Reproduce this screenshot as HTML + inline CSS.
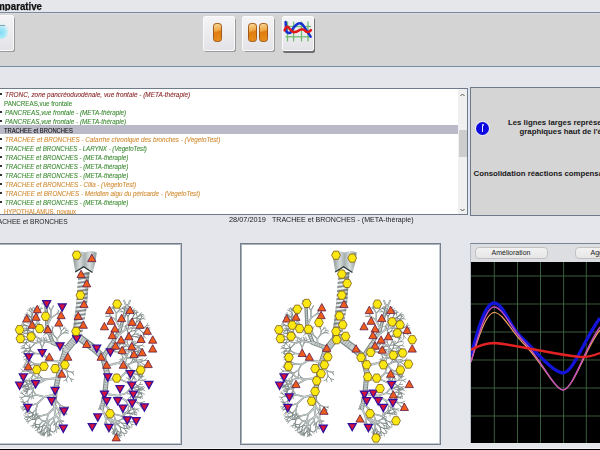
<!DOCTYPE html><html><head><meta charset="utf-8"><style>
*{margin:0;padding:0;box-sizing:border-box}
html,body{width:600px;height:450px;overflow:hidden;background:#e5e6eb;font-family:"Liberation Sans", sans-serif}
.abs{position:absolute}
.t{position:absolute;white-space:nowrap;transform-origin:0 0}
</style></head><body>

<div class="abs" style="left:0;top:0;width:600px;height:12px;background:#e6e7eb"></div>
<div class="t" style="left:-14.9px;top:0.4px;font-size:10.5px;font-weight:bold;color:#111;line-height:12px;transform:scaleX(0.92);-webkit-text-stroke:0.25px #111">comparative</div>
<div class="abs" style="left:0;top:11px;width:600px;height:1px;background:#e2e9f3"></div>
<div class="abs" style="left:0;top:12px;width:600px;height:1px;background:#7c8898"></div>
<div class="abs" style="left:0;top:13px;width:600px;height:53px;background:#d4d4d4"></div>
<div class="abs" style="left:0;top:13px;width:600px;height:1px;background:#d6dce2"></div>
<div class="abs" style="left:0;top:65px;width:600px;height:1px;background:#d0d6da"></div>
<div class="abs" style="left:0;top:66px;width:600px;height:1px;background:#7c8898"></div>
<div class="abs" style="left:0;top:67px;width:600px;height:1px;background:#dfe8f3"></div>
<div class="abs" style="left:-4.5px;top:16.5px;width:19.5px;height:35.5px;border-radius:2px;background:#9a9a9a;filter:blur(0.6px)"></div>
<div class="abs" style="left:-6px;top:15px;width:19.5px;height:35.5px;border-radius:2px;background:linear-gradient(#f4f4f6,#e4e4e8);border:1px solid #fafafa"><div class="abs" style="left:-2px;top:7px;width:15px;height:16px;border-radius:45%;background:radial-gradient(ellipse at 55% 60%,#7fdcf2 0%,#a8e8f8 35%,rgba(190,240,252,0.6) 60%,rgba(230,245,250,0) 75%)"></div><div class="abs" style="left:5px;top:8.5px;width:5px;height:1px;background:#9aa0a4"></div></div>
<div class="abs" style="left:204.0px;top:17.5px;width:32px;height:34.5px;border-radius:2px;background:#9a9a9a;filter:blur(0.6px)"></div>
<div class="abs" style="left:202.5px;top:16px;width:32px;height:34.5px;border-radius:2px;background:linear-gradient(#f4f4f6,#e4e4e8);border:1px solid #fafafa"><div class="abs" style="left:9.8px;top:6.3px;width:9px;height:18.5px;border-radius:3.2px;border:1px solid #a05a18;background:linear-gradient(165deg,#f8d898 0%,#f0a848 38%,#e07c10 48%,#e8901c 100%)"></div></div>
<div class="abs" style="left:243.5px;top:17.5px;width:31.5px;height:34.5px;border-radius:2px;background:#9a9a9a;filter:blur(0.6px)"></div>
<div class="abs" style="left:242px;top:16px;width:31.5px;height:34.5px;border-radius:2px;background:linear-gradient(#f4f4f6,#e4e4e8);border:1px solid #fafafa"><div class="abs" style="left:5.3px;top:6.3px;width:9px;height:18.5px;border-radius:3.2px;border:1px solid #a05a18;background:linear-gradient(165deg,#f8d898 0%,#f0a848 38%,#e07c10 48%,#e8901c 100%)"></div><div class="abs" style="left:16px;top:6.3px;width:9px;height:18.5px;border-radius:3.2px;border:1px solid #a05a18;background:linear-gradient(165deg,#f8d898 0%,#f0a848 38%,#e07c10 48%,#e8901c 100%)"></div></div>
<div class="abs" style="left:283.0px;top:17.5px;width:32px;height:35px;border-radius:2px;background:#707070;filter:blur(0.6px)"></div>
<div class="abs" style="left:281.5px;top:16px;width:32px;height:35px;border-radius:2px;background:linear-gradient(#f4f4f6,#e4e4e8);border:1px solid #fafafa"><svg class="abs" style="left:-1px;top:-1px" width="32" height="35" viewBox="0 0 32 35">
<g stroke="#5cb45c" stroke-width="1.3" fill="none" opacity="0.85">
<line x1="5.5" y1="5.5" x2="5.5" y2="25.5"/><line x1="11.6" y1="5.5" x2="11.6" y2="25.5"/><line x1="19.5" y1="5.5" x2="19.5" y2="25.5"/><line x1="26" y1="5.5" x2="26" y2="25.5"/>
<line x1="3.5" y1="10.5" x2="29" y2="10.5"/><line x1="3.5" y1="20.8" x2="29" y2="20.8"/></g>
<path d="M3.6,6 L4.3,15.5 Q5.5,17.5 8.4,16.7 Q12,10 16,7.6 Q19.5,6 22.3,11 L28.6,20.6" stroke="#1830d0" stroke-width="2.5" fill="none" stroke-linecap="round"/>
<path d="M2.6,14.4 Q4,10.2 5.8,10.8 Q9,15 11.6,16.3 Q15,16.3 18.5,13.6 Q21.5,12.5 24,15.6 Q26.5,17 29,14.2" stroke="#e01818" stroke-width="2.5" fill="none" stroke-linecap="round"/>
</svg></div>
<div class="abs" style="left:0;top:88px;width:468px;height:127px;background:#fff;border:1px solid #707b8a;border-left:none"></div>
<div class="abs" style="left:0;top:89px;width:458px;height:125px;overflow:hidden">
<div class="abs" style="left:0;top:3.5px;width:1.5px;height:2px;background:#333"></div>
<div class="t" style="left:5.2px;top:0.7px;font-size:7px;line-height:9px;color:#8a2828;font-style:italic;transform:scaleX(0.9175);-webkit-text-stroke:0.1px #8a2828">TRONC, zone pancréoduodénale, vue frontale - (META-thérapie)</div>
<div class="t" style="left:4.3px;top:9.7px;font-size:7px;line-height:9px;color:#3a8a30;transform:scaleX(0.89);-webkit-text-stroke:0.1px #3a8a30">PANCREAS,vue frontale</div>
<div class="abs" style="left:0;top:21.5px;width:1.5px;height:2px;background:#333"></div>
<div class="t" style="left:5.2px;top:18.7px;font-size:7px;line-height:9px;color:#3a8a30;font-style:italic;transform:scaleX(0.905);-webkit-text-stroke:0.1px #3a8a30">PANCREAS,vue frontale - (META-thérapie)</div>
<div class="abs" style="left:0;top:30.5px;width:1.5px;height:2px;background:#333"></div>
<div class="t" style="left:5.2px;top:27.7px;font-size:7px;line-height:9px;color:#3a8a30;font-style:italic;transform:scaleX(0.905);-webkit-text-stroke:0.1px #3a8a30">PANCREAS,vue frontale - (META-thérapie)</div>
<div class="abs" style="left:0;top:36px;width:458px;height:9px;background:#b9b9c7"></div>
<div class="t" style="left:4.3px;top:36.7px;font-size:7px;line-height:9px;color:#111;transform:scaleX(0.83);-webkit-text-stroke:0.1px #111">TRACHEE et BRONCHES</div>
<div class="abs" style="left:0;top:48.5px;width:1.5px;height:2px;background:#333"></div>
<div class="t" style="left:5.2px;top:45.7px;font-size:7px;line-height:9px;color:#d08a30;font-style:italic;transform:scaleX(0.9015);-webkit-text-stroke:0.1px #d08a30">TRACHEE et BRONCHES - Catarrhe chronique des bronches - (VegetoTest)</div>
<div class="abs" style="left:0;top:57.5px;width:1.5px;height:2px;background:#333"></div>
<div class="t" style="left:5.2px;top:54.7px;font-size:7px;line-height:9px;color:#3a8a30;font-style:italic;transform:scaleX(0.8726);-webkit-text-stroke:0.1px #3a8a30">TRACHEE et BRONCHES - LARYNX - (VegetoTest)</div>
<div class="abs" style="left:0;top:66.5px;width:1.5px;height:2px;background:#333"></div>
<div class="t" style="left:5.2px;top:63.7px;font-size:7px;line-height:9px;color:#3a8a30;font-style:italic;transform:scaleX(0.8787);-webkit-text-stroke:0.1px #3a8a30">TRACHEE et BRONCHES - (META-thérapie)</div>
<div class="abs" style="left:0;top:75.5px;width:1.5px;height:2px;background:#333"></div>
<div class="t" style="left:5.2px;top:72.7px;font-size:7px;line-height:9px;color:#3a8a30;font-style:italic;transform:scaleX(0.8787);-webkit-text-stroke:0.1px #3a8a30">TRACHEE et BRONCHES - (META-thérapie)</div>
<div class="abs" style="left:0;top:84.5px;width:1.5px;height:2px;background:#333"></div>
<div class="t" style="left:5.2px;top:81.7px;font-size:7px;line-height:9px;color:#3a8a30;font-style:italic;transform:scaleX(0.8787);-webkit-text-stroke:0.1px #3a8a30">TRACHEE et BRONCHES - (META-thérapie)</div>
<div class="abs" style="left:0;top:93.5px;width:1.5px;height:2px;background:#333"></div>
<div class="t" style="left:5.2px;top:90.7px;font-size:7px;line-height:9px;color:#d08a30;font-style:italic;transform:scaleX(0.8826);-webkit-text-stroke:0.1px #d08a30">TRACHEE et BRONCHES - Cilia - (VegetoTest)</div>
<div class="abs" style="left:0;top:102.5px;width:1.5px;height:2px;background:#333"></div>
<div class="t" style="left:5.2px;top:99.7px;font-size:7px;line-height:9px;color:#d08a30;font-style:italic;transform:scaleX(0.896);-webkit-text-stroke:0.1px #d08a30">TRACHEE et BRONCHES - Méridien aigu du péricarde - (VegetoTest)</div>
<div class="abs" style="left:0;top:111.5px;width:1.5px;height:2px;background:#333"></div>
<div class="t" style="left:5.2px;top:108.7px;font-size:7px;line-height:9px;color:#3a8a30;font-style:italic;transform:scaleX(0.8787);-webkit-text-stroke:0.1px #3a8a30">TRACHEE et BRONCHES - (META-thérapie)</div>
<div class="t" style="left:4.3px;top:117.7px;font-size:7px;line-height:9px;color:#d08a30;transform:scaleX(0.854);-webkit-text-stroke:0.1px #d08a30">HYPOTHALAMUS, noyaux</div>
</div>
<div class="abs" style="left:458px;top:89px;width:9px;height:125px;background:#f0f0f0"></div>
<div class="abs" style="left:458.5px;top:129.5px;width:8px;height:27.5px;background:#cdcdcd"></div>
<svg class="abs" style="left:458px;top:90px" width="9" height="125"><path d="M2.5,6 L4.5,4 L6.5,6" stroke="#555" stroke-width="1" fill="none"/><path d="M2.5,119 L4.5,121 L6.5,119" stroke="#555" stroke-width="1" fill="none"/></svg>
<div class="abs" style="left:470px;top:87px;width:140px;height:129px;background:#d5d5d6;border:1px solid #707b8a"></div>
<div class="abs" style="left:468px;top:87px;width:2px;height:129px;background:#dfe8f2"></div>
<div class="abs" style="left:476.2px;top:121.9px;width:13px;height:13px;border-radius:50%;background:#0c08e0;box-shadow:0 0 0 1px rgba(240,240,255,0.7)"></div>
<div class="abs" style="left:481.8px;top:123.9px;width:1.8px;height:1.8px;border-radius:50%;background:#e8e8ff"></div><div class="abs" style="left:481.9px;top:126.2px;width:1.6px;height:6px;background:#e8e8ff"></div>
<div class="t" style="left:508px;top:117.5px;font-size:7.8px;font-weight:bold;color:#181818;line-height:9px">Les lignes larges représentent</div>
<div class="t" style="left:519.5px;top:126.5px;font-size:7.8px;font-weight:bold;color:#181818;line-height:9px">graphiques haut de l'écran</div>
<div class="t" style="left:473.5px;top:168.7px;font-size:7.8px;font-weight:bold;color:#181818;line-height:9px">Consolidation réactions compensatoires</div>
<div class="t" style="left:-11.5px;top:216px;font-size:7.4px;color:#222;line-height:11px;transform:scaleX(0.9)">TRACHEE et BRONCHES</div>
<div class="t" style="left:228.5px;top:214px;font-size:7.6px;color:#1a1a1a;line-height:11px;transform:scaleX(0.97)">28/07/2019</div>
<div class="t" style="left:271.5px;top:214px;font-size:7.6px;color:#1a1a1a;line-height:11px;transform:scaleX(0.93)">TRACHEE et BRONCHES - (META-thérapie)</div>
<div class="abs" style="left:-20px;top:243px;width:202px;height:202px;background:#fff;border:1px solid #76808c;box-shadow:inset -1px -1px 0 #c4cad2, inset 1px 1px 0 #a8b0ba"></div>
<div class="abs" style="left:240px;top:243px;width:201px;height:202px;background:#fff;border:1px solid #76808c;box-shadow:inset -1px -1px 0 #c4cad2, inset 1px 1px 0 #a8b0ba"></div>
<svg class="abs" style="left:-19px;top:244px" width="199" height="199" viewBox="-19 244 199 199"><defs><linearGradient id="lx" x1="0" x2="1"><stop offset="0" stop-color="#8a9494"/><stop offset="0.3" stop-color="#d4dada"/><stop offset="0.5" stop-color="#a8b0b0"/><stop offset="0.7" stop-color="#d8dede"/><stop offset="1" stop-color="#8e9898"/></linearGradient>
<linearGradient id="tr" x1="0" x2="1"><stop offset="0" stop-color="#727c7c"/><stop offset="0.3" stop-color="#e6eaea"/><stop offset="0.65" stop-color="#f6f8f8"/><stop offset="1" stop-color="#7e8888"/></linearGradient>
<pattern id="rings" width="11" height="4" patternUnits="userSpaceOnUse" patternTransform="rotate(-8)"><rect y="2.2" width="11" height="1.6" fill="#5e6868" opacity="0.9"/></pattern></defs>
<path d="M78.5,272 L89.5,272 L87,305 L82,336 L72,338 L76,305 Z" fill="url(#tr)"/>
<path d="M78.5,272 L89.5,272 L87,305 L82,336 L72,338 L76,305 Z" fill="url(#rings)"/>
<path d="M72.6,252.5 Q78,249.5 84.5,252.5 Q91,249.5 96.8,252.5 L95.5,262 L92.6,272.5 L84,267.5 L75.4,272.5 L73.6,262 Z" fill="url(#lx)"/>
<path d="M75.2,272 L83.6,266.8 L92.4,272.5" stroke="#263030" stroke-width="1.2" fill="none"/><g stroke="#7a8684" stroke-linecap="round" fill="none"><line x1="76.0" y1="338.0" x2="66.0" y2="350.0" stroke-width="7.20"/><line x1="66.0" y1="350.0" x2="60.0" y2="368.0" stroke-width="6.27"/><line x1="60.0" y1="368.0" x2="56.0" y2="388.0" stroke-width="5.33"/><line x1="56.0" y1="388.0" x2="54.0" y2="404.0" stroke-width="4.40"/><line x1="80.0" y1="338.0" x2="92.0" y2="347.0" stroke-width="7.20"/><line x1="92.0" y1="347.0" x2="103.0" y2="357.0" stroke-width="6.50"/><line x1="103.0" y1="357.0" x2="107.0" y2="373.0" stroke-width="5.80"/><line x1="107.0" y1="373.0" x2="105.0" y2="392.0" stroke-width="5.10"/><line x1="105.0" y1="392.0" x2="102.0" y2="408.0" stroke-width="4.40"/><line x1="64.0" y1="347.0" x2="53.0" y2="343.0" stroke-width="4.40"/><line x1="53.0" y1="343.0" x2="47.0" y2="328.0" stroke-width="3.90"/><line x1="47.0" y1="328.0" x2="46.0" y2="306.0" stroke-width="3.40"/><line x1="103.0" y1="357.0" x2="111.0" y2="345.0" stroke-width="4.40"/><line x1="111.0" y1="345.0" x2="120.0" y2="330.0" stroke-width="3.90"/><line x1="120.0" y1="330.0" x2="127.0" y2="306.0" stroke-width="3.40"/><line x1="53.0" y1="343.0" x2="43.2" y2="341.0" stroke-width="1.90"/><line x1="43.2" y1="341.0" x2="35.4" y2="343.2" stroke-width="1.53"/><line x1="35.4" y1="343.2" x2="30.9" y2="347.4" stroke-width="1.23"/><line x1="30.9" y1="347.4" x2="29.0" y2="351.8" stroke-width="1.01"/><line x1="29.0" y1="351.8" x2="30.0" y2="355.1" stroke-width="0.83"/><line x1="30.0" y1="355.1" x2="31.5" y2="357.3" stroke-width="0.70"/><line x1="30.0" y1="355.1" x2="30.1" y2="357.4" stroke-width="0.70"/><line x1="29.0" y1="351.8" x2="26.1" y2="353.7" stroke-width="0.83"/><line x1="26.1" y1="353.7" x2="25.1" y2="356.2" stroke-width="0.70"/><line x1="26.1" y1="353.7" x2="23.3" y2="353.2" stroke-width="0.70"/><line x1="30.9" y1="347.4" x2="26.5" y2="348.7" stroke-width="1.01"/><line x1="26.5" y1="348.7" x2="24.3" y2="351.6" stroke-width="0.83"/><line x1="24.3" y1="351.6" x2="24.5" y2="354.2" stroke-width="0.70"/><line x1="24.3" y1="351.6" x2="21.5" y2="352.4" stroke-width="0.70"/><line x1="26.5" y1="348.7" x2="23.4" y2="348.0" stroke-width="0.83"/><line x1="23.4" y1="348.0" x2="20.9" y2="348.7" stroke-width="0.70"/><line x1="23.4" y1="348.0" x2="21.2" y2="346.8" stroke-width="0.70"/><line x1="35.4" y1="343.2" x2="29.8" y2="341.4" stroke-width="1.23"/><line x1="29.8" y1="341.4" x2="25.9" y2="343.1" stroke-width="1.01"/><line x1="25.9" y1="343.1" x2="24.1" y2="345.5" stroke-width="0.83"/><line x1="24.1" y1="345.5" x2="24.4" y2="347.6" stroke-width="0.70"/><line x1="24.1" y1="345.5" x2="22.1" y2="346.1" stroke-width="0.70"/><line x1="25.9" y1="343.1" x2="22.5" y2="342.2" stroke-width="0.83"/><line x1="22.5" y1="342.2" x2="19.8" y2="343.0" stroke-width="0.70"/><line x1="22.5" y1="342.2" x2="20.1" y2="340.8" stroke-width="0.70"/><line x1="29.8" y1="341.4" x2="27.8" y2="337.8" stroke-width="1.01"/><line x1="27.8" y1="337.8" x2="24.8" y2="336.4" stroke-width="0.83"/><line x1="24.8" y1="336.4" x2="22.5" y2="336.8" stroke-width="0.70"/><line x1="24.8" y1="336.4" x2="23.5" y2="334.4" stroke-width="0.70"/><line x1="27.8" y1="337.8" x2="27.6" y2="334.8" stroke-width="0.83"/><line x1="27.6" y1="334.8" x2="26.6" y2="333.0" stroke-width="0.70"/><line x1="27.6" y1="334.8" x2="28.4" y2="332.9" stroke-width="0.70"/><line x1="43.2" y1="341.0" x2="36.6" y2="337.1" stroke-width="1.53"/><line x1="36.6" y1="337.1" x2="31.1" y2="336.5" stroke-width="1.23"/><line x1="31.1" y1="336.5" x2="27.7" y2="339.1" stroke-width="1.01"/><line x1="27.7" y1="339.1" x2="26.3" y2="342.0" stroke-width="0.83"/><line x1="26.3" y1="342.0" x2="26.3" y2="344.7" stroke-width="0.70"/><line x1="26.3" y1="342.0" x2="23.9" y2="343.2" stroke-width="0.70"/><line x1="27.7" y1="339.1" x2="24.6" y2="339.8" stroke-width="0.83"/><line x1="24.6" y1="339.8" x2="22.7" y2="341.5" stroke-width="0.70"/><line x1="24.6" y1="339.8" x2="22.1" y2="339.0" stroke-width="0.70"/><line x1="31.1" y1="336.5" x2="28.0" y2="333.5" stroke-width="1.01"/><line x1="28.0" y1="333.5" x2="25.1" y2="333.3" stroke-width="0.83"/><line x1="25.1" y1="333.3" x2="23.1" y2="334.0" stroke-width="0.70"/><line x1="25.1" y1="333.3" x2="23.0" y2="332.3" stroke-width="0.70"/><line x1="28.0" y1="333.5" x2="27.3" y2="330.3" stroke-width="0.83"/><line x1="27.3" y1="330.3" x2="25.6" y2="328.6" stroke-width="0.70"/><line x1="27.3" y1="330.3" x2="27.6" y2="327.9" stroke-width="0.70"/><line x1="36.6" y1="337.1" x2="33.2" y2="332.0" stroke-width="1.23"/><line x1="33.2" y1="332.0" x2="29.2" y2="330.7" stroke-width="1.01"/><line x1="29.2" y1="330.7" x2="26.3" y2="330.5" stroke-width="0.83"/><line x1="26.3" y1="330.5" x2="24.4" y2="331.4" stroke-width="0.70"/><line x1="26.3" y1="330.5" x2="24.7" y2="329.1" stroke-width="0.70"/><line x1="29.2" y1="330.7" x2="26.6" y2="328.4" stroke-width="0.83"/><line x1="26.6" y1="328.4" x2="24.3" y2="328.1" stroke-width="0.70"/><line x1="26.6" y1="328.4" x2="25.9" y2="326.1" stroke-width="0.70"/><line x1="33.2" y1="332.0" x2="33.3" y2="327.1" stroke-width="1.01"/><line x1="33.3" y1="327.1" x2="30.7" y2="324.2" stroke-width="0.83"/><line x1="30.7" y1="324.2" x2="27.8" y2="323.7" stroke-width="0.70"/><line x1="30.7" y1="324.2" x2="30.4" y2="321.0" stroke-width="0.70"/><line x1="33.3" y1="327.1" x2="35.7" y2="324.2" stroke-width="0.83"/><line x1="35.7" y1="324.2" x2="36.8" y2="321.4" stroke-width="0.70"/><line x1="35.7" y1="324.2" x2="38.2" y2="323.2" stroke-width="0.70"/><line x1="49.0" y1="334.0" x2="41.1" y2="327.9" stroke-width="1.90"/><line x1="41.1" y1="327.9" x2="34.7" y2="325.2" stroke-width="1.53"/><line x1="34.7" y1="325.2" x2="30.0" y2="326.7" stroke-width="1.23"/><line x1="30.0" y1="326.7" x2="28.0" y2="329.6" stroke-width="1.01"/><line x1="28.0" y1="329.6" x2="27.6" y2="332.4" stroke-width="0.83"/><line x1="27.6" y1="332.4" x2="28.2" y2="334.4" stroke-width="0.70"/><line x1="27.6" y1="332.4" x2="26.1" y2="333.9" stroke-width="0.70"/><line x1="28.0" y1="329.6" x2="25.4" y2="330.6" stroke-width="0.83"/><line x1="25.4" y1="330.6" x2="23.6" y2="332.1" stroke-width="0.70"/><line x1="25.4" y1="330.6" x2="23.5" y2="330.5" stroke-width="0.70"/><line x1="30.0" y1="326.7" x2="26.2" y2="325.5" stroke-width="1.01"/><line x1="26.2" y1="325.5" x2="23.4" y2="325.7" stroke-width="0.83"/><line x1="23.4" y1="325.7" x2="21.6" y2="326.9" stroke-width="0.70"/><line x1="23.4" y1="325.7" x2="21.6" y2="324.6" stroke-width="0.70"/><line x1="26.2" y1="325.5" x2="23.8" y2="324.2" stroke-width="0.83"/><line x1="23.8" y1="324.2" x2="21.9" y2="323.9" stroke-width="0.70"/><line x1="23.8" y1="324.2" x2="22.7" y2="322.6" stroke-width="0.70"/><line x1="34.7" y1="325.2" x2="32.1" y2="321.2" stroke-width="1.23"/><line x1="32.1" y1="321.2" x2="29.1" y2="319.0" stroke-width="1.01"/><line x1="29.1" y1="319.0" x2="26.3" y2="318.4" stroke-width="0.83"/><line x1="26.3" y1="318.4" x2="24.3" y2="319.4" stroke-width="0.70"/><line x1="26.3" y1="318.4" x2="24.6" y2="316.8" stroke-width="0.70"/><line x1="29.1" y1="319.0" x2="27.5" y2="316.5" stroke-width="0.83"/><line x1="27.5" y1="316.5" x2="25.8" y2="315.3" stroke-width="0.70"/><line x1="27.5" y1="316.5" x2="27.6" y2="314.1" stroke-width="0.70"/><line x1="32.1" y1="321.2" x2="31.3" y2="317.9" stroke-width="1.01"/><line x1="31.3" y1="317.9" x2="29.5" y2="316.1" stroke-width="0.83"/><line x1="29.5" y1="316.1" x2="27.8" y2="315.6" stroke-width="0.70"/><line x1="29.5" y1="316.1" x2="28.8" y2="314.5" stroke-width="0.70"/><line x1="31.3" y1="317.9" x2="31.6" y2="315.5" stroke-width="0.83"/><line x1="31.6" y1="315.5" x2="30.6" y2="313.8" stroke-width="0.70"/><line x1="31.6" y1="315.5" x2="32.5" y2="314.0" stroke-width="0.70"/><line x1="41.1" y1="327.9" x2="37.8" y2="320.9" stroke-width="1.53"/><line x1="37.8" y1="320.9" x2="33.4" y2="317.3" stroke-width="1.23"/><line x1="33.4" y1="317.3" x2="29.3" y2="316.7" stroke-width="1.01"/><line x1="29.3" y1="316.7" x2="26.3" y2="318.0" stroke-width="0.83"/><line x1="26.3" y1="318.0" x2="25.0" y2="320.3" stroke-width="0.70"/><line x1="26.3" y1="318.0" x2="24.1" y2="317.5" stroke-width="0.70"/><line x1="29.3" y1="316.7" x2="27.2" y2="314.6" stroke-width="0.83"/><line x1="27.2" y1="314.6" x2="25.1" y2="314.2" stroke-width="0.70"/><line x1="27.2" y1="314.6" x2="27.0" y2="312.3" stroke-width="0.70"/><line x1="33.4" y1="317.3" x2="32.0" y2="313.2" stroke-width="1.01"/><line x1="32.0" y1="313.2" x2="29.9" y2="311.0" stroke-width="0.83"/><line x1="29.9" y1="311.0" x2="27.5" y2="310.1" stroke-width="0.70"/><line x1="29.9" y1="311.0" x2="29.0" y2="308.7" stroke-width="0.70"/><line x1="32.0" y1="313.2" x2="31.9" y2="310.1" stroke-width="0.83"/><line x1="31.9" y1="310.1" x2="30.8" y2="307.9" stroke-width="0.70"/><line x1="31.9" y1="310.1" x2="32.6" y2="307.9" stroke-width="0.70"/><line x1="37.8" y1="320.9" x2="37.2" y2="315.5" stroke-width="1.23"/><line x1="37.2" y1="315.5" x2="34.8" y2="311.9" stroke-width="1.01"/><line x1="34.8" y1="311.9" x2="32.1" y2="309.9" stroke-width="0.83"/><line x1="32.1" y1="309.9" x2="29.6" y2="308.7" stroke-width="0.70"/><line x1="32.1" y1="309.9" x2="30.6" y2="307.8" stroke-width="0.70"/><line x1="34.8" y1="311.9" x2="34.5" y2="308.9" stroke-width="0.83"/><line x1="34.5" y1="308.9" x2="33.3" y2="307.2" stroke-width="0.70"/><line x1="34.5" y1="308.9" x2="35.5" y2="306.9" stroke-width="0.70"/><line x1="37.2" y1="315.5" x2="38.8" y2="311.5" stroke-width="1.01"/><line x1="38.8" y1="311.5" x2="38.2" y2="308.1" stroke-width="0.83"/><line x1="38.2" y1="308.1" x2="36.6" y2="306.1" stroke-width="0.70"/><line x1="38.2" y1="308.1" x2="39.4" y2="305.9" stroke-width="0.70"/><line x1="38.8" y1="311.5" x2="40.7" y2="309.1" stroke-width="0.83"/><line x1="40.7" y1="309.1" x2="41.2" y2="307.0" stroke-width="0.70"/><line x1="40.7" y1="309.1" x2="42.8" y2="308.2" stroke-width="0.70"/><line x1="47.0" y1="326.0" x2="51.0" y2="318.0" stroke-width="1.73"/><line x1="51.0" y1="318.0" x2="50.9" y2="310.8" stroke-width="1.39"/><line x1="50.9" y1="310.8" x2="48.5" y2="306.3" stroke-width="1.13"/><line x1="48.5" y1="306.3" x2="45.1" y2="304.2" stroke-width="0.93"/><line x1="45.1" y1="304.2" x2="41.8" y2="303.8" stroke-width="0.77"/><line x1="45.1" y1="304.2" x2="43.5" y2="302.0" stroke-width="0.77"/><line x1="48.5" y1="306.3" x2="48.7" y2="302.7" stroke-width="0.93"/><line x1="48.7" y1="302.7" x2="47.9" y2="301.6" stroke-width="0.77"/><line x1="50.9" y1="310.8" x2="53.4" y2="305.8" stroke-width="1.13"/><line x1="51.0" y1="318.0" x2="57.0" y2="313.8" stroke-width="1.39"/><line x1="57.0" y1="313.8" x2="58.4" y2="311.6" stroke-width="1.13"/><line x1="58.4" y1="311.6" x2="58.6" y2="310.6" stroke-width="0.93"/><line x1="58.6" y1="310.6" x2="58.1" y2="309.9" stroke-width="0.77"/><line x1="57.0" y1="313.8" x2="59.6" y2="313.6" stroke-width="1.13"/><line x1="59.6" y1="313.6" x2="60.3" y2="313.1" stroke-width="0.93"/><line x1="59.6" y1="313.6" x2="61.3" y2="314.6" stroke-width="0.93"/><line x1="46.0" y1="308.0" x2="43.0" y2="300.6" stroke-width="1.73"/><line x1="46.0" y1="308.0" x2="47.5" y2="304.3" stroke-width="1.73"/><line x1="47.5" y1="304.3" x2="47.1" y2="301.5" stroke-width="1.39"/><line x1="47.5" y1="304.3" x2="50.1" y2="302.3" stroke-width="1.39"/><line x1="58.0" y1="346.0" x2="57.3" y2="339.0" stroke-width="1.56"/><line x1="57.3" y1="339.0" x2="53.5" y2="335.0" stroke-width="1.26"/><line x1="53.5" y1="335.0" x2="49.4" y2="333.3" stroke-width="1.03"/><line x1="49.4" y1="333.3" x2="45.8" y2="333.7" stroke-width="0.85"/><line x1="45.8" y1="333.7" x2="43.6" y2="335.4" stroke-width="0.70"/><line x1="45.8" y1="333.7" x2="43.6" y2="332.3" stroke-width="0.70"/><line x1="49.4" y1="333.3" x2="47.3" y2="331.0" stroke-width="0.85"/><line x1="47.3" y1="331.0" x2="45.1" y2="329.7" stroke-width="0.70"/><line x1="47.3" y1="331.0" x2="46.2" y2="329.0" stroke-width="0.70"/><line x1="53.5" y1="335.0" x2="52.4" y2="331.2" stroke-width="1.03"/><line x1="52.4" y1="331.2" x2="50.2" y2="329.1" stroke-width="0.85"/><line x1="50.2" y1="329.1" x2="47.8" y2="328.3" stroke-width="0.70"/><line x1="50.2" y1="329.1" x2="49.3" y2="326.7" stroke-width="0.70"/><line x1="52.4" y1="331.2" x2="52.7" y2="328.2" stroke-width="0.85"/><line x1="52.7" y1="328.2" x2="51.7" y2="326.1" stroke-width="0.70"/><line x1="52.7" y1="328.2" x2="54.3" y2="326.5" stroke-width="0.70"/><line x1="57.3" y1="339.0" x2="60.4" y2="334.8" stroke-width="1.26"/><line x1="60.4" y1="334.8" x2="61.3" y2="331.1" stroke-width="1.03"/><line x1="61.3" y1="331.1" x2="60.3" y2="328.4" stroke-width="0.85"/><line x1="60.3" y1="328.4" x2="58.9" y2="326.4" stroke-width="0.70"/><line x1="60.3" y1="328.4" x2="60.2" y2="326.1" stroke-width="0.70"/><line x1="61.3" y1="331.1" x2="63.4" y2="328.9" stroke-width="0.85"/><line x1="63.4" y1="328.9" x2="64.3" y2="326.9" stroke-width="0.70"/><line x1="63.4" y1="328.9" x2="65.2" y2="327.8" stroke-width="0.70"/><line x1="60.4" y1="334.8" x2="63.8" y2="332.9" stroke-width="1.03"/><line x1="63.8" y1="332.9" x2="65.8" y2="330.6" stroke-width="0.85"/><line x1="65.8" y1="330.6" x2="65.9" y2="328.3" stroke-width="0.70"/><line x1="65.8" y1="330.6" x2="68.2" y2="330.2" stroke-width="0.70"/><line x1="63.8" y1="332.9" x2="66.6" y2="332.7" stroke-width="0.85"/><line x1="66.6" y1="332.7" x2="68.4" y2="331.7" stroke-width="0.70"/><line x1="66.6" y1="332.7" x2="68.5" y2="333.6" stroke-width="0.70"/><line x1="61.0" y1="362.0" x2="49.1" y2="360.2" stroke-width="2.07"/><line x1="49.1" y1="360.2" x2="41.4" y2="364.5" stroke-width="1.66"/><line x1="41.4" y1="364.5" x2="38.6" y2="369.9" stroke-width="1.34"/><line x1="38.6" y1="369.9" x2="38.7" y2="374.2" stroke-width="1.09"/><line x1="38.7" y1="374.2" x2="40.7" y2="377.0" stroke-width="0.89"/><line x1="40.7" y1="377.0" x2="43.1" y2="378.2" stroke-width="0.74"/><line x1="40.7" y1="377.0" x2="41.5" y2="379.4" stroke-width="0.74"/><line x1="38.7" y1="374.2" x2="37.8" y2="377.2" stroke-width="0.89"/><line x1="37.8" y1="377.2" x2="38.0" y2="379.3" stroke-width="0.74"/><line x1="37.8" y1="377.2" x2="36.3" y2="379.1" stroke-width="0.74"/><line x1="38.6" y1="369.9" x2="34.4" y2="372.8" stroke-width="1.09"/><line x1="34.4" y1="372.8" x2="32.4" y2="376.2" stroke-width="0.89"/><line x1="32.4" y1="376.2" x2="31.6" y2="379.2" stroke-width="0.74"/><line x1="32.4" y1="376.2" x2="29.9" y2="378.3" stroke-width="0.74"/><line x1="34.4" y1="372.8" x2="30.6" y2="372.7" stroke-width="0.89"/><line x1="30.6" y1="372.7" x2="28.2" y2="373.9" stroke-width="0.74"/><line x1="30.6" y1="372.7" x2="28.5" y2="371.0" stroke-width="0.74"/><line x1="41.4" y1="364.5" x2="35.4" y2="363.9" stroke-width="1.34"/><line x1="35.4" y1="363.9" x2="30.7" y2="365.6" stroke-width="1.09"/><line x1="30.7" y1="365.6" x2="28.5" y2="368.5" stroke-width="0.89"/><line x1="28.5" y1="368.5" x2="28.1" y2="371.1" stroke-width="0.74"/><line x1="28.5" y1="368.5" x2="26.2" y2="369.7" stroke-width="0.74"/><line x1="30.7" y1="365.6" x2="26.9" y2="364.7" stroke-width="0.89"/><line x1="26.9" y1="364.7" x2="24.2" y2="364.9" stroke-width="0.74"/><line x1="26.9" y1="364.7" x2="24.5" y2="362.9" stroke-width="0.74"/><line x1="35.4" y1="363.9" x2="31.3" y2="362.0" stroke-width="1.09"/><line x1="31.3" y1="362.0" x2="27.9" y2="361.8" stroke-width="0.89"/><line x1="27.9" y1="361.8" x2="25.4" y2="363.1" stroke-width="0.74"/><line x1="27.9" y1="361.8" x2="25.6" y2="360.4" stroke-width="0.74"/><line x1="31.3" y1="362.0" x2="29.3" y2="359.2" stroke-width="0.89"/><line x1="29.3" y1="359.2" x2="27.4" y2="357.7" stroke-width="0.74"/><line x1="29.3" y1="359.2" x2="29.0" y2="356.6" stroke-width="0.74"/><line x1="49.1" y1="360.2" x2="42.7" y2="353.8" stroke-width="1.66"/><line x1="42.7" y1="353.8" x2="35.5" y2="353.5" stroke-width="1.34"/><line x1="35.5" y1="353.5" x2="29.9" y2="355.4" stroke-width="1.09"/><line x1="29.9" y1="355.4" x2="26.9" y2="358.3" stroke-width="0.89"/><line x1="26.9" y1="358.3" x2="26.1" y2="361.6" stroke-width="0.74"/><line x1="26.9" y1="358.3" x2="23.8" y2="359.8" stroke-width="0.74"/><line x1="29.9" y1="355.4" x2="25.7" y2="355.7" stroke-width="0.89"/><line x1="25.7" y1="355.7" x2="23.2" y2="357.3" stroke-width="0.74"/><line x1="25.7" y1="355.7" x2="23.5" y2="353.7" stroke-width="0.74"/><line x1="35.5" y1="353.5" x2="30.9" y2="351.0" stroke-width="1.09"/><line x1="30.9" y1="351.0" x2="26.8" y2="351.0" stroke-width="0.89"/><line x1="26.8" y1="351.0" x2="23.7" y2="352.1" stroke-width="0.74"/><line x1="26.8" y1="351.0" x2="24.1" y2="350.2" stroke-width="0.74"/><line x1="30.9" y1="351.0" x2="29.6" y2="347.2" stroke-width="0.89"/><line x1="29.6" y1="347.2" x2="27.2" y2="345.0" stroke-width="0.74"/><line x1="29.6" y1="347.2" x2="29.8" y2="344.2" stroke-width="0.74"/><line x1="42.7" y1="353.8" x2="42.2" y2="347.5" stroke-width="1.34"/><line x1="42.2" y1="347.5" x2="40.3" y2="343.4" stroke-width="1.09"/><line x1="40.3" y1="343.4" x2="37.9" y2="341.3" stroke-width="0.89"/><line x1="37.9" y1="341.3" x2="35.8" y2="340.8" stroke-width="0.74"/><line x1="37.9" y1="341.3" x2="37.2" y2="339.0" stroke-width="0.74"/><line x1="40.3" y1="343.4" x2="40.3" y2="339.8" stroke-width="0.89"/><line x1="40.3" y1="339.8" x2="38.8" y2="337.3" stroke-width="0.74"/><line x1="40.3" y1="339.8" x2="41.8" y2="337.4" stroke-width="0.74"/><line x1="42.2" y1="347.5" x2="44.0" y2="343.1" stroke-width="1.09"/><line x1="44.0" y1="343.1" x2="44.2" y2="339.4" stroke-width="0.89"/><line x1="44.2" y1="339.4" x2="43.3" y2="337.0" stroke-width="0.74"/><line x1="44.2" y1="339.4" x2="45.6" y2="336.9" stroke-width="0.74"/><line x1="44.0" y1="343.1" x2="46.1" y2="340.5" stroke-width="0.89"/><line x1="46.1" y1="340.5" x2="46.3" y2="338.1" stroke-width="0.74"/><line x1="46.1" y1="340.5" x2="48.2" y2="339.7" stroke-width="0.74"/><line x1="58.0" y1="378.0" x2="46.1" y2="379.2" stroke-width="2.07"/><line x1="46.1" y1="379.2" x2="38.3" y2="383.4" stroke-width="1.66"/><line x1="38.3" y1="383.4" x2="34.0" y2="387.5" stroke-width="1.34"/><line x1="34.0" y1="387.5" x2="32.2" y2="392.1" stroke-width="1.09"/><line x1="32.2" y1="392.1" x2="32.3" y2="396.0" stroke-width="0.89"/><line x1="32.3" y1="396.0" x2="33.6" y2="398.7" stroke-width="0.74"/><line x1="32.3" y1="396.0" x2="31.6" y2="399.1" stroke-width="0.74"/><line x1="32.2" y1="392.1" x2="29.8" y2="394.9" stroke-width="0.89"/><line x1="29.8" y1="394.9" x2="29.7" y2="397.6" stroke-width="0.74"/><line x1="29.8" y1="394.9" x2="27.3" y2="395.9" stroke-width="0.74"/><line x1="34.0" y1="387.5" x2="29.4" y2="389.0" stroke-width="1.09"/><line x1="29.4" y1="389.0" x2="26.8" y2="391.1" stroke-width="0.89"/><line x1="26.8" y1="391.1" x2="25.9" y2="393.6" stroke-width="0.74"/><line x1="26.8" y1="391.1" x2="24.1" y2="391.8" stroke-width="0.74"/><line x1="29.4" y1="389.0" x2="26.0" y2="388.2" stroke-width="0.89"/><line x1="26.0" y1="388.2" x2="23.7" y2="389.1" stroke-width="0.74"/><line x1="26.0" y1="388.2" x2="24.0" y2="386.8" stroke-width="0.74"/><line x1="38.3" y1="383.4" x2="32.1" y2="384.8" stroke-width="1.34"/><line x1="32.1" y1="384.8" x2="28.6" y2="388.5" stroke-width="1.09"/><line x1="28.6" y1="388.5" x2="27.2" y2="392.0" stroke-width="0.89"/><line x1="27.2" y1="392.0" x2="27.2" y2="394.8" stroke-width="0.74"/><line x1="27.2" y1="392.0" x2="25.2" y2="394.2" stroke-width="0.74"/><line x1="28.6" y1="388.5" x2="25.4" y2="390.1" stroke-width="0.89"/><line x1="25.4" y1="390.1" x2="23.6" y2="392.1" stroke-width="0.74"/><line x1="25.4" y1="390.1" x2="22.9" y2="390.4" stroke-width="0.74"/><line x1="32.1" y1="384.8" x2="27.3" y2="383.9" stroke-width="1.09"/><line x1="27.3" y1="383.9" x2="24.0" y2="385.8" stroke-width="0.89"/><line x1="24.0" y1="385.8" x2="22.2" y2="388.3" stroke-width="0.74"/><line x1="24.0" y1="385.8" x2="21.2" y2="386.1" stroke-width="0.74"/><line x1="27.3" y1="383.9" x2="24.9" y2="381.4" stroke-width="0.89"/><line x1="24.9" y1="381.4" x2="22.5" y2="381.0" stroke-width="0.74"/><line x1="24.9" y1="381.4" x2="24.3" y2="378.8" stroke-width="0.74"/><line x1="46.1" y1="379.2" x2="37.1" y2="378.0" stroke-width="1.66"/><line x1="37.1" y1="378.0" x2="31.1" y2="380.5" stroke-width="1.34"/><line x1="31.1" y1="380.5" x2="28.4" y2="384.4" stroke-width="1.09"/><line x1="28.4" y1="384.4" x2="28.4" y2="387.8" stroke-width="0.89"/><line x1="28.4" y1="387.8" x2="30.0" y2="389.9" stroke-width="0.74"/><line x1="28.4" y1="387.8" x2="26.9" y2="390.0" stroke-width="0.74"/><line x1="28.4" y1="384.4" x2="25.1" y2="385.3" stroke-width="0.89"/><line x1="25.1" y1="385.3" x2="23.7" y2="387.3" stroke-width="0.74"/><line x1="25.1" y1="385.3" x2="22.7" y2="384.5" stroke-width="0.74"/><line x1="31.1" y1="380.5" x2="26.3" y2="380.8" stroke-width="1.09"/><line x1="26.3" y1="380.8" x2="23.1" y2="382.8" stroke-width="0.89"/><line x1="23.1" y1="382.8" x2="21.5" y2="385.4" stroke-width="0.74"/><line x1="23.1" y1="382.8" x2="20.2" y2="382.9" stroke-width="0.74"/><line x1="26.3" y1="380.8" x2="23.1" y2="379.0" stroke-width="0.89"/><line x1="23.1" y1="379.0" x2="20.5" y2="378.6" stroke-width="0.74"/><line x1="23.1" y1="379.0" x2="21.5" y2="377.2" stroke-width="0.74"/><line x1="37.1" y1="378.0" x2="32.2" y2="373.4" stroke-width="1.34"/><line x1="32.2" y1="373.4" x2="27.4" y2="371.1" stroke-width="1.09"/><line x1="27.4" y1="371.1" x2="23.3" y2="371.0" stroke-width="0.89"/><line x1="23.3" y1="371.0" x2="20.7" y2="372.8" stroke-width="0.74"/><line x1="23.3" y1="371.0" x2="20.9" y2="368.9" stroke-width="0.74"/><line x1="27.4" y1="371.1" x2="25.0" y2="368.1" stroke-width="0.89"/><line x1="25.0" y1="368.1" x2="22.7" y2="366.8" stroke-width="0.74"/><line x1="25.0" y1="368.1" x2="24.2" y2="365.3" stroke-width="0.74"/><line x1="32.2" y1="373.4" x2="29.4" y2="369.0" stroke-width="1.09"/><line x1="29.4" y1="369.0" x2="26.0" y2="367.3" stroke-width="0.89"/><line x1="26.0" y1="367.3" x2="23.4" y2="367.1" stroke-width="0.74"/><line x1="26.0" y1="367.3" x2="24.4" y2="364.8" stroke-width="0.74"/><line x1="29.4" y1="369.0" x2="29.3" y2="365.2" stroke-width="0.89"/><line x1="29.3" y1="365.2" x2="27.6" y2="362.6" stroke-width="0.74"/><line x1="29.3" y1="365.2" x2="30.6" y2="362.8" stroke-width="0.74"/><line x1="56.0" y1="394.0" x2="44.4" y2="396.9" stroke-width="2.07"/><line x1="44.4" y1="396.9" x2="37.8" y2="403.1" stroke-width="1.66"/><line x1="37.8" y1="403.1" x2="36.1" y2="409.0" stroke-width="1.34"/><line x1="36.1" y1="409.0" x2="36.0" y2="413.5" stroke-width="1.09"/><line x1="36.0" y1="413.5" x2="37.4" y2="416.5" stroke-width="0.89"/><line x1="37.4" y1="416.5" x2="39.9" y2="417.5" stroke-width="0.74"/><line x1="37.4" y1="416.5" x2="36.9" y2="419.0" stroke-width="0.74"/><line x1="36.0" y1="413.5" x2="34.7" y2="416.8" stroke-width="0.89"/><line x1="34.7" y1="416.8" x2="35.4" y2="419.1" stroke-width="0.74"/><line x1="34.7" y1="416.8" x2="32.6" y2="418.4" stroke-width="0.74"/><line x1="36.1" y1="409.0" x2="32.9" y2="412.6" stroke-width="1.09"/><line x1="32.9" y1="412.6" x2="32.3" y2="416.4" stroke-width="0.89"/><line x1="32.3" y1="416.4" x2="33.5" y2="419.4" stroke-width="0.74"/><line x1="32.3" y1="416.4" x2="30.3" y2="418.1" stroke-width="0.74"/><line x1="32.9" y1="412.6" x2="29.3" y2="413.2" stroke-width="0.89"/><line x1="29.3" y1="413.2" x2="27.5" y2="414.9" stroke-width="0.74"/><line x1="29.3" y1="413.2" x2="26.7" y2="412.4" stroke-width="0.74"/><line x1="37.8" y1="403.1" x2="31.6" y2="405.3" stroke-width="1.34"/><line x1="31.6" y1="405.3" x2="27.8" y2="408.5" stroke-width="1.09"/><line x1="27.8" y1="408.5" x2="26.2" y2="412.1" stroke-width="0.89"/><line x1="26.2" y1="412.1" x2="25.7" y2="414.9" stroke-width="0.74"/><line x1="26.2" y1="412.1" x2="24.1" y2="414.2" stroke-width="0.74"/><line x1="27.8" y1="408.5" x2="24.6" y2="409.5" stroke-width="0.89"/><line x1="24.6" y1="409.5" x2="22.6" y2="410.9" stroke-width="0.74"/><line x1="24.6" y1="409.5" x2="21.9" y2="408.8" stroke-width="0.74"/><line x1="31.6" y1="405.3" x2="26.7" y2="405.0" stroke-width="1.09"/><line x1="26.7" y1="405.0" x2="23.5" y2="406.8" stroke-width="0.89"/><line x1="23.5" y1="406.8" x2="21.8" y2="408.9" stroke-width="0.74"/><line x1="23.5" y1="406.8" x2="20.6" y2="406.9" stroke-width="0.74"/><line x1="26.7" y1="405.0" x2="23.5" y2="402.4" stroke-width="0.89"/><line x1="23.5" y1="402.4" x2="20.9" y2="401.5" stroke-width="0.74"/><line x1="23.5" y1="402.4" x2="22.6" y2="399.3" stroke-width="0.74"/><line x1="44.4" y1="396.9" x2="36.0" y2="394.8" stroke-width="1.66"/><line x1="36.0" y1="394.8" x2="30.0" y2="397.0" stroke-width="1.34"/><line x1="30.0" y1="397.0" x2="27.7" y2="401.1" stroke-width="1.09"/><line x1="27.7" y1="401.1" x2="28.2" y2="404.6" stroke-width="0.89"/><line x1="28.2" y1="404.6" x2="29.9" y2="406.4" stroke-width="0.74"/><line x1="28.2" y1="404.6" x2="27.0" y2="406.7" stroke-width="0.74"/><line x1="27.7" y1="401.1" x2="24.7" y2="402.4" stroke-width="0.89"/><line x1="24.7" y1="402.4" x2="23.0" y2="404.3" stroke-width="0.74"/><line x1="24.7" y1="402.4" x2="22.1" y2="402.3" stroke-width="0.74"/><line x1="30.0" y1="397.0" x2="25.4" y2="396.1" stroke-width="1.09"/><line x1="25.4" y1="396.1" x2="22.1" y2="397.5" stroke-width="0.89"/><line x1="22.1" y1="397.5" x2="20.8" y2="399.6" stroke-width="0.74"/><line x1="22.1" y1="397.5" x2="19.5" y2="397.0" stroke-width="0.74"/><line x1="25.4" y1="396.1" x2="22.7" y2="393.9" stroke-width="0.89"/><line x1="22.7" y1="393.9" x2="20.3" y2="393.0" stroke-width="0.74"/><line x1="22.7" y1="393.9" x2="21.3" y2="391.6" stroke-width="0.74"/><line x1="36.0" y1="394.8" x2="32.2" y2="389.4" stroke-width="1.34"/><line x1="32.2" y1="389.4" x2="28.1" y2="386.6" stroke-width="1.09"/><line x1="28.1" y1="386.6" x2="24.5" y2="386.5" stroke-width="0.89"/><line x1="24.5" y1="386.5" x2="22.0" y2="387.3" stroke-width="0.74"/><line x1="24.5" y1="386.5" x2="22.0" y2="385.6" stroke-width="0.74"/><line x1="28.1" y1="386.6" x2="26.9" y2="382.9" stroke-width="0.89"/><line x1="26.9" y1="382.9" x2="25.0" y2="381.1" stroke-width="0.74"/><line x1="26.9" y1="382.9" x2="27.7" y2="380.2" stroke-width="0.74"/><line x1="32.2" y1="389.4" x2="31.3" y2="384.5" stroke-width="1.09"/><line x1="31.3" y1="384.5" x2="29.3" y2="381.3" stroke-width="0.89"/><line x1="29.3" y1="381.3" x2="26.5" y2="379.8" stroke-width="0.74"/><line x1="29.3" y1="381.3" x2="29.1" y2="378.5" stroke-width="0.74"/><line x1="31.3" y1="384.5" x2="32.1" y2="381.1" stroke-width="0.89"/><line x1="32.1" y1="381.1" x2="31.7" y2="378.8" stroke-width="0.74"/><line x1="32.1" y1="381.1" x2="34.0" y2="379.2" stroke-width="0.74"/><line x1="56.0" y1="406.0" x2="48.4" y2="413.9" stroke-width="1.90"/><line x1="48.4" y1="413.9" x2="46.5" y2="421.2" stroke-width="1.53"/><line x1="46.5" y1="421.2" x2="47.6" y2="426.8" stroke-width="1.23"/><line x1="47.6" y1="426.8" x2="49.5" y2="430.4" stroke-width="1.01"/><line x1="49.5" y1="430.4" x2="52.3" y2="431.8" stroke-width="0.83"/><line x1="52.3" y1="431.8" x2="54.6" y2="431.7" stroke-width="0.70"/><line x1="52.3" y1="431.8" x2="53.9" y2="433.4" stroke-width="0.70"/><line x1="49.5" y1="430.4" x2="49.8" y2="433.7" stroke-width="0.83"/><line x1="49.8" y1="433.7" x2="51.3" y2="435.8" stroke-width="0.70"/><line x1="49.8" y1="433.7" x2="48.5" y2="436.0" stroke-width="0.70"/><line x1="47.6" y1="426.8" x2="47.0" y2="431.4" stroke-width="1.01"/><line x1="47.0" y1="431.4" x2="47.9" y2="434.4" stroke-width="0.83"/><line x1="47.9" y1="434.4" x2="49.7" y2="435.8" stroke-width="0.70"/><line x1="47.9" y1="434.4" x2="47.2" y2="436.9" stroke-width="0.70"/><line x1="47.0" y1="431.4" x2="44.7" y2="433.8" stroke-width="0.83"/><line x1="44.7" y1="433.8" x2="44.1" y2="436.2" stroke-width="0.70"/><line x1="44.7" y1="433.8" x2="42.5" y2="435.0" stroke-width="0.70"/><line x1="46.5" y1="421.2" x2="43.1" y2="425.7" stroke-width="1.23"/><line x1="43.1" y1="425.7" x2="41.8" y2="429.7" stroke-width="1.01"/><line x1="41.8" y1="429.7" x2="42.1" y2="433.1" stroke-width="0.83"/><line x1="42.1" y1="433.1" x2="43.1" y2="435.7" stroke-width="0.70"/><line x1="42.1" y1="433.1" x2="41.3" y2="435.5" stroke-width="0.70"/><line x1="41.8" y1="429.7" x2="40.1" y2="432.2" stroke-width="0.83"/><line x1="40.1" y1="432.2" x2="40.2" y2="434.6" stroke-width="0.70"/><line x1="40.1" y1="432.2" x2="38.1" y2="432.8" stroke-width="0.70"/><line x1="43.1" y1="425.7" x2="39.6" y2="427.3" stroke-width="1.01"/><line x1="39.6" y1="427.3" x2="37.7" y2="429.8" stroke-width="0.83"/><line x1="37.7" y1="429.8" x2="37.9" y2="432.3" stroke-width="0.70"/><line x1="37.7" y1="429.8" x2="35.3" y2="430.7" stroke-width="0.70"/><line x1="39.6" y1="427.3" x2="36.7" y2="427.0" stroke-width="0.83"/><line x1="36.7" y1="427.0" x2="34.9" y2="428.0" stroke-width="0.70"/><line x1="36.7" y1="427.0" x2="35.0" y2="425.9" stroke-width="0.70"/><line x1="48.4" y1="413.9" x2="40.5" y2="416.0" stroke-width="1.53"/><line x1="40.5" y1="416.0" x2="36.1" y2="419.5" stroke-width="1.23"/><line x1="36.1" y1="419.5" x2="35.0" y2="423.2" stroke-width="1.01"/><line x1="35.0" y1="423.2" x2="35.7" y2="426.1" stroke-width="0.83"/><line x1="35.7" y1="426.1" x2="37.4" y2="427.6" stroke-width="0.70"/><line x1="35.7" y1="426.1" x2="34.8" y2="428.1" stroke-width="0.70"/><line x1="35.0" y1="423.2" x2="33.0" y2="425.4" stroke-width="0.83"/><line x1="33.0" y1="425.4" x2="32.8" y2="427.6" stroke-width="0.70"/><line x1="33.0" y1="425.4" x2="30.8" y2="426.1" stroke-width="0.70"/><line x1="36.1" y1="419.5" x2="31.9" y2="419.4" stroke-width="1.01"/><line x1="31.9" y1="419.4" x2="28.9" y2="421.1" stroke-width="0.83"/><line x1="28.9" y1="421.1" x2="27.8" y2="423.4" stroke-width="0.70"/><line x1="28.9" y1="421.1" x2="26.2" y2="421.2" stroke-width="0.70"/><line x1="31.9" y1="419.4" x2="29.2" y2="417.5" stroke-width="0.83"/><line x1="29.2" y1="417.5" x2="26.9" y2="416.7" stroke-width="0.70"/><line x1="29.2" y1="417.5" x2="27.8" y2="415.2" stroke-width="0.70"/><line x1="40.5" y1="416.0" x2="34.1" y2="414.8" stroke-width="1.23"/><line x1="34.1" y1="414.8" x2="30.0" y2="416.8" stroke-width="1.01"/><line x1="30.0" y1="416.8" x2="27.6" y2="419.1" stroke-width="0.83"/><line x1="27.6" y1="419.1" x2="27.0" y2="421.4" stroke-width="0.70"/><line x1="27.6" y1="419.1" x2="25.4" y2="419.7" stroke-width="0.70"/><line x1="30.0" y1="416.8" x2="26.4" y2="417.1" stroke-width="0.83"/><line x1="26.4" y1="417.1" x2="24.3" y2="418.6" stroke-width="0.70"/><line x1="26.4" y1="417.1" x2="24.1" y2="415.7" stroke-width="0.70"/><line x1="34.1" y1="414.8" x2="30.0" y2="411.4" stroke-width="1.01"/><line x1="30.0" y1="411.4" x2="26.3" y2="409.8" stroke-width="0.83"/><line x1="26.3" y1="409.8" x2="23.5" y2="409.3" stroke-width="0.70"/><line x1="26.3" y1="409.8" x2="23.8" y2="407.8" stroke-width="0.70"/><line x1="30.0" y1="411.4" x2="28.4" y2="407.6" stroke-width="0.83"/><line x1="28.4" y1="407.6" x2="25.7" y2="406.0" stroke-width="0.70"/><line x1="28.4" y1="407.6" x2="28.9" y2="404.6" stroke-width="0.70"/><line x1="56.0" y1="416.0" x2="49.3" y2="420.4" stroke-width="1.73"/><line x1="49.3" y1="420.4" x2="47.3" y2="425.9" stroke-width="1.39"/><line x1="47.3" y1="425.9" x2="47.5" y2="430.5" stroke-width="1.13"/><line x1="47.5" y1="430.5" x2="49.5" y2="433.8" stroke-width="0.93"/><line x1="49.5" y1="433.8" x2="51.7" y2="435.1" stroke-width="0.77"/><line x1="49.5" y1="433.8" x2="49.0" y2="436.4" stroke-width="0.77"/><line x1="47.5" y1="430.5" x2="45.3" y2="432.9" stroke-width="0.93"/><line x1="45.3" y1="432.9" x2="44.2" y2="435.1" stroke-width="0.77"/><line x1="45.3" y1="432.9" x2="43.2" y2="434.3" stroke-width="0.77"/><line x1="47.3" y1="425.9" x2="44.5" y2="429.4" stroke-width="1.13"/><line x1="44.5" y1="429.4" x2="43.7" y2="432.8" stroke-width="0.93"/><line x1="43.7" y1="432.8" x2="44.0" y2="435.3" stroke-width="0.77"/><line x1="43.7" y1="432.8" x2="41.9" y2="434.8" stroke-width="0.77"/><line x1="44.5" y1="429.4" x2="41.4" y2="431.4" stroke-width="0.93"/><line x1="41.4" y1="431.4" x2="40.1" y2="433.7" stroke-width="0.77"/><line x1="41.4" y1="431.4" x2="38.7" y2="432.2" stroke-width="0.77"/><line x1="49.3" y1="420.4" x2="42.9" y2="421.2" stroke-width="1.39"/><line x1="42.9" y1="421.2" x2="39.8" y2="424.4" stroke-width="1.13"/><line x1="39.8" y1="424.4" x2="38.9" y2="427.5" stroke-width="0.93"/><line x1="38.9" y1="427.5" x2="39.7" y2="429.8" stroke-width="0.77"/><line x1="38.9" y1="427.5" x2="37.0" y2="429.1" stroke-width="0.77"/><line x1="39.8" y1="424.4" x2="36.1" y2="424.6" stroke-width="0.93"/><line x1="36.1" y1="424.6" x2="33.7" y2="425.6" stroke-width="0.77"/><line x1="36.1" y1="424.6" x2="33.6" y2="423.3" stroke-width="0.77"/><line x1="42.9" y1="421.2" x2="39.4" y2="418.4" stroke-width="1.13"/><line x1="39.4" y1="418.4" x2="36.4" y2="417.8" stroke-width="0.93"/><line x1="36.4" y1="417.8" x2="34.4" y2="418.4" stroke-width="0.77"/><line x1="36.4" y1="417.8" x2="34.9" y2="416.2" stroke-width="0.77"/><line x1="39.4" y1="418.4" x2="37.9" y2="415.7" stroke-width="0.93"/><line x1="37.9" y1="415.7" x2="36.1" y2="414.3" stroke-width="0.77"/><line x1="37.9" y1="415.7" x2="37.8" y2="413.4" stroke-width="0.77"/><line x1="54.0" y1="404.0" x2="55.2" y2="413.9" stroke-width="2.07"/><line x1="55.2" y1="413.9" x2="59.1" y2="419.8" stroke-width="1.66"/><line x1="59.1" y1="419.8" x2="63.6" y2="421.3" stroke-width="1.34"/><line x1="59.1" y1="419.8" x2="59.6" y2="424.6" stroke-width="1.34"/><line x1="59.6" y1="424.6" x2="60.7" y2="425.9" stroke-width="1.09"/><line x1="60.7" y1="425.9" x2="60.8" y2="426.5" stroke-width="0.89"/><line x1="59.6" y1="424.6" x2="58.5" y2="427.9" stroke-width="1.09"/><line x1="58.5" y1="427.9" x2="59.1" y2="429.2" stroke-width="0.89"/><line x1="58.5" y1="427.9" x2="56.6" y2="429.5" stroke-width="0.89"/><line x1="55.2" y1="413.9" x2="53.9" y2="420.8" stroke-width="1.66"/><line x1="53.9" y1="420.8" x2="56.1" y2="425.6" stroke-width="1.34"/><line x1="56.1" y1="425.6" x2="58.9" y2="428.3" stroke-width="1.09"/><line x1="56.1" y1="425.6" x2="55.6" y2="429.4" stroke-width="1.09"/><line x1="55.6" y1="429.4" x2="56.4" y2="432.3" stroke-width="0.89"/><line x1="55.6" y1="429.4" x2="54.1" y2="431.8" stroke-width="0.89"/><line x1="53.9" y1="420.8" x2="50.5" y2="424.7" stroke-width="1.34"/><line x1="50.5" y1="424.7" x2="50.2" y2="428.6" stroke-width="1.09"/><line x1="50.2" y1="428.6" x2="50.9" y2="431.5" stroke-width="0.89"/><line x1="50.2" y1="428.6" x2="48.2" y2="431.1" stroke-width="0.89"/><line x1="50.5" y1="424.7" x2="46.5" y2="426.0" stroke-width="1.09"/><line x1="46.5" y1="426.0" x2="44.3" y2="428.5" stroke-width="0.89"/><line x1="46.5" y1="426.0" x2="43.2" y2="425.2" stroke-width="0.89"/><line x1="54.0" y1="404.0" x2="59.8" y2="412.1" stroke-width="1.90"/><line x1="59.8" y1="412.1" x2="66.6" y2="414.1" stroke-width="1.53"/><line x1="59.8" y1="412.1" x2="59.5" y2="419.0" stroke-width="1.53"/><line x1="59.5" y1="419.0" x2="61.9" y2="423.8" stroke-width="1.23"/><line x1="59.5" y1="419.0" x2="56.5" y2="423.0" stroke-width="1.23"/><line x1="56.5" y1="423.0" x2="55.8" y2="427.0" stroke-width="1.01"/><line x1="56.5" y1="423.0" x2="53.6" y2="425.2" stroke-width="1.01"/><line x1="62.0" y1="366.0" x2="66.9" y2="370.9" stroke-width="1.39"/><line x1="66.9" y1="370.9" x2="71.8" y2="372.3" stroke-width="1.13"/><line x1="71.8" y1="372.3" x2="73.7" y2="371.7" stroke-width="0.92"/><line x1="71.8" y1="372.3" x2="73.2" y2="373.8" stroke-width="0.92"/><line x1="73.2" y1="373.8" x2="73.7" y2="375.1" stroke-width="0.76"/><line x1="66.9" y1="370.9" x2="68.0" y2="376.1" stroke-width="1.13"/><line x1="68.0" y1="376.1" x2="70.8" y2="378.9" stroke-width="0.92"/><line x1="70.8" y1="378.9" x2="73.6" y2="379.5" stroke-width="0.76"/><line x1="70.8" y1="378.9" x2="71.7" y2="381.7" stroke-width="0.76"/><line x1="68.0" y1="376.1" x2="66.4" y2="379.5" stroke-width="0.92"/><line x1="66.4" y1="379.5" x2="67.1" y2="382.0" stroke-width="0.76"/><line x1="66.4" y1="379.5" x2="63.8" y2="380.8" stroke-width="0.76"/><line x1="111.0" y1="345.0" x2="120.8" y2="343.0" stroke-width="1.90"/><line x1="120.8" y1="343.0" x2="126.0" y2="338.5" stroke-width="1.53"/><line x1="126.0" y1="338.5" x2="128.1" y2="333.6" stroke-width="1.23"/><line x1="128.1" y1="333.6" x2="127.4" y2="329.7" stroke-width="1.01"/><line x1="127.4" y1="329.7" x2="125.7" y2="327.4" stroke-width="0.83"/><line x1="125.7" y1="327.4" x2="123.7" y2="326.4" stroke-width="0.70"/><line x1="125.7" y1="327.4" x2="125.3" y2="325.4" stroke-width="0.70"/><line x1="127.4" y1="329.7" x2="128.4" y2="326.9" stroke-width="0.83"/><line x1="128.4" y1="326.9" x2="128.5" y2="324.8" stroke-width="0.70"/><line x1="128.4" y1="326.9" x2="130.1" y2="325.1" stroke-width="0.70"/><line x1="128.1" y1="333.6" x2="131.2" y2="331.1" stroke-width="1.01"/><line x1="131.2" y1="331.1" x2="132.5" y2="328.5" stroke-width="0.83"/><line x1="132.5" y1="328.5" x2="132.7" y2="326.3" stroke-width="0.70"/><line x1="132.5" y1="328.5" x2="134.5" y2="327.3" stroke-width="0.70"/><line x1="131.2" y1="331.1" x2="134.2" y2="330.7" stroke-width="0.83"/><line x1="134.2" y1="330.7" x2="136.1" y2="329.2" stroke-width="0.70"/><line x1="134.2" y1="330.7" x2="136.1" y2="331.7" stroke-width="0.70"/><line x1="126.0" y1="338.5" x2="131.2" y2="336.4" stroke-width="1.23"/><line x1="131.2" y1="336.4" x2="134.3" y2="334.1" stroke-width="1.01"/><line x1="134.3" y1="334.1" x2="135.7" y2="331.3" stroke-width="0.83"/><line x1="135.7" y1="331.3" x2="135.8" y2="328.9" stroke-width="0.70"/><line x1="135.7" y1="331.3" x2="137.6" y2="330.0" stroke-width="0.70"/><line x1="134.3" y1="334.1" x2="137.1" y2="334.1" stroke-width="0.83"/><line x1="137.1" y1="334.1" x2="138.9" y2="333.0" stroke-width="0.70"/><line x1="137.1" y1="334.1" x2="138.8" y2="335.2" stroke-width="0.70"/><line x1="131.2" y1="336.4" x2="135.8" y2="336.7" stroke-width="1.01"/><line x1="135.8" y1="336.7" x2="138.8" y2="335.7" stroke-width="0.83"/><line x1="138.8" y1="335.7" x2="140.7" y2="334.1" stroke-width="0.70"/><line x1="138.8" y1="335.7" x2="141.1" y2="335.6" stroke-width="0.70"/><line x1="135.8" y1="336.7" x2="138.7" y2="338.0" stroke-width="0.83"/><line x1="138.7" y1="338.0" x2="141.3" y2="337.9" stroke-width="0.70"/><line x1="138.7" y1="338.0" x2="140.3" y2="340.1" stroke-width="0.70"/><line x1="120.8" y1="343.0" x2="127.8" y2="345.6" stroke-width="1.53"/><line x1="127.8" y1="345.6" x2="133.7" y2="345.0" stroke-width="1.23"/><line x1="133.7" y1="345.0" x2="137.7" y2="342.3" stroke-width="1.01"/><line x1="137.7" y1="342.3" x2="139.4" y2="339.0" stroke-width="0.83"/><line x1="139.4" y1="339.0" x2="140.0" y2="336.3" stroke-width="0.70"/><line x1="139.4" y1="339.0" x2="141.3" y2="337.0" stroke-width="0.70"/><line x1="137.7" y1="342.3" x2="141.1" y2="341.5" stroke-width="0.83"/><line x1="141.1" y1="341.5" x2="142.7" y2="339.4" stroke-width="0.70"/><line x1="141.1" y1="341.5" x2="143.5" y2="342.1" stroke-width="0.70"/><line x1="133.7" y1="345.0" x2="138.1" y2="346.2" stroke-width="1.01"/><line x1="138.1" y1="346.2" x2="141.6" y2="345.5" stroke-width="0.83"/><line x1="141.6" y1="345.5" x2="143.5" y2="343.6" stroke-width="0.70"/><line x1="141.6" y1="345.5" x2="144.1" y2="346.3" stroke-width="0.70"/><line x1="138.1" y1="346.2" x2="140.6" y2="348.6" stroke-width="0.83"/><line x1="140.6" y1="348.6" x2="143.3" y2="349.2" stroke-width="0.70"/><line x1="140.6" y1="348.6" x2="141.4" y2="351.0" stroke-width="0.70"/><line x1="127.8" y1="345.6" x2="131.0" y2="349.8" stroke-width="1.23"/><line x1="131.0" y1="349.8" x2="134.2" y2="351.6" stroke-width="1.01"/><line x1="134.2" y1="351.6" x2="136.8" y2="351.4" stroke-width="0.83"/><line x1="136.8" y1="351.4" x2="138.8" y2="350.7" stroke-width="0.70"/><line x1="136.8" y1="351.4" x2="138.8" y2="352.2" stroke-width="0.70"/><line x1="134.2" y1="351.6" x2="135.1" y2="354.2" stroke-width="0.83"/><line x1="135.1" y1="354.2" x2="136.9" y2="355.5" stroke-width="0.70"/><line x1="135.1" y1="354.2" x2="135.0" y2="356.2" stroke-width="0.70"/><line x1="131.0" y1="349.8" x2="131.9" y2="353.8" stroke-width="1.01"/><line x1="131.9" y1="353.8" x2="134.2" y2="355.8" stroke-width="0.83"/><line x1="134.2" y1="355.8" x2="136.3" y2="356.1" stroke-width="0.70"/><line x1="134.2" y1="355.8" x2="134.9" y2="357.8" stroke-width="0.70"/><line x1="131.9" y1="353.8" x2="130.6" y2="356.6" stroke-width="0.83"/><line x1="130.6" y1="356.6" x2="130.4" y2="358.8" stroke-width="0.70"/><line x1="130.6" y1="356.6" x2="128.9" y2="357.9" stroke-width="0.70"/><line x1="117.0" y1="336.0" x2="124.9" y2="329.9" stroke-width="1.90"/><line x1="124.9" y1="329.9" x2="127.9" y2="322.5" stroke-width="1.53"/><line x1="127.9" y1="322.5" x2="128.1" y2="316.4" stroke-width="1.23"/><line x1="128.1" y1="316.4" x2="125.0" y2="313.0" stroke-width="1.01"/><line x1="125.0" y1="313.0" x2="122.0" y2="311.5" stroke-width="0.83"/><line x1="122.0" y1="311.5" x2="119.6" y2="312.0" stroke-width="0.70"/><line x1="122.0" y1="311.5" x2="120.5" y2="309.7" stroke-width="0.70"/><line x1="125.0" y1="313.0" x2="124.2" y2="309.5" stroke-width="0.83"/><line x1="124.2" y1="309.5" x2="122.6" y2="307.4" stroke-width="0.70"/><line x1="124.2" y1="309.5" x2="124.5" y2="306.6" stroke-width="0.70"/><line x1="128.1" y1="316.4" x2="130.5" y2="312.5" stroke-width="1.01"/><line x1="130.5" y1="312.5" x2="131.0" y2="309.1" stroke-width="0.83"/><line x1="131.0" y1="309.1" x2="130.0" y2="306.6" stroke-width="0.70"/><line x1="131.0" y1="309.1" x2="132.7" y2="307.0" stroke-width="0.70"/><line x1="130.5" y1="312.5" x2="133.1" y2="310.7" stroke-width="0.83"/><line x1="133.1" y1="310.7" x2="134.3" y2="308.4" stroke-width="0.70"/><line x1="133.1" y1="310.7" x2="135.3" y2="310.4" stroke-width="0.70"/><line x1="127.9" y1="322.5" x2="132.1" y2="318.8" stroke-width="1.23"/><line x1="132.1" y1="318.8" x2="133.9" y2="315.1" stroke-width="1.01"/><line x1="133.9" y1="315.1" x2="134.1" y2="312.0" stroke-width="0.83"/><line x1="134.1" y1="312.0" x2="133.3" y2="310.0" stroke-width="0.70"/><line x1="134.1" y1="312.0" x2="135.3" y2="310.1" stroke-width="0.70"/><line x1="133.9" y1="315.1" x2="136.2" y2="312.8" stroke-width="0.83"/><line x1="136.2" y1="312.8" x2="136.3" y2="310.6" stroke-width="0.70"/><line x1="136.2" y1="312.8" x2="138.5" y2="312.3" stroke-width="0.70"/><line x1="132.1" y1="318.8" x2="136.1" y2="317.9" stroke-width="1.01"/><line x1="136.1" y1="317.9" x2="138.8" y2="316.0" stroke-width="0.83"/><line x1="138.8" y1="316.0" x2="140.2" y2="313.6" stroke-width="0.70"/><line x1="138.8" y1="316.0" x2="141.1" y2="315.8" stroke-width="0.70"/><line x1="136.1" y1="317.9" x2="138.8" y2="318.8" stroke-width="0.83"/><line x1="138.8" y1="318.8" x2="141.2" y2="318.7" stroke-width="0.70"/><line x1="138.8" y1="318.8" x2="140.4" y2="320.3" stroke-width="0.70"/><line x1="124.9" y1="329.9" x2="132.8" y2="327.6" stroke-width="1.53"/><line x1="132.8" y1="327.6" x2="136.5" y2="322.4" stroke-width="1.23"/><line x1="136.5" y1="322.4" x2="137.4" y2="317.5" stroke-width="1.01"/><line x1="137.4" y1="317.5" x2="136.4" y2="313.9" stroke-width="0.83"/><line x1="136.4" y1="313.9" x2="134.5" y2="312.0" stroke-width="0.70"/><line x1="136.4" y1="313.9" x2="137.1" y2="311.4" stroke-width="0.70"/><line x1="137.4" y1="317.5" x2="140.3" y2="315.0" stroke-width="0.83"/><line x1="140.3" y1="315.0" x2="141.4" y2="312.7" stroke-width="0.70"/><line x1="140.3" y1="315.0" x2="143.3" y2="314.6" stroke-width="0.70"/><line x1="136.5" y1="322.4" x2="140.0" y2="319.6" stroke-width="1.01"/><line x1="140.0" y1="319.6" x2="141.6" y2="316.9" stroke-width="0.83"/><line x1="141.6" y1="316.9" x2="141.8" y2="314.6" stroke-width="0.70"/><line x1="141.6" y1="316.9" x2="143.8" y2="315.7" stroke-width="0.70"/><line x1="140.0" y1="319.6" x2="142.9" y2="318.6" stroke-width="0.83"/><line x1="142.9" y1="318.6" x2="144.4" y2="316.8" stroke-width="0.70"/><line x1="142.9" y1="318.6" x2="145.3" y2="319.2" stroke-width="0.70"/><line x1="132.8" y1="327.6" x2="139.2" y2="329.1" stroke-width="1.23"/><line x1="139.2" y1="329.1" x2="143.9" y2="327.6" stroke-width="1.01"/><line x1="143.9" y1="327.6" x2="146.7" y2="325.7" stroke-width="0.83"/><line x1="146.7" y1="325.7" x2="147.7" y2="323.2" stroke-width="0.70"/><line x1="146.7" y1="325.7" x2="149.2" y2="325.3" stroke-width="0.70"/><line x1="143.9" y1="327.6" x2="147.4" y2="328.2" stroke-width="0.83"/><line x1="147.4" y1="328.2" x2="150.0" y2="327.8" stroke-width="0.70"/><line x1="147.4" y1="328.2" x2="149.9" y2="329.3" stroke-width="0.70"/><line x1="139.2" y1="329.1" x2="142.8" y2="332.5" stroke-width="1.01"/><line x1="142.8" y1="332.5" x2="146.2" y2="333.3" stroke-width="0.83"/><line x1="146.2" y1="333.3" x2="148.8" y2="333.1" stroke-width="0.70"/><line x1="146.2" y1="333.3" x2="148.3" y2="335.2" stroke-width="0.70"/><line x1="142.8" y1="332.5" x2="143.9" y2="336.0" stroke-width="0.83"/><line x1="143.9" y1="336.0" x2="145.9" y2="338.3" stroke-width="0.70"/><line x1="143.9" y1="336.0" x2="143.5" y2="338.9" stroke-width="0.70"/><line x1="120.0" y1="328.0" x2="116.0" y2="320.0" stroke-width="1.73"/><line x1="116.0" y1="320.0" x2="110.7" y2="316.4" stroke-width="1.39"/><line x1="110.7" y1="316.4" x2="105.9" y2="316.4" stroke-width="1.13"/><line x1="110.7" y1="316.4" x2="108.5" y2="312.0" stroke-width="1.13"/><line x1="116.0" y1="320.0" x2="116.4" y2="313.3" stroke-width="1.39"/><line x1="116.4" y1="313.3" x2="114.0" y2="309.1" stroke-width="1.13"/><line x1="114.0" y1="309.1" x2="112.5" y2="308.0" stroke-width="0.93"/><line x1="112.5" y1="308.0" x2="111.8" y2="307.8" stroke-width="0.77"/><line x1="112.5" y1="308.0" x2="112.2" y2="307.5" stroke-width="0.77"/><line x1="114.0" y1="309.1" x2="113.6" y2="307.2" stroke-width="0.93"/><line x1="113.6" y1="307.2" x2="112.6" y2="306.4" stroke-width="0.77"/><line x1="113.6" y1="307.2" x2="114.1" y2="306.0" stroke-width="0.77"/><line x1="116.4" y1="313.3" x2="119.5" y2="309.6" stroke-width="1.13"/><line x1="119.5" y1="309.6" x2="120.1" y2="306.4" stroke-width="0.93"/><line x1="120.1" y1="306.4" x2="119.2" y2="304.3" stroke-width="0.77"/><line x1="120.1" y1="306.4" x2="121.9" y2="304.3" stroke-width="0.77"/><line x1="119.5" y1="309.6" x2="122.6" y2="308.4" stroke-width="0.93"/><line x1="122.6" y1="308.4" x2="123.8" y2="306.5" stroke-width="0.77"/><line x1="122.6" y1="308.4" x2="125.1" y2="309.2" stroke-width="0.77"/><line x1="127.0" y1="308.0" x2="130.0" y2="300.6" stroke-width="1.73"/><line x1="127.0" y1="308.0" x2="124.0" y2="300.6" stroke-width="1.73"/><line x1="106.0" y1="352.0" x2="113.0" y2="351.3" stroke-width="1.56"/><line x1="113.0" y1="351.3" x2="117.8" y2="348.2" stroke-width="1.26"/><line x1="117.8" y1="348.2" x2="120.0" y2="344.6" stroke-width="1.03"/><line x1="120.0" y1="344.6" x2="119.8" y2="341.3" stroke-width="0.85"/><line x1="119.8" y1="341.3" x2="118.8" y2="338.8" stroke-width="0.70"/><line x1="119.8" y1="341.3" x2="120.7" y2="338.8" stroke-width="0.70"/><line x1="120.0" y1="344.6" x2="122.6" y2="343.1" stroke-width="0.85"/><line x1="122.6" y1="343.1" x2="123.4" y2="341.1" stroke-width="0.70"/><line x1="122.6" y1="343.1" x2="124.8" y2="343.4" stroke-width="0.70"/><line x1="117.8" y1="348.2" x2="122.4" y2="348.1" stroke-width="1.03"/><line x1="122.4" y1="348.1" x2="125.2" y2="346.4" stroke-width="0.85"/><line x1="125.2" y1="346.4" x2="126.9" y2="344.4" stroke-width="0.70"/><line x1="125.2" y1="346.4" x2="127.7" y2="346.2" stroke-width="0.70"/><line x1="122.4" y1="348.1" x2="125.7" y2="349.7" stroke-width="0.85"/><line x1="125.7" y1="349.7" x2="128.2" y2="349.7" stroke-width="0.70"/><line x1="125.7" y1="349.7" x2="127.6" y2="351.9" stroke-width="0.70"/><line x1="113.0" y1="351.3" x2="118.2" y2="352.1" stroke-width="1.26"/><line x1="118.2" y1="352.1" x2="121.6" y2="350.4" stroke-width="1.03"/><line x1="121.6" y1="350.4" x2="123.2" y2="347.9" stroke-width="0.85"/><line x1="123.2" y1="347.9" x2="123.6" y2="345.6" stroke-width="0.70"/><line x1="123.2" y1="347.9" x2="124.9" y2="346.6" stroke-width="0.70"/><line x1="121.6" y1="350.4" x2="124.4" y2="350.5" stroke-width="0.85"/><line x1="124.4" y1="350.5" x2="126.2" y2="349.5" stroke-width="0.70"/><line x1="124.4" y1="350.5" x2="126.3" y2="351.8" stroke-width="0.70"/><line x1="118.2" y1="352.1" x2="121.4" y2="354.4" stroke-width="1.03"/><line x1="121.4" y1="354.4" x2="124.4" y2="354.9" stroke-width="0.85"/><line x1="124.4" y1="354.9" x2="126.5" y2="354.3" stroke-width="0.70"/><line x1="124.4" y1="354.9" x2="126.4" y2="356.1" stroke-width="0.70"/><line x1="121.4" y1="354.4" x2="122.6" y2="356.9" stroke-width="0.85"/><line x1="122.6" y1="356.9" x2="124.3" y2="358.0" stroke-width="0.70"/><line x1="122.6" y1="356.9" x2="122.5" y2="358.8" stroke-width="0.70"/><line x1="106.0" y1="366.0" x2="117.6" y2="363.1" stroke-width="2.07"/><line x1="117.6" y1="363.1" x2="125.4" y2="358.4" stroke-width="1.66"/><line x1="125.4" y1="358.4" x2="128.8" y2="352.1" stroke-width="1.34"/><line x1="128.8" y1="352.1" x2="129.2" y2="346.4" stroke-width="1.09"/><line x1="129.2" y1="346.4" x2="127.2" y2="342.5" stroke-width="0.89"/><line x1="127.2" y1="342.5" x2="124.4" y2="340.6" stroke-width="0.74"/><line x1="127.2" y1="342.5" x2="127.3" y2="339.1" stroke-width="0.74"/><line x1="129.2" y1="346.4" x2="131.6" y2="342.8" stroke-width="0.89"/><line x1="131.6" y1="342.8" x2="132.5" y2="339.7" stroke-width="0.74"/><line x1="131.6" y1="342.8" x2="134.6" y2="341.1" stroke-width="0.74"/><line x1="128.8" y1="352.1" x2="133.1" y2="348.3" stroke-width="1.09"/><line x1="133.1" y1="348.3" x2="134.0" y2="344.1" stroke-width="0.89"/><line x1="134.0" y1="344.1" x2="132.8" y2="340.8" stroke-width="0.74"/><line x1="134.0" y1="344.1" x2="135.7" y2="341.4" stroke-width="0.74"/><line x1="133.1" y1="348.3" x2="137.8" y2="347.9" stroke-width="0.89"/><line x1="137.8" y1="347.9" x2="140.2" y2="345.6" stroke-width="0.74"/><line x1="137.8" y1="347.9" x2="140.7" y2="349.4" stroke-width="0.74"/><line x1="125.4" y1="358.4" x2="131.9" y2="357.6" stroke-width="1.34"/><line x1="131.9" y1="357.6" x2="135.8" y2="355.1" stroke-width="1.09"/><line x1="135.8" y1="355.1" x2="138.3" y2="352.3" stroke-width="0.89"/><line x1="138.3" y1="352.3" x2="138.8" y2="349.3" stroke-width="0.74"/><line x1="138.3" y1="352.3" x2="141.1" y2="351.3" stroke-width="0.74"/><line x1="135.8" y1="355.1" x2="139.5" y2="354.8" stroke-width="0.89"/><line x1="139.5" y1="354.8" x2="142.0" y2="353.2" stroke-width="0.74"/><line x1="139.5" y1="354.8" x2="141.9" y2="355.8" stroke-width="0.74"/><line x1="131.9" y1="357.6" x2="136.3" y2="360.1" stroke-width="1.09"/><line x1="136.3" y1="360.1" x2="140.1" y2="359.8" stroke-width="0.89"/><line x1="140.1" y1="359.8" x2="143.0" y2="358.8" stroke-width="0.74"/><line x1="140.1" y1="359.8" x2="142.7" y2="360.6" stroke-width="0.74"/><line x1="136.3" y1="360.1" x2="138.2" y2="363.5" stroke-width="0.89"/><line x1="138.2" y1="363.5" x2="140.6" y2="364.7" stroke-width="0.74"/><line x1="138.2" y1="363.5" x2="138.0" y2="366.2" stroke-width="0.74"/><line x1="117.6" y1="363.1" x2="127.0" y2="364.7" stroke-width="1.66"/><line x1="127.0" y1="364.7" x2="134.3" y2="361.8" stroke-width="1.34"/><line x1="134.3" y1="361.8" x2="137.4" y2="356.8" stroke-width="1.09"/><line x1="137.4" y1="356.8" x2="138.0" y2="352.2" stroke-width="0.89"/><line x1="138.0" y1="352.2" x2="136.3" y2="349.0" stroke-width="0.74"/><line x1="138.0" y1="352.2" x2="140.3" y2="349.7" stroke-width="0.74"/><line x1="137.4" y1="356.8" x2="141.6" y2="355.4" stroke-width="0.89"/><line x1="141.6" y1="355.4" x2="143.9" y2="353.4" stroke-width="0.74"/><line x1="141.6" y1="355.4" x2="144.7" y2="356.0" stroke-width="0.74"/><line x1="134.3" y1="361.8" x2="140.5" y2="362.1" stroke-width="1.09"/><line x1="140.5" y1="362.1" x2="144.9" y2="360.3" stroke-width="0.89"/><line x1="144.9" y1="360.3" x2="147.2" y2="358.0" stroke-width="0.74"/><line x1="144.9" y1="360.3" x2="148.7" y2="360.6" stroke-width="0.74"/><line x1="140.5" y1="362.1" x2="144.5" y2="365.1" stroke-width="0.89"/><line x1="144.5" y1="365.1" x2="148.2" y2="366.0" stroke-width="0.74"/><line x1="144.5" y1="365.1" x2="145.9" y2="368.4" stroke-width="0.74"/><line x1="127.0" y1="364.7" x2="131.6" y2="369.8" stroke-width="1.34"/><line x1="131.6" y1="369.8" x2="136.8" y2="372.0" stroke-width="1.09"/><line x1="136.8" y1="372.0" x2="140.9" y2="371.7" stroke-width="0.89"/><line x1="140.9" y1="371.7" x2="143.0" y2="369.5" stroke-width="0.74"/><line x1="140.9" y1="371.7" x2="143.2" y2="373.1" stroke-width="0.74"/><line x1="136.8" y1="372.0" x2="138.9" y2="375.3" stroke-width="0.89"/><line x1="138.9" y1="375.3" x2="141.6" y2="376.2" stroke-width="0.74"/><line x1="138.9" y1="375.3" x2="139.0" y2="378.4" stroke-width="0.74"/><line x1="131.6" y1="369.8" x2="132.0" y2="374.8" stroke-width="1.09"/><line x1="132.0" y1="374.8" x2="134.2" y2="377.6" stroke-width="0.89"/><line x1="134.2" y1="377.6" x2="136.4" y2="379.3" stroke-width="0.74"/><line x1="134.2" y1="377.6" x2="135.1" y2="380.2" stroke-width="0.74"/><line x1="132.0" y1="374.8" x2="130.6" y2="378.3" stroke-width="0.89"/><line x1="130.6" y1="378.3" x2="131.0" y2="381.4" stroke-width="0.74"/><line x1="130.6" y1="378.3" x2="128.3" y2="380.2" stroke-width="0.74"/><line x1="107.0" y1="380.0" x2="118.9" y2="378.8" stroke-width="2.07"/><line x1="118.9" y1="378.8" x2="125.1" y2="373.1" stroke-width="1.66"/><line x1="125.1" y1="373.1" x2="127.2" y2="366.6" stroke-width="1.34"/><line x1="127.2" y1="366.6" x2="125.6" y2="361.9" stroke-width="1.09"/><line x1="125.6" y1="361.9" x2="122.4" y2="360.2" stroke-width="0.89"/><line x1="122.4" y1="360.2" x2="119.8" y2="359.6" stroke-width="0.74"/><line x1="122.4" y1="360.2" x2="120.8" y2="358.3" stroke-width="0.74"/><line x1="125.6" y1="361.9" x2="126.9" y2="358.6" stroke-width="0.89"/><line x1="126.9" y1="358.6" x2="126.9" y2="356.2" stroke-width="0.74"/><line x1="126.9" y1="358.6" x2="128.7" y2="356.8" stroke-width="0.74"/><line x1="127.2" y1="366.6" x2="130.6" y2="363.3" stroke-width="1.09"/><line x1="130.6" y1="363.3" x2="132.5" y2="360.1" stroke-width="0.89"/><line x1="132.5" y1="360.1" x2="132.2" y2="357.1" stroke-width="0.74"/><line x1="132.5" y1="360.1" x2="134.7" y2="358.8" stroke-width="0.74"/><line x1="130.6" y1="363.3" x2="133.5" y2="361.8" stroke-width="0.89"/><line x1="133.5" y1="361.8" x2="134.9" y2="359.6" stroke-width="0.74"/><line x1="133.5" y1="361.8" x2="136.1" y2="361.5" stroke-width="0.74"/><line x1="125.1" y1="373.1" x2="131.8" y2="373.1" stroke-width="1.34"/><line x1="131.8" y1="373.1" x2="135.9" y2="371.0" stroke-width="1.09"/><line x1="135.9" y1="371.0" x2="137.8" y2="367.7" stroke-width="0.89"/><line x1="137.8" y1="367.7" x2="137.9" y2="364.7" stroke-width="0.74"/><line x1="137.8" y1="367.7" x2="139.9" y2="366.3" stroke-width="0.74"/><line x1="135.9" y1="371.0" x2="139.3" y2="370.9" stroke-width="0.89"/><line x1="139.3" y1="370.9" x2="141.8" y2="369.8" stroke-width="0.74"/><line x1="139.3" y1="370.9" x2="141.7" y2="372.0" stroke-width="0.74"/><line x1="131.8" y1="373.1" x2="136.6" y2="374.4" stroke-width="1.09"/><line x1="136.6" y1="374.4" x2="140.3" y2="374.4" stroke-width="0.89"/><line x1="140.3" y1="374.4" x2="142.5" y2="372.9" stroke-width="0.74"/><line x1="140.3" y1="374.4" x2="142.7" y2="375.6" stroke-width="0.74"/><line x1="136.6" y1="374.4" x2="139.8" y2="376.4" stroke-width="0.89"/><line x1="139.8" y1="376.4" x2="142.4" y2="376.9" stroke-width="0.74"/><line x1="139.8" y1="376.4" x2="141.3" y2="378.4" stroke-width="0.74"/><line x1="118.9" y1="378.8" x2="127.4" y2="382.4" stroke-width="1.66"/><line x1="127.4" y1="382.4" x2="134.0" y2="382.7" stroke-width="1.34"/><line x1="134.0" y1="382.7" x2="138.6" y2="380.1" stroke-width="1.09"/><line x1="138.6" y1="380.1" x2="141.3" y2="377.1" stroke-width="0.89"/><line x1="141.3" y1="377.1" x2="142.3" y2="374.4" stroke-width="0.74"/><line x1="141.3" y1="377.1" x2="144.0" y2="376.2" stroke-width="0.74"/><line x1="138.6" y1="380.1" x2="142.9" y2="380.3" stroke-width="0.89"/><line x1="142.9" y1="380.3" x2="146.0" y2="379.1" stroke-width="0.74"/><line x1="142.9" y1="380.3" x2="145.7" y2="382.3" stroke-width="0.74"/><line x1="134.0" y1="382.7" x2="137.6" y2="386.1" stroke-width="1.09"/><line x1="137.6" y1="386.1" x2="141.2" y2="387.2" stroke-width="0.89"/><line x1="141.2" y1="387.2" x2="143.9" y2="386.5" stroke-width="0.74"/><line x1="141.2" y1="387.2" x2="143.2" y2="389.2" stroke-width="0.74"/><line x1="137.6" y1="386.1" x2="138.9" y2="389.4" stroke-width="0.89"/><line x1="138.9" y1="389.4" x2="140.8" y2="391.0" stroke-width="0.74"/><line x1="138.9" y1="389.4" x2="138.9" y2="392.2" stroke-width="0.74"/><line x1="127.4" y1="382.4" x2="132.2" y2="388.1" stroke-width="1.34"/><line x1="132.2" y1="388.1" x2="137.8" y2="390.1" stroke-width="1.09"/><line x1="137.8" y1="390.1" x2="142.1" y2="389.5" stroke-width="0.89"/><line x1="142.1" y1="389.5" x2="144.6" y2="387.7" stroke-width="0.74"/><line x1="142.1" y1="389.5" x2="144.9" y2="390.7" stroke-width="0.74"/><line x1="137.8" y1="390.1" x2="141.1" y2="393.3" stroke-width="0.89"/><line x1="141.1" y1="393.3" x2="144.5" y2="394.2" stroke-width="0.74"/><line x1="141.1" y1="393.3" x2="142.3" y2="396.9" stroke-width="0.74"/><line x1="132.2" y1="388.1" x2="132.5" y2="393.4" stroke-width="1.09"/><line x1="132.5" y1="393.4" x2="135.1" y2="396.4" stroke-width="0.89"/><line x1="135.1" y1="396.4" x2="138.3" y2="396.6" stroke-width="0.74"/><line x1="135.1" y1="396.4" x2="135.4" y2="399.2" stroke-width="0.74"/><line x1="132.5" y1="393.4" x2="130.6" y2="396.9" stroke-width="0.89"/><line x1="130.6" y1="396.9" x2="130.8" y2="399.8" stroke-width="0.74"/><line x1="130.6" y1="396.9" x2="128.1" y2="398.7" stroke-width="0.74"/><line x1="106.0" y1="394.0" x2="117.9" y2="395.8" stroke-width="2.07"/><line x1="117.9" y1="395.8" x2="126.1" y2="393.3" stroke-width="1.66"/><line x1="126.1" y1="393.3" x2="130.6" y2="388.2" stroke-width="1.34"/><line x1="130.6" y1="388.2" x2="131.0" y2="382.6" stroke-width="1.09"/><line x1="131.0" y1="382.6" x2="129.1" y2="379.1" stroke-width="0.89"/><line x1="129.1" y1="379.1" x2="126.3" y2="377.7" stroke-width="0.74"/><line x1="129.1" y1="379.1" x2="129.1" y2="376.1" stroke-width="0.74"/><line x1="131.0" y1="382.6" x2="133.0" y2="378.5" stroke-width="0.89"/><line x1="133.0" y1="378.5" x2="132.8" y2="374.9" stroke-width="0.74"/><line x1="133.0" y1="378.5" x2="134.9" y2="376.0" stroke-width="0.74"/><line x1="130.6" y1="388.2" x2="136.0" y2="387.1" stroke-width="1.09"/><line x1="136.0" y1="387.1" x2="139.4" y2="384.6" stroke-width="0.89"/><line x1="139.4" y1="384.6" x2="141.0" y2="381.9" stroke-width="0.74"/><line x1="139.4" y1="384.6" x2="142.5" y2="384.4" stroke-width="0.74"/><line x1="136.0" y1="387.1" x2="139.6" y2="388.5" stroke-width="0.89"/><line x1="139.6" y1="388.5" x2="142.6" y2="388.0" stroke-width="0.74"/><line x1="139.6" y1="388.5" x2="141.4" y2="390.5" stroke-width="0.74"/><line x1="126.1" y1="393.3" x2="132.2" y2="394.2" stroke-width="1.34"/><line x1="132.2" y1="394.2" x2="136.1" y2="392.3" stroke-width="1.09"/><line x1="136.1" y1="392.3" x2="138.3" y2="389.8" stroke-width="0.89"/><line x1="138.3" y1="389.8" x2="138.9" y2="387.3" stroke-width="0.74"/><line x1="138.3" y1="389.8" x2="140.5" y2="388.6" stroke-width="0.74"/><line x1="136.1" y1="392.3" x2="139.6" y2="393.0" stroke-width="0.89"/><line x1="139.6" y1="393.0" x2="142.1" y2="392.4" stroke-width="0.74"/><line x1="139.6" y1="393.0" x2="141.7" y2="394.5" stroke-width="0.74"/><line x1="132.2" y1="394.2" x2="135.4" y2="397.1" stroke-width="1.09"/><line x1="135.4" y1="397.1" x2="138.6" y2="397.3" stroke-width="0.89"/><line x1="138.6" y1="397.3" x2="140.9" y2="396.6" stroke-width="0.74"/><line x1="138.6" y1="397.3" x2="140.6" y2="398.4" stroke-width="0.74"/><line x1="135.4" y1="397.1" x2="136.1" y2="400.0" stroke-width="0.89"/><line x1="136.1" y1="400.0" x2="137.5" y2="401.5" stroke-width="0.74"/><line x1="136.1" y1="400.0" x2="135.6" y2="402.0" stroke-width="0.74"/><line x1="117.9" y1="395.8" x2="125.6" y2="400.5" stroke-width="1.66"/><line x1="125.6" y1="400.5" x2="132.4" y2="400.4" stroke-width="1.34"/><line x1="132.4" y1="400.4" x2="136.5" y2="397.9" stroke-width="1.09"/><line x1="136.5" y1="397.9" x2="138.3" y2="394.8" stroke-width="0.89"/><line x1="138.3" y1="394.8" x2="138.4" y2="392.1" stroke-width="0.74"/><line x1="138.3" y1="394.8" x2="140.9" y2="393.7" stroke-width="0.74"/><line x1="136.5" y1="397.9" x2="140.1" y2="397.4" stroke-width="0.89"/><line x1="140.1" y1="397.4" x2="142.4" y2="395.9" stroke-width="0.74"/><line x1="140.1" y1="397.4" x2="142.7" y2="398.4" stroke-width="0.74"/><line x1="132.4" y1="400.4" x2="137.3" y2="402.8" stroke-width="1.09"/><line x1="137.3" y1="402.8" x2="141.6" y2="402.7" stroke-width="0.89"/><line x1="141.6" y1="402.7" x2="144.5" y2="401.5" stroke-width="0.74"/><line x1="141.6" y1="402.7" x2="144.8" y2="404.0" stroke-width="0.74"/><line x1="137.3" y1="402.8" x2="140.4" y2="406.0" stroke-width="0.89"/><line x1="140.4" y1="406.0" x2="143.8" y2="407.3" stroke-width="0.74"/><line x1="140.4" y1="406.0" x2="142.1" y2="408.9" stroke-width="0.74"/><line x1="125.6" y1="400.5" x2="128.6" y2="405.9" stroke-width="1.34"/><line x1="128.6" y1="405.9" x2="132.7" y2="408.5" stroke-width="1.09"/><line x1="132.7" y1="408.5" x2="136.4" y2="409.3" stroke-width="0.89"/><line x1="136.4" y1="409.3" x2="139.0" y2="408.8" stroke-width="0.74"/><line x1="136.4" y1="409.3" x2="138.9" y2="411.0" stroke-width="0.74"/><line x1="132.7" y1="408.5" x2="134.4" y2="411.5" stroke-width="0.89"/><line x1="134.4" y1="411.5" x2="136.5" y2="412.8" stroke-width="0.74"/><line x1="134.4" y1="411.5" x2="134.4" y2="414.2" stroke-width="0.74"/><line x1="128.6" y1="405.9" x2="128.0" y2="410.4" stroke-width="1.09"/><line x1="128.0" y1="410.4" x2="129.9" y2="413.5" stroke-width="0.89"/><line x1="129.9" y1="413.5" x2="132.6" y2="414.6" stroke-width="0.74"/><line x1="129.9" y1="413.5" x2="130.1" y2="416.2" stroke-width="0.74"/><line x1="128.0" y1="410.4" x2="125.2" y2="412.7" stroke-width="0.89"/><line x1="125.2" y1="412.7" x2="124.0" y2="415.3" stroke-width="0.74"/><line x1="125.2" y1="412.7" x2="122.4" y2="413.2" stroke-width="0.74"/><line x1="106.0" y1="406.0" x2="113.6" y2="413.9" stroke-width="1.90"/><line x1="113.6" y1="413.9" x2="121.1" y2="415.8" stroke-width="1.53"/><line x1="121.1" y1="415.8" x2="126.6" y2="413.5" stroke-width="1.23"/><line x1="126.6" y1="413.5" x2="129.9" y2="410.6" stroke-width="1.01"/><line x1="129.9" y1="410.6" x2="131.1" y2="407.3" stroke-width="0.83"/><line x1="131.1" y1="407.3" x2="130.6" y2="404.6" stroke-width="0.70"/><line x1="131.1" y1="407.3" x2="133.1" y2="405.4" stroke-width="0.70"/><line x1="129.9" y1="410.6" x2="132.8" y2="409.4" stroke-width="0.83"/><line x1="132.8" y1="409.4" x2="134.2" y2="407.5" stroke-width="0.70"/><line x1="132.8" y1="409.4" x2="135.1" y2="409.2" stroke-width="0.70"/><line x1="126.6" y1="413.5" x2="131.3" y2="413.3" stroke-width="1.01"/><line x1="131.3" y1="413.3" x2="134.2" y2="411.9" stroke-width="0.83"/><line x1="134.2" y1="411.9" x2="135.7" y2="410.1" stroke-width="0.70"/><line x1="134.2" y1="411.9" x2="136.7" y2="412.2" stroke-width="0.70"/><line x1="131.3" y1="413.3" x2="134.5" y2="414.2" stroke-width="0.83"/><line x1="134.5" y1="414.2" x2="137.1" y2="414.1" stroke-width="0.70"/><line x1="134.5" y1="414.2" x2="136.6" y2="415.3" stroke-width="0.70"/><line x1="121.1" y1="415.8" x2="125.3" y2="420.1" stroke-width="1.23"/><line x1="125.3" y1="420.1" x2="129.5" y2="421.9" stroke-width="1.01"/><line x1="129.5" y1="421.9" x2="132.8" y2="421.8" stroke-width="0.83"/><line x1="132.8" y1="421.8" x2="134.8" y2="420.3" stroke-width="0.70"/><line x1="132.8" y1="421.8" x2="135.1" y2="422.8" stroke-width="0.70"/><line x1="129.5" y1="421.9" x2="131.7" y2="424.4" stroke-width="0.83"/><line x1="131.7" y1="424.4" x2="134.2" y2="424.7" stroke-width="0.70"/><line x1="131.7" y1="424.4" x2="131.9" y2="426.7" stroke-width="0.70"/><line x1="125.3" y1="420.1" x2="127.0" y2="423.9" stroke-width="1.01"/><line x1="127.0" y1="423.9" x2="129.1" y2="426.3" stroke-width="0.83"/><line x1="129.1" y1="426.3" x2="131.3" y2="427.5" stroke-width="0.70"/><line x1="129.1" y1="426.3" x2="129.9" y2="428.3" stroke-width="0.70"/><line x1="127.0" y1="423.9" x2="126.8" y2="426.9" stroke-width="0.83"/><line x1="126.8" y1="426.9" x2="128.1" y2="428.8" stroke-width="0.70"/><line x1="126.8" y1="426.9" x2="125.6" y2="428.6" stroke-width="0.70"/><line x1="113.6" y1="413.9" x2="115.9" y2="422.3" stroke-width="1.53"/><line x1="115.9" y1="422.3" x2="120.0" y2="426.7" stroke-width="1.23"/><line x1="120.0" y1="426.7" x2="123.8" y2="428.4" stroke-width="1.01"/><line x1="123.8" y1="428.4" x2="127.2" y2="428.6" stroke-width="0.83"/><line x1="127.2" y1="428.6" x2="129.1" y2="427.3" stroke-width="0.70"/><line x1="127.2" y1="428.6" x2="129.3" y2="429.5" stroke-width="0.70"/><line x1="123.8" y1="428.4" x2="125.8" y2="430.7" stroke-width="0.83"/><line x1="125.8" y1="430.7" x2="127.8" y2="432.1" stroke-width="0.70"/><line x1="125.8" y1="430.7" x2="126.3" y2="433.0" stroke-width="0.70"/><line x1="120.0" y1="426.7" x2="121.0" y2="431.2" stroke-width="1.01"/><line x1="121.0" y1="431.2" x2="123.9" y2="433.5" stroke-width="0.83"/><line x1="123.9" y1="433.5" x2="126.4" y2="433.4" stroke-width="0.70"/><line x1="123.9" y1="433.5" x2="124.5" y2="436.0" stroke-width="0.70"/><line x1="121.0" y1="431.2" x2="119.3" y2="434.2" stroke-width="0.83"/><line x1="119.3" y1="434.2" x2="119.6" y2="437.0" stroke-width="0.70"/><line x1="119.3" y1="434.2" x2="117.3" y2="435.8" stroke-width="0.70"/><line x1="115.9" y1="422.3" x2="115.0" y2="428.9" stroke-width="1.23"/><line x1="115.0" y1="428.9" x2="116.7" y2="433.2" stroke-width="1.01"/><line x1="116.7" y1="433.2" x2="119.3" y2="435.3" stroke-width="0.83"/><line x1="119.3" y1="435.3" x2="121.8" y2="435.7" stroke-width="0.70"/><line x1="119.3" y1="435.3" x2="120.7" y2="437.5" stroke-width="0.70"/><line x1="116.7" y1="433.2" x2="116.2" y2="435.0" stroke-width="0.83"/><line x1="116.2" y1="435.0" x2="116.7" y2="436.3" stroke-width="0.70"/><line x1="116.2" y1="435.0" x2="115.7" y2="435.5" stroke-width="0.70"/><line x1="115.0" y1="428.9" x2="113.6" y2="431.2" stroke-width="1.01"/><line x1="113.6" y1="431.2" x2="113.7" y2="433.4" stroke-width="0.83"/><line x1="113.7" y1="433.4" x2="114.3" y2="434.9" stroke-width="0.70"/><line x1="113.7" y1="433.4" x2="113.3" y2="434.1" stroke-width="0.70"/><line x1="113.6" y1="431.2" x2="111.7" y2="432.2" stroke-width="0.83"/><line x1="106.0" y1="416.0" x2="112.7" y2="420.4" stroke-width="1.73"/><line x1="112.7" y1="420.4" x2="118.3" y2="420.8" stroke-width="1.39"/><line x1="118.3" y1="420.8" x2="122.0" y2="419.0" stroke-width="1.13"/><line x1="122.0" y1="419.0" x2="124.1" y2="417.0" stroke-width="0.93"/><line x1="124.1" y1="417.0" x2="124.4" y2="415.1" stroke-width="0.77"/><line x1="124.1" y1="417.0" x2="126.1" y2="416.6" stroke-width="0.77"/><line x1="122.0" y1="419.0" x2="125.1" y2="418.9" stroke-width="0.93"/><line x1="125.1" y1="418.9" x2="126.8" y2="417.6" stroke-width="0.77"/><line x1="125.1" y1="418.9" x2="127.0" y2="420.2" stroke-width="0.77"/><line x1="118.3" y1="420.8" x2="121.8" y2="423.1" stroke-width="1.13"/><line x1="121.8" y1="423.1" x2="125.0" y2="423.4" stroke-width="0.93"/><line x1="125.0" y1="423.4" x2="127.3" y2="423.0" stroke-width="0.77"/><line x1="125.0" y1="423.4" x2="127.3" y2="424.3" stroke-width="0.77"/><line x1="121.8" y1="423.1" x2="124.0" y2="425.4" stroke-width="0.93"/><line x1="124.0" y1="425.4" x2="126.5" y2="426.2" stroke-width="0.77"/><line x1="124.0" y1="425.4" x2="124.3" y2="427.7" stroke-width="0.77"/><line x1="112.7" y1="420.4" x2="114.8" y2="426.6" stroke-width="1.39"/><line x1="114.8" y1="426.6" x2="117.5" y2="430.8" stroke-width="1.13"/><line x1="117.5" y1="430.8" x2="120.5" y2="432.8" stroke-width="0.93"/><line x1="120.5" y1="432.8" x2="123.1" y2="432.9" stroke-width="0.77"/><line x1="120.5" y1="432.8" x2="121.6" y2="435.3" stroke-width="0.77"/><line x1="117.5" y1="430.8" x2="118.1" y2="434.4" stroke-width="0.93"/><line x1="118.1" y1="434.4" x2="119.5" y2="436.5" stroke-width="0.77"/><line x1="118.1" y1="434.4" x2="117.1" y2="437.0" stroke-width="0.77"/><line x1="114.8" y1="426.6" x2="114.2" y2="431.5" stroke-width="1.13"/><line x1="114.2" y1="431.5" x2="115.1" y2="434.9" stroke-width="0.93"/><line x1="115.1" y1="434.9" x2="116.7" y2="437.0" stroke-width="0.77"/><line x1="114.2" y1="431.5" x2="113.2" y2="432.9" stroke-width="0.93"/><line x1="113.2" y1="432.9" x2="113.0" y2="434.1" stroke-width="0.77"/><line x1="113.2" y1="432.9" x2="112.6" y2="433.1" stroke-width="0.77"/><line x1="102.0" y1="408.0" x2="105.7" y2="417.3" stroke-width="1.90"/><line x1="105.7" y1="417.3" x2="111.0" y2="422.0" stroke-width="1.53"/><line x1="111.0" y1="422.0" x2="115.9" y2="423.4" stroke-width="1.23"/><line x1="115.9" y1="423.4" x2="119.8" y2="422.9" stroke-width="1.01"/><line x1="115.9" y1="423.4" x2="118.9" y2="425.9" stroke-width="1.01"/><line x1="111.0" y1="422.0" x2="111.5" y2="427.0" stroke-width="1.23"/><line x1="111.5" y1="427.0" x2="113.7" y2="430.4" stroke-width="1.01"/><line x1="111.5" y1="427.0" x2="109.9" y2="430.2" stroke-width="1.01"/><line x1="105.7" y1="417.3" x2="105.7" y2="421.4" stroke-width="1.53"/><line x1="105.7" y1="421.4" x2="107.2" y2="424.3" stroke-width="1.23"/><line x1="107.2" y1="424.3" x2="108.8" y2="426.2" stroke-width="1.01"/><line x1="107.2" y1="424.3" x2="107.7" y2="426.7" stroke-width="1.01"/><line x1="105.7" y1="421.4" x2="105.0" y2="422.8" stroke-width="1.23"/><line x1="105.0" y1="422.8" x2="105.0" y2="423.4" stroke-width="1.01"/><line x1="105.0" y1="400.0" x2="100.0" y2="406.2" stroke-width="1.56"/><line x1="100.0" y1="406.2" x2="98.9" y2="409.3" stroke-width="1.26"/><line x1="56.0" y1="400.0" x2="59.7" y2="404.7" stroke-width="1.39"/><line x1="59.7" y1="404.7" x2="64.1" y2="407.0" stroke-width="1.13"/><line x1="64.1" y1="407.0" x2="67.4" y2="407.2" stroke-width="0.92"/><line x1="67.4" y1="407.2" x2="68.6" y2="406.6" stroke-width="0.76"/><line x1="67.4" y1="407.2" x2="68.4" y2="407.9" stroke-width="0.76"/><line x1="64.1" y1="407.0" x2="66.2" y2="409.6" stroke-width="0.92"/><line x1="66.2" y1="409.6" x2="67.4" y2="410.1" stroke-width="0.76"/><line x1="66.2" y1="409.6" x2="66.6" y2="412.0" stroke-width="0.76"/><line x1="59.7" y1="404.7" x2="60.0" y2="409.2" stroke-width="1.13"/><line x1="60.0" y1="409.2" x2="61.9" y2="411.8" stroke-width="0.92"/><line x1="61.9" y1="411.8" x2="64.3" y2="412.4" stroke-width="0.76"/><line x1="61.9" y1="411.8" x2="62.4" y2="414.1" stroke-width="0.76"/><line x1="60.0" y1="409.2" x2="58.8" y2="412.1" stroke-width="0.92"/><line x1="58.8" y1="412.1" x2="59.0" y2="414.6" stroke-width="0.76"/><line x1="58.8" y1="412.1" x2="57.3" y2="413.6" stroke-width="0.76"/></g><g stroke="#c8cfce" stroke-linecap="round" fill="none"><line x1="76.0" y1="338.0" x2="66.0" y2="350.0" stroke-width="5.20"/><line x1="66.0" y1="350.0" x2="60.0" y2="368.0" stroke-width="4.27"/><line x1="60.0" y1="368.0" x2="56.0" y2="388.0" stroke-width="3.33"/><line x1="56.0" y1="388.0" x2="54.0" y2="404.0" stroke-width="2.40"/><line x1="80.0" y1="338.0" x2="92.0" y2="347.0" stroke-width="5.20"/><line x1="92.0" y1="347.0" x2="103.0" y2="357.0" stroke-width="4.50"/><line x1="103.0" y1="357.0" x2="107.0" y2="373.0" stroke-width="3.80"/><line x1="107.0" y1="373.0" x2="105.0" y2="392.0" stroke-width="3.10"/><line x1="105.0" y1="392.0" x2="102.0" y2="408.0" stroke-width="2.40"/><line x1="64.0" y1="347.0" x2="53.0" y2="343.0" stroke-width="2.40"/><line x1="53.0" y1="343.0" x2="47.0" y2="328.0" stroke-width="1.90"/><line x1="47.0" y1="328.0" x2="46.0" y2="306.0" stroke-width="1.40"/><line x1="103.0" y1="357.0" x2="111.0" y2="345.0" stroke-width="2.40"/><line x1="111.0" y1="345.0" x2="120.0" y2="330.0" stroke-width="1.90"/><line x1="120.0" y1="330.0" x2="127.0" y2="306.0" stroke-width="1.40"/><line x1="53.0" y1="343.0" x2="43.2" y2="341.0" stroke-width="1.25"/><line x1="43.2" y1="341.0" x2="35.4" y2="343.2" stroke-width="0.88"/><line x1="35.4" y1="343.2" x2="30.9" y2="347.4" stroke-width="0.58"/><line x1="35.4" y1="343.2" x2="29.8" y2="341.4" stroke-width="0.58"/><line x1="43.2" y1="341.0" x2="36.6" y2="337.1" stroke-width="0.88"/><line x1="36.6" y1="337.1" x2="31.1" y2="336.5" stroke-width="0.58"/><line x1="36.6" y1="337.1" x2="33.2" y2="332.0" stroke-width="0.58"/><line x1="49.0" y1="334.0" x2="41.1" y2="327.9" stroke-width="1.25"/><line x1="41.1" y1="327.9" x2="34.7" y2="325.2" stroke-width="0.88"/><line x1="34.7" y1="325.2" x2="30.0" y2="326.7" stroke-width="0.58"/><line x1="34.7" y1="325.2" x2="32.1" y2="321.2" stroke-width="0.58"/><line x1="41.1" y1="327.9" x2="37.8" y2="320.9" stroke-width="0.88"/><line x1="37.8" y1="320.9" x2="33.4" y2="317.3" stroke-width="0.58"/><line x1="37.8" y1="320.9" x2="37.2" y2="315.5" stroke-width="0.58"/><line x1="47.0" y1="326.0" x2="51.0" y2="318.0" stroke-width="1.08"/><line x1="51.0" y1="318.0" x2="50.9" y2="310.8" stroke-width="0.74"/><line x1="50.9" y1="310.8" x2="48.5" y2="306.3" stroke-width="0.48"/><line x1="50.9" y1="310.8" x2="53.4" y2="305.8" stroke-width="0.48"/><line x1="51.0" y1="318.0" x2="57.0" y2="313.8" stroke-width="0.74"/><line x1="57.0" y1="313.8" x2="58.4" y2="311.6" stroke-width="0.48"/><line x1="57.0" y1="313.8" x2="59.6" y2="313.6" stroke-width="0.48"/><line x1="46.0" y1="308.0" x2="43.0" y2="300.6" stroke-width="1.08"/><line x1="46.0" y1="308.0" x2="47.5" y2="304.3" stroke-width="1.08"/><line x1="47.5" y1="304.3" x2="47.1" y2="301.5" stroke-width="0.74"/><line x1="47.5" y1="304.3" x2="50.1" y2="302.3" stroke-width="0.74"/><line x1="58.0" y1="346.0" x2="57.3" y2="339.0" stroke-width="0.91"/><line x1="57.3" y1="339.0" x2="53.5" y2="335.0" stroke-width="0.61"/><line x1="53.5" y1="335.0" x2="49.4" y2="333.3" stroke-width="0.38"/><line x1="53.5" y1="335.0" x2="52.4" y2="331.2" stroke-width="0.38"/><line x1="57.3" y1="339.0" x2="60.4" y2="334.8" stroke-width="0.61"/><line x1="60.4" y1="334.8" x2="61.3" y2="331.1" stroke-width="0.38"/><line x1="60.4" y1="334.8" x2="63.8" y2="332.9" stroke-width="0.38"/><line x1="61.0" y1="362.0" x2="49.1" y2="360.2" stroke-width="1.42"/><line x1="49.1" y1="360.2" x2="41.4" y2="364.5" stroke-width="1.01"/><line x1="41.4" y1="364.5" x2="38.6" y2="369.9" stroke-width="0.69"/><line x1="38.6" y1="369.9" x2="38.7" y2="374.2" stroke-width="0.44"/><line x1="38.6" y1="369.9" x2="34.4" y2="372.8" stroke-width="0.44"/><line x1="41.4" y1="364.5" x2="35.4" y2="363.9" stroke-width="0.69"/><line x1="35.4" y1="363.9" x2="30.7" y2="365.6" stroke-width="0.44"/><line x1="35.4" y1="363.9" x2="31.3" y2="362.0" stroke-width="0.44"/><line x1="49.1" y1="360.2" x2="42.7" y2="353.8" stroke-width="1.01"/><line x1="42.7" y1="353.8" x2="35.5" y2="353.5" stroke-width="0.69"/><line x1="35.5" y1="353.5" x2="29.9" y2="355.4" stroke-width="0.44"/><line x1="35.5" y1="353.5" x2="30.9" y2="351.0" stroke-width="0.44"/><line x1="42.7" y1="353.8" x2="42.2" y2="347.5" stroke-width="0.69"/><line x1="42.2" y1="347.5" x2="40.3" y2="343.4" stroke-width="0.44"/><line x1="42.2" y1="347.5" x2="44.0" y2="343.1" stroke-width="0.44"/><line x1="58.0" y1="378.0" x2="46.1" y2="379.2" stroke-width="1.42"/><line x1="46.1" y1="379.2" x2="38.3" y2="383.4" stroke-width="1.01"/><line x1="38.3" y1="383.4" x2="34.0" y2="387.5" stroke-width="0.69"/><line x1="34.0" y1="387.5" x2="32.2" y2="392.1" stroke-width="0.44"/><line x1="34.0" y1="387.5" x2="29.4" y2="389.0" stroke-width="0.44"/><line x1="38.3" y1="383.4" x2="32.1" y2="384.8" stroke-width="0.69"/><line x1="32.1" y1="384.8" x2="28.6" y2="388.5" stroke-width="0.44"/><line x1="32.1" y1="384.8" x2="27.3" y2="383.9" stroke-width="0.44"/><line x1="46.1" y1="379.2" x2="37.1" y2="378.0" stroke-width="1.01"/><line x1="37.1" y1="378.0" x2="31.1" y2="380.5" stroke-width="0.69"/><line x1="31.1" y1="380.5" x2="28.4" y2="384.4" stroke-width="0.44"/><line x1="31.1" y1="380.5" x2="26.3" y2="380.8" stroke-width="0.44"/><line x1="37.1" y1="378.0" x2="32.2" y2="373.4" stroke-width="0.69"/><line x1="32.2" y1="373.4" x2="27.4" y2="371.1" stroke-width="0.44"/><line x1="32.2" y1="373.4" x2="29.4" y2="369.0" stroke-width="0.44"/><line x1="56.0" y1="394.0" x2="44.4" y2="396.9" stroke-width="1.42"/><line x1="44.4" y1="396.9" x2="37.8" y2="403.1" stroke-width="1.01"/><line x1="37.8" y1="403.1" x2="36.1" y2="409.0" stroke-width="0.69"/><line x1="36.1" y1="409.0" x2="36.0" y2="413.5" stroke-width="0.44"/><line x1="36.1" y1="409.0" x2="32.9" y2="412.6" stroke-width="0.44"/><line x1="37.8" y1="403.1" x2="31.6" y2="405.3" stroke-width="0.69"/><line x1="31.6" y1="405.3" x2="27.8" y2="408.5" stroke-width="0.44"/><line x1="31.6" y1="405.3" x2="26.7" y2="405.0" stroke-width="0.44"/><line x1="44.4" y1="396.9" x2="36.0" y2="394.8" stroke-width="1.01"/><line x1="36.0" y1="394.8" x2="30.0" y2="397.0" stroke-width="0.69"/><line x1="30.0" y1="397.0" x2="27.7" y2="401.1" stroke-width="0.44"/><line x1="30.0" y1="397.0" x2="25.4" y2="396.1" stroke-width="0.44"/><line x1="36.0" y1="394.8" x2="32.2" y2="389.4" stroke-width="0.69"/><line x1="32.2" y1="389.4" x2="28.1" y2="386.6" stroke-width="0.44"/><line x1="32.2" y1="389.4" x2="31.3" y2="384.5" stroke-width="0.44"/><line x1="56.0" y1="406.0" x2="48.4" y2="413.9" stroke-width="1.25"/><line x1="48.4" y1="413.9" x2="46.5" y2="421.2" stroke-width="0.88"/><line x1="46.5" y1="421.2" x2="47.6" y2="426.8" stroke-width="0.58"/><line x1="46.5" y1="421.2" x2="43.1" y2="425.7" stroke-width="0.58"/><line x1="48.4" y1="413.9" x2="40.5" y2="416.0" stroke-width="0.88"/><line x1="40.5" y1="416.0" x2="36.1" y2="419.5" stroke-width="0.58"/><line x1="40.5" y1="416.0" x2="34.1" y2="414.8" stroke-width="0.58"/><line x1="56.0" y1="416.0" x2="49.3" y2="420.4" stroke-width="1.08"/><line x1="49.3" y1="420.4" x2="47.3" y2="425.9" stroke-width="0.74"/><line x1="47.3" y1="425.9" x2="47.5" y2="430.5" stroke-width="0.48"/><line x1="47.3" y1="425.9" x2="44.5" y2="429.4" stroke-width="0.48"/><line x1="49.3" y1="420.4" x2="42.9" y2="421.2" stroke-width="0.74"/><line x1="42.9" y1="421.2" x2="39.8" y2="424.4" stroke-width="0.48"/><line x1="42.9" y1="421.2" x2="39.4" y2="418.4" stroke-width="0.48"/><line x1="54.0" y1="404.0" x2="55.2" y2="413.9" stroke-width="1.42"/><line x1="55.2" y1="413.9" x2="59.1" y2="419.8" stroke-width="1.01"/><line x1="59.1" y1="419.8" x2="63.6" y2="421.3" stroke-width="0.69"/><line x1="59.1" y1="419.8" x2="59.6" y2="424.6" stroke-width="0.69"/><line x1="59.6" y1="424.6" x2="60.7" y2="425.9" stroke-width="0.44"/><line x1="59.6" y1="424.6" x2="58.5" y2="427.9" stroke-width="0.44"/><line x1="55.2" y1="413.9" x2="53.9" y2="420.8" stroke-width="1.01"/><line x1="53.9" y1="420.8" x2="56.1" y2="425.6" stroke-width="0.69"/><line x1="56.1" y1="425.6" x2="58.9" y2="428.3" stroke-width="0.44"/><line x1="56.1" y1="425.6" x2="55.6" y2="429.4" stroke-width="0.44"/><line x1="53.9" y1="420.8" x2="50.5" y2="424.7" stroke-width="0.69"/><line x1="50.5" y1="424.7" x2="50.2" y2="428.6" stroke-width="0.44"/><line x1="50.5" y1="424.7" x2="46.5" y2="426.0" stroke-width="0.44"/><line x1="54.0" y1="404.0" x2="59.8" y2="412.1" stroke-width="1.25"/><line x1="59.8" y1="412.1" x2="66.6" y2="414.1" stroke-width="0.88"/><line x1="59.8" y1="412.1" x2="59.5" y2="419.0" stroke-width="0.88"/><line x1="59.5" y1="419.0" x2="61.9" y2="423.8" stroke-width="0.58"/><line x1="59.5" y1="419.0" x2="56.5" y2="423.0" stroke-width="0.58"/><line x1="62.0" y1="366.0" x2="66.9" y2="370.9" stroke-width="0.74"/><line x1="66.9" y1="370.9" x2="71.8" y2="372.3" stroke-width="0.48"/><line x1="66.9" y1="370.9" x2="68.0" y2="376.1" stroke-width="0.48"/><line x1="111.0" y1="345.0" x2="120.8" y2="343.0" stroke-width="1.25"/><line x1="120.8" y1="343.0" x2="126.0" y2="338.5" stroke-width="0.88"/><line x1="126.0" y1="338.5" x2="128.1" y2="333.6" stroke-width="0.58"/><line x1="126.0" y1="338.5" x2="131.2" y2="336.4" stroke-width="0.58"/><line x1="120.8" y1="343.0" x2="127.8" y2="345.6" stroke-width="0.88"/><line x1="127.8" y1="345.6" x2="133.7" y2="345.0" stroke-width="0.58"/><line x1="127.8" y1="345.6" x2="131.0" y2="349.8" stroke-width="0.58"/><line x1="117.0" y1="336.0" x2="124.9" y2="329.9" stroke-width="1.25"/><line x1="124.9" y1="329.9" x2="127.9" y2="322.5" stroke-width="0.88"/><line x1="127.9" y1="322.5" x2="128.1" y2="316.4" stroke-width="0.58"/><line x1="127.9" y1="322.5" x2="132.1" y2="318.8" stroke-width="0.58"/><line x1="124.9" y1="329.9" x2="132.8" y2="327.6" stroke-width="0.88"/><line x1="132.8" y1="327.6" x2="136.5" y2="322.4" stroke-width="0.58"/><line x1="132.8" y1="327.6" x2="139.2" y2="329.1" stroke-width="0.58"/><line x1="120.0" y1="328.0" x2="116.0" y2="320.0" stroke-width="1.08"/><line x1="116.0" y1="320.0" x2="110.7" y2="316.4" stroke-width="0.74"/><line x1="110.7" y1="316.4" x2="105.9" y2="316.4" stroke-width="0.48"/><line x1="110.7" y1="316.4" x2="108.5" y2="312.0" stroke-width="0.48"/><line x1="116.0" y1="320.0" x2="116.4" y2="313.3" stroke-width="0.74"/><line x1="116.4" y1="313.3" x2="114.0" y2="309.1" stroke-width="0.48"/><line x1="116.4" y1="313.3" x2="119.5" y2="309.6" stroke-width="0.48"/><line x1="127.0" y1="308.0" x2="130.0" y2="300.6" stroke-width="1.08"/><line x1="127.0" y1="308.0" x2="124.0" y2="300.6" stroke-width="1.08"/><line x1="106.0" y1="352.0" x2="113.0" y2="351.3" stroke-width="0.91"/><line x1="113.0" y1="351.3" x2="117.8" y2="348.2" stroke-width="0.61"/><line x1="117.8" y1="348.2" x2="120.0" y2="344.6" stroke-width="0.38"/><line x1="117.8" y1="348.2" x2="122.4" y2="348.1" stroke-width="0.38"/><line x1="113.0" y1="351.3" x2="118.2" y2="352.1" stroke-width="0.61"/><line x1="118.2" y1="352.1" x2="121.6" y2="350.4" stroke-width="0.38"/><line x1="118.2" y1="352.1" x2="121.4" y2="354.4" stroke-width="0.38"/><line x1="106.0" y1="366.0" x2="117.6" y2="363.1" stroke-width="1.42"/><line x1="117.6" y1="363.1" x2="125.4" y2="358.4" stroke-width="1.01"/><line x1="125.4" y1="358.4" x2="128.8" y2="352.1" stroke-width="0.69"/><line x1="128.8" y1="352.1" x2="129.2" y2="346.4" stroke-width="0.44"/><line x1="128.8" y1="352.1" x2="133.1" y2="348.3" stroke-width="0.44"/><line x1="125.4" y1="358.4" x2="131.9" y2="357.6" stroke-width="0.69"/><line x1="131.9" y1="357.6" x2="135.8" y2="355.1" stroke-width="0.44"/><line x1="131.9" y1="357.6" x2="136.3" y2="360.1" stroke-width="0.44"/><line x1="117.6" y1="363.1" x2="127.0" y2="364.7" stroke-width="1.01"/><line x1="127.0" y1="364.7" x2="134.3" y2="361.8" stroke-width="0.69"/><line x1="134.3" y1="361.8" x2="137.4" y2="356.8" stroke-width="0.44"/><line x1="134.3" y1="361.8" x2="140.5" y2="362.1" stroke-width="0.44"/><line x1="127.0" y1="364.7" x2="131.6" y2="369.8" stroke-width="0.69"/><line x1="131.6" y1="369.8" x2="136.8" y2="372.0" stroke-width="0.44"/><line x1="131.6" y1="369.8" x2="132.0" y2="374.8" stroke-width="0.44"/><line x1="107.0" y1="380.0" x2="118.9" y2="378.8" stroke-width="1.42"/><line x1="118.9" y1="378.8" x2="125.1" y2="373.1" stroke-width="1.01"/><line x1="125.1" y1="373.1" x2="127.2" y2="366.6" stroke-width="0.69"/><line x1="127.2" y1="366.6" x2="125.6" y2="361.9" stroke-width="0.44"/><line x1="127.2" y1="366.6" x2="130.6" y2="363.3" stroke-width="0.44"/><line x1="125.1" y1="373.1" x2="131.8" y2="373.1" stroke-width="0.69"/><line x1="131.8" y1="373.1" x2="135.9" y2="371.0" stroke-width="0.44"/><line x1="131.8" y1="373.1" x2="136.6" y2="374.4" stroke-width="0.44"/><line x1="118.9" y1="378.8" x2="127.4" y2="382.4" stroke-width="1.01"/><line x1="127.4" y1="382.4" x2="134.0" y2="382.7" stroke-width="0.69"/><line x1="134.0" y1="382.7" x2="138.6" y2="380.1" stroke-width="0.44"/><line x1="134.0" y1="382.7" x2="137.6" y2="386.1" stroke-width="0.44"/><line x1="127.4" y1="382.4" x2="132.2" y2="388.1" stroke-width="0.69"/><line x1="132.2" y1="388.1" x2="137.8" y2="390.1" stroke-width="0.44"/><line x1="132.2" y1="388.1" x2="132.5" y2="393.4" stroke-width="0.44"/><line x1="106.0" y1="394.0" x2="117.9" y2="395.8" stroke-width="1.42"/><line x1="117.9" y1="395.8" x2="126.1" y2="393.3" stroke-width="1.01"/><line x1="126.1" y1="393.3" x2="130.6" y2="388.2" stroke-width="0.69"/><line x1="130.6" y1="388.2" x2="131.0" y2="382.6" stroke-width="0.44"/><line x1="130.6" y1="388.2" x2="136.0" y2="387.1" stroke-width="0.44"/><line x1="126.1" y1="393.3" x2="132.2" y2="394.2" stroke-width="0.69"/><line x1="132.2" y1="394.2" x2="136.1" y2="392.3" stroke-width="0.44"/><line x1="132.2" y1="394.2" x2="135.4" y2="397.1" stroke-width="0.44"/><line x1="117.9" y1="395.8" x2="125.6" y2="400.5" stroke-width="1.01"/><line x1="125.6" y1="400.5" x2="132.4" y2="400.4" stroke-width="0.69"/><line x1="132.4" y1="400.4" x2="136.5" y2="397.9" stroke-width="0.44"/><line x1="132.4" y1="400.4" x2="137.3" y2="402.8" stroke-width="0.44"/><line x1="125.6" y1="400.5" x2="128.6" y2="405.9" stroke-width="0.69"/><line x1="128.6" y1="405.9" x2="132.7" y2="408.5" stroke-width="0.44"/><line x1="128.6" y1="405.9" x2="128.0" y2="410.4" stroke-width="0.44"/><line x1="106.0" y1="406.0" x2="113.6" y2="413.9" stroke-width="1.25"/><line x1="113.6" y1="413.9" x2="121.1" y2="415.8" stroke-width="0.88"/><line x1="121.1" y1="415.8" x2="126.6" y2="413.5" stroke-width="0.58"/><line x1="121.1" y1="415.8" x2="125.3" y2="420.1" stroke-width="0.58"/><line x1="113.6" y1="413.9" x2="115.9" y2="422.3" stroke-width="0.88"/><line x1="115.9" y1="422.3" x2="120.0" y2="426.7" stroke-width="0.58"/><line x1="115.9" y1="422.3" x2="115.0" y2="428.9" stroke-width="0.58"/><line x1="106.0" y1="416.0" x2="112.7" y2="420.4" stroke-width="1.08"/><line x1="112.7" y1="420.4" x2="118.3" y2="420.8" stroke-width="0.74"/><line x1="118.3" y1="420.8" x2="122.0" y2="419.0" stroke-width="0.48"/><line x1="118.3" y1="420.8" x2="121.8" y2="423.1" stroke-width="0.48"/><line x1="112.7" y1="420.4" x2="114.8" y2="426.6" stroke-width="0.74"/><line x1="114.8" y1="426.6" x2="117.5" y2="430.8" stroke-width="0.48"/><line x1="114.8" y1="426.6" x2="114.2" y2="431.5" stroke-width="0.48"/><line x1="102.0" y1="408.0" x2="105.7" y2="417.3" stroke-width="1.25"/><line x1="105.7" y1="417.3" x2="111.0" y2="422.0" stroke-width="0.88"/><line x1="111.0" y1="422.0" x2="115.9" y2="423.4" stroke-width="0.58"/><line x1="111.0" y1="422.0" x2="111.5" y2="427.0" stroke-width="0.58"/><line x1="105.7" y1="417.3" x2="105.7" y2="421.4" stroke-width="0.88"/><line x1="105.7" y1="421.4" x2="107.2" y2="424.3" stroke-width="0.58"/><line x1="105.7" y1="421.4" x2="105.0" y2="422.8" stroke-width="0.58"/><line x1="105.0" y1="400.0" x2="100.0" y2="406.2" stroke-width="0.91"/><line x1="100.0" y1="406.2" x2="98.9" y2="409.3" stroke-width="0.61"/><line x1="56.0" y1="400.0" x2="59.7" y2="404.7" stroke-width="0.74"/><line x1="59.7" y1="404.7" x2="64.1" y2="407.0" stroke-width="0.48"/><line x1="59.7" y1="404.7" x2="60.0" y2="409.2" stroke-width="0.48"/></g><g stroke="#7f8a8a" stroke-width="0.7" opacity="0.9"><line x1="76.7" y1="341.5" x2="72.4" y2="337.9"/><line x1="75.3" y1="343.2" x2="71.0" y2="339.6"/><line x1="73.9" y1="344.9" x2="69.6" y2="341.4"/><line x1="72.4" y1="346.6" x2="68.1" y2="343.1"/><line x1="71.0" y1="348.4" x2="66.7" y2="344.8"/><line x1="69.6" y1="350.1" x2="65.3" y2="346.5"/><line x1="67.5" y1="353.0" x2="63.0" y2="351.5"/><line x1="66.7" y1="355.2" x2="62.3" y2="353.8"/><line x1="66.0" y1="357.5" x2="61.5" y2="356.0"/><line x1="65.2" y1="359.7" x2="60.8" y2="358.3"/><line x1="64.5" y1="362.0" x2="60.0" y2="360.5"/><line x1="63.7" y1="364.2" x2="59.3" y2="362.8"/><line x1="63.0" y1="366.5" x2="58.5" y2="365.0"/><line x1="61.3" y1="370.9" x2="57.7" y2="370.1"/><line x1="60.8" y1="373.4" x2="57.2" y2="372.6"/><line x1="60.3" y1="375.9" x2="56.7" y2="375.1"/><line x1="59.8" y1="378.4" x2="56.2" y2="377.6"/><line x1="59.3" y1="380.9" x2="55.7" y2="380.1"/><line x1="58.8" y1="383.4" x2="55.2" y2="382.6"/><line x1="58.3" y1="385.9" x2="54.7" y2="385.1"/><line x1="57.1" y1="390.5" x2="54.3" y2="390.1"/><line x1="56.8" y1="392.7" x2="54.0" y2="392.4"/><line x1="56.5" y1="395.0" x2="53.8" y2="394.7"/><line x1="56.2" y1="397.3" x2="53.5" y2="397.0"/><line x1="56.0" y1="399.6" x2="53.2" y2="399.3"/><line x1="55.7" y1="401.9" x2="52.9" y2="401.5"/><line x1="83.7" y1="337.3" x2="80.3" y2="341.7"/><line x1="85.7" y1="338.8" x2="82.3" y2="343.2"/><line x1="87.7" y1="340.3" x2="84.3" y2="344.7"/><line x1="89.7" y1="341.8" x2="86.3" y2="346.2"/><line x1="91.7" y1="343.3" x2="88.3" y2="347.7"/><line x1="95.5" y1="346.9" x2="92.2" y2="350.5"/><line x1="97.3" y1="348.5" x2="94.0" y2="352.1"/><line x1="99.1" y1="350.2" x2="95.9" y2="353.8"/><line x1="101.0" y1="351.9" x2="97.7" y2="355.5"/><line x1="102.8" y1="353.5" x2="99.5" y2="357.1"/><line x1="105.6" y1="358.8" x2="101.5" y2="359.8"/><line x1="106.2" y1="361.1" x2="102.1" y2="362.1"/><line x1="106.8" y1="363.3" x2="102.7" y2="364.4"/><line x1="107.3" y1="365.6" x2="103.2" y2="366.7"/><line x1="107.9" y1="367.9" x2="103.8" y2="368.9"/><line x1="108.5" y1="370.2" x2="104.4" y2="371.2"/><line x1="108.5" y1="375.6" x2="105.0" y2="375.2"/><line x1="108.2" y1="377.9" x2="104.8" y2="377.6"/><line x1="108.0" y1="380.3" x2="104.5" y2="379.9"/><line x1="107.7" y1="382.7" x2="104.3" y2="382.3"/><line x1="107.5" y1="385.1" x2="104.0" y2="384.7"/><line x1="107.2" y1="387.4" x2="103.8" y2="387.1"/><line x1="107.0" y1="389.8" x2="103.5" y2="389.4"/><line x1="105.9" y1="394.5" x2="103.2" y2="394.0"/><line x1="105.5" y1="396.8" x2="102.8" y2="396.3"/><line x1="105.1" y1="399.1" x2="102.3" y2="398.6"/><line x1="104.7" y1="401.4" x2="101.9" y2="400.9"/><line x1="104.2" y1="403.7" x2="101.5" y2="403.2"/><line x1="103.8" y1="406.0" x2="101.1" y2="405.5"/><line x1="61.3" y1="347.5" x2="62.3" y2="344.9"/><line x1="59.1" y1="346.7" x2="60.1" y2="344.1"/><line x1="56.9" y1="345.9" x2="57.9" y2="343.3"/><line x1="54.7" y1="345.1" x2="55.7" y2="342.5"/><line x1="51.1" y1="341.3" x2="53.2" y2="340.4"/><line x1="50.2" y1="339.1" x2="52.4" y2="338.3"/><line x1="49.4" y1="337.0" x2="51.5" y2="336.1"/><line x1="48.5" y1="334.9" x2="50.6" y2="334.0"/><line x1="47.6" y1="332.7" x2="49.8" y2="331.9"/><line x1="46.8" y1="330.6" x2="48.9" y2="329.7"/><line x1="46.0" y1="325.6" x2="47.8" y2="325.5"/><line x1="45.9" y1="323.2" x2="47.7" y2="323.1"/><line x1="45.8" y1="320.7" x2="47.6" y2="320.6"/><line x1="45.7" y1="318.3" x2="47.5" y2="318.2"/><line x1="45.5" y1="315.8" x2="47.3" y2="315.7"/><line x1="45.4" y1="313.4" x2="47.2" y2="313.3"/><line x1="45.3" y1="310.9" x2="47.1" y2="310.8"/><line x1="45.2" y1="308.5" x2="47.0" y2="308.4"/><line x1="103.2" y1="354.2" x2="105.5" y2="355.8"/><line x1="104.5" y1="352.2" x2="106.8" y2="353.8"/><line x1="105.8" y1="350.2" x2="108.2" y2="351.8"/><line x1="107.2" y1="348.2" x2="109.5" y2="349.8"/><line x1="108.5" y1="346.2" x2="110.8" y2="347.8"/><line x1="111.3" y1="342.3" x2="113.3" y2="343.4"/><line x1="112.6" y1="340.1" x2="114.6" y2="341.3"/><line x1="113.9" y1="338.0" x2="115.8" y2="339.2"/><line x1="115.2" y1="335.8" x2="117.1" y2="337.0"/><line x1="116.4" y1="333.7" x2="118.4" y2="334.9"/><line x1="117.7" y1="331.6" x2="119.7" y2="332.7"/><line x1="119.8" y1="327.3" x2="121.6" y2="327.9"/><line x1="120.5" y1="324.9" x2="122.3" y2="325.5"/><line x1="121.2" y1="322.5" x2="123.0" y2="323.1"/><line x1="121.9" y1="320.1" x2="123.7" y2="320.7"/><line x1="122.6" y1="317.7" x2="124.4" y2="318.3"/><line x1="123.3" y1="315.3" x2="125.1" y2="315.9"/><line x1="124.0" y1="312.9" x2="125.8" y2="313.5"/><line x1="124.7" y1="310.5" x2="126.5" y2="311.1"/><line x1="125.4" y1="308.1" x2="127.2" y2="308.7"/></g><g fill="#d8103c" stroke="#30109c" stroke-width="1.25" stroke-linejoin="miter"><polygon points="42.7,300.6 50.7,300.6 46.7,307.9"/><polygon points="58.2,303.9 66.2,303.9 62.2,311.2"/><polygon points="72.7,335.5 80.7,335.5 76.7,342.8"/><polygon points="56.0,342.8 64.0,342.8 60.0,350.1"/><polygon points="38.2,349.5 46.2,349.5 42.2,356.8"/><polygon points="24.9,353.9 32.9,353.9 28.9,361.2"/><polygon points="19.3,373.9 27.3,373.9 23.3,381.2"/><polygon points="15.6,382.2 23.6,382.2 19.6,389.5"/><polygon points="31.6,380.6 39.6,380.6 35.6,387.9"/><polygon points="51.1,387.3 59.1,387.3 55.1,394.6"/><polygon points="47.6,397.7 55.6,397.7 51.6,405.0"/><polygon points="23.8,404.4 31.8,404.4 27.8,411.7"/><polygon points="60.0,407.9 68.0,407.9 64.0,415.2"/><polygon points="59.3,425.1 67.3,425.1 63.3,432.4"/><polygon points="88.2,423.5 96.2,423.5 92.2,430.8"/><polygon points="93.8,413.9 101.8,413.9 97.8,421.2"/><polygon points="92.7,345.1 100.7,345.1 96.7,352.4"/><polygon points="106.4,348.8 114.4,348.8 110.4,356.1"/><polygon points="103.8,373.9 111.8,373.9 107.8,381.2"/><polygon points="126.4,370.6 134.4,370.6 130.4,377.9"/><polygon points="127.8,382.2 135.8,382.2 131.8,389.5"/><polygon points="144.9,381.3 152.9,381.3 148.9,388.6"/><polygon points="116.0,385.7 124.0,385.7 120.0,393.0"/><polygon points="100.4,391.1 108.4,391.1 104.4,398.4"/><polygon points="129.3,391.1 137.3,391.1 133.3,398.4"/><polygon points="102.7,397.7 110.7,397.7 106.7,405.0"/><polygon points="113.8,397.7 121.8,397.7 117.8,405.0"/><polygon points="128.2,399.9 136.2,399.9 132.2,407.2"/><polygon points="118.9,405.1 126.9,405.1 122.9,412.4"/><polygon points="140.4,403.9 148.4,403.9 144.4,411.2"/><polygon points="123.3,416.8 131.3,416.8 127.3,424.1"/><polygon points="132.2,417.7 140.2,417.7 136.2,425.0"/><polygon points="104.9,424.4 112.9,424.4 108.9,431.7"/></g><g fill="#ef5c1c" stroke="#5c1c48" stroke-width="0.8" stroke-linejoin="miter"><polygon points="91.8,254.2 95.9,261.6 87.7,261.6"/><polygon points="81.1,270.2 85.2,277.6 77.0,277.6"/><polygon points="86.7,279.5 90.8,286.9 82.6,286.9"/><polygon points="84.0,300.2 88.1,307.6 79.9,307.6"/><polygon points="37.3,305.3 41.4,312.7 33.2,312.7"/><polygon points="36.0,312.9 40.1,320.3 31.9,320.3"/><polygon points="26.7,314.7 30.8,322.1 22.6,322.1"/><polygon points="61.1,311.3 65.2,318.7 57.0,318.7"/><polygon points="58.9,318.7 63.0,326.1 54.8,326.1"/><polygon points="78.2,312.0 82.3,319.4 74.1,319.4"/><polygon points="83.3,320.9 87.4,328.3 79.2,328.3"/><polygon points="32.2,320.9 36.3,328.3 28.1,328.3"/><polygon points="47.8,325.3 51.9,332.7 43.7,332.7"/><polygon points="109.6,306.2 113.7,313.6 105.5,313.6"/><polygon points="130.0,306.2 134.1,313.6 125.9,313.6"/><polygon points="121.6,314.2 125.7,321.6 117.5,321.6"/><polygon points="111.1,316.9 115.2,324.3 107.0,324.3"/><polygon points="132.2,318.0 136.3,325.4 128.1,325.4"/><polygon points="140.0,320.9 144.1,328.3 135.9,328.3"/><polygon points="104.4,322.4 108.5,329.8 100.3,329.8"/><polygon points="114.9,324.7 119.0,332.1 110.8,332.1"/><polygon points="147.3,326.9 151.4,334.3 143.2,334.3"/><polygon points="112.2,331.3 116.3,338.7 108.1,338.7"/><polygon points="128.9,332.4 133.0,339.8 124.8,339.8"/><polygon points="121.1,335.8 125.2,343.2 117.0,343.2"/><polygon points="141.1,335.1 145.2,342.5 137.0,342.5"/><polygon points="152.7,335.8 156.8,343.2 148.6,343.2"/><polygon points="49.3,352.9 53.4,360.3 45.2,360.3"/><polygon points="67.8,352.9 71.9,360.3 63.7,360.3"/><polygon points="28.4,362.4 32.5,369.8 24.3,369.8"/><polygon points="61.8,369.8 65.9,377.2 57.7,377.2"/><polygon points="86.7,340.1 90.8,347.5 82.6,347.5"/><polygon points="115.6,341.8 119.7,349.2 111.5,349.2"/><polygon points="131.8,342.4 135.9,349.8 127.7,349.8"/><polygon points="122.2,346.2 126.3,353.6 118.1,353.6"/><polygon points="134.0,350.2 138.1,357.6 129.9,357.6"/><polygon points="142.2,348.4 146.3,355.8 138.1,355.8"/><polygon points="152.7,344.7 156.8,352.1 148.6,352.1"/><polygon points="101.1,352.9 105.2,360.3 97.0,360.3"/><polygon points="106.7,360.9 110.8,368.3 102.6,368.3"/><polygon points="123.3,360.9 127.4,368.3 119.2,368.3"/><polygon points="148.2,360.2 152.3,367.6 144.1,367.6"/><polygon points="116.2,433.5 120.3,440.9 112.1,440.9"/></g><g fill="#fbe812" stroke="#7c5c14" stroke-width="0.8"><polygon points="72.3,255.2 74.5,251.1 78.9,251.1 81.1,255.2 78.9,259.3 74.5,259.3"/><polygon points="76.0,295.2 78.2,291.1 82.6,291.1 84.8,295.2 82.6,299.3 78.2,299.3"/><polygon points="41.2,316.3 43.4,312.2 47.8,312.2 50.0,316.3 47.8,320.4 43.4,320.4"/><polygon points="35.2,328.6 37.4,324.5 41.8,324.5 44.0,328.6 41.8,332.7 37.4,332.7"/><polygon points="15.2,329.7 17.4,325.6 21.8,325.6 24.0,329.7 21.8,333.8 17.4,333.8"/><polygon points="16.0,338.6 18.2,334.5 22.6,334.5 24.8,338.6 22.6,342.7 18.2,342.7"/><polygon points="26.7,336.8 28.9,332.7 33.3,332.7 35.5,336.8 33.3,340.9 28.9,340.9"/><polygon points="71.6,331.4 73.8,327.3 78.2,327.3 80.4,331.4 78.2,335.5 73.8,335.5"/><polygon points="112.7,304.1 114.9,300.0 119.3,300.0 121.5,304.1 119.3,308.2 114.9,308.2"/><polygon points="32.3,369.7 34.5,365.6 38.9,365.6 41.1,369.7 38.9,373.8 34.5,373.8"/><polygon points="39.6,366.3 41.8,362.2 46.2,362.2 48.4,366.3 46.2,370.4 41.8,370.4"/><polygon points="50.7,368.6 52.9,364.5 57.3,364.5 59.5,368.6 57.3,372.7 52.9,372.7"/><polygon points="60.5,364.8 62.7,360.7 67.1,360.7 69.3,364.8 67.1,368.9 62.7,368.9"/><polygon points="136.3,370.1 138.5,366.0 142.9,366.0 145.1,370.1 142.9,374.2 138.5,374.2"/><polygon points="112.3,378.1 114.5,374.0 118.9,374.0 121.1,378.1 118.9,382.2 114.5,382.2"/><polygon points="105.6,413.7 107.8,409.6 112.2,409.6 114.4,413.7 112.2,417.8 107.8,417.8"/></g></svg>
<svg class="abs" style="left:241px;top:244px" width="199" height="199" viewBox="-19 244 199 199"><defs><linearGradient id="lx2" x1="0" x2="1"><stop offset="0" stop-color="#8a9494"/><stop offset="0.3" stop-color="#d4dada"/><stop offset="0.5" stop-color="#a8b0b0"/><stop offset="0.7" stop-color="#d8dede"/><stop offset="1" stop-color="#8e9898"/></linearGradient>
<linearGradient id="tr2" x1="0" x2="1"><stop offset="0" stop-color="#727c7c"/><stop offset="0.3" stop-color="#e6eaea"/><stop offset="0.65" stop-color="#f6f8f8"/><stop offset="1" stop-color="#7e8888"/></linearGradient>
<pattern id="rings2" width="11" height="4" patternUnits="userSpaceOnUse" patternTransform="rotate(-8)"><rect y="2.2" width="11" height="1.6" fill="#5e6868" opacity="0.9"/></pattern></defs>
<path d="M78.5,272 L89.5,272 L87,305 L82,336 L72,338 L76,305 Z" fill="url(#tr2)"/>
<path d="M78.5,272 L89.5,272 L87,305 L82,336 L72,338 L76,305 Z" fill="url(#rings2)"/>
<path d="M72.6,252.5 Q78,249.5 84.5,252.5 Q91,249.5 96.8,252.5 L95.5,262 L92.6,272.5 L84,267.5 L75.4,272.5 L73.6,262 Z" fill="url(#lx2)"/>
<path d="M75.2,272 L83.6,266.8 L92.4,272.5" stroke="#263030" stroke-width="1.2" fill="none"/><g stroke="#7a8684" stroke-linecap="round" fill="none"><line x1="76.0" y1="338.0" x2="66.0" y2="350.0" stroke-width="7.20"/><line x1="66.0" y1="350.0" x2="60.0" y2="368.0" stroke-width="6.27"/><line x1="60.0" y1="368.0" x2="56.0" y2="388.0" stroke-width="5.33"/><line x1="56.0" y1="388.0" x2="54.0" y2="404.0" stroke-width="4.40"/><line x1="80.0" y1="338.0" x2="92.0" y2="347.0" stroke-width="7.20"/><line x1="92.0" y1="347.0" x2="103.0" y2="357.0" stroke-width="6.50"/><line x1="103.0" y1="357.0" x2="107.0" y2="373.0" stroke-width="5.80"/><line x1="107.0" y1="373.0" x2="105.0" y2="392.0" stroke-width="5.10"/><line x1="105.0" y1="392.0" x2="102.0" y2="408.0" stroke-width="4.40"/><line x1="64.0" y1="347.0" x2="53.0" y2="343.0" stroke-width="4.40"/><line x1="53.0" y1="343.0" x2="47.0" y2="328.0" stroke-width="3.90"/><line x1="47.0" y1="328.0" x2="46.0" y2="306.0" stroke-width="3.40"/><line x1="103.0" y1="357.0" x2="111.0" y2="345.0" stroke-width="4.40"/><line x1="111.0" y1="345.0" x2="120.0" y2="330.0" stroke-width="3.90"/><line x1="120.0" y1="330.0" x2="127.0" y2="306.0" stroke-width="3.40"/><line x1="53.0" y1="343.0" x2="43.2" y2="341.0" stroke-width="1.90"/><line x1="43.2" y1="341.0" x2="35.4" y2="343.2" stroke-width="1.53"/><line x1="35.4" y1="343.2" x2="30.9" y2="347.4" stroke-width="1.23"/><line x1="30.9" y1="347.4" x2="29.0" y2="351.8" stroke-width="1.01"/><line x1="29.0" y1="351.8" x2="30.0" y2="355.1" stroke-width="0.83"/><line x1="30.0" y1="355.1" x2="31.5" y2="357.3" stroke-width="0.70"/><line x1="30.0" y1="355.1" x2="30.1" y2="357.4" stroke-width="0.70"/><line x1="29.0" y1="351.8" x2="26.1" y2="353.7" stroke-width="0.83"/><line x1="26.1" y1="353.7" x2="25.1" y2="356.2" stroke-width="0.70"/><line x1="26.1" y1="353.7" x2="23.3" y2="353.2" stroke-width="0.70"/><line x1="30.9" y1="347.4" x2="26.5" y2="348.7" stroke-width="1.01"/><line x1="26.5" y1="348.7" x2="24.3" y2="351.6" stroke-width="0.83"/><line x1="24.3" y1="351.6" x2="24.5" y2="354.2" stroke-width="0.70"/><line x1="24.3" y1="351.6" x2="21.5" y2="352.4" stroke-width="0.70"/><line x1="26.5" y1="348.7" x2="23.4" y2="348.0" stroke-width="0.83"/><line x1="23.4" y1="348.0" x2="20.9" y2="348.7" stroke-width="0.70"/><line x1="23.4" y1="348.0" x2="21.2" y2="346.8" stroke-width="0.70"/><line x1="35.4" y1="343.2" x2="29.8" y2="341.4" stroke-width="1.23"/><line x1="29.8" y1="341.4" x2="25.9" y2="343.1" stroke-width="1.01"/><line x1="25.9" y1="343.1" x2="24.1" y2="345.5" stroke-width="0.83"/><line x1="24.1" y1="345.5" x2="24.4" y2="347.6" stroke-width="0.70"/><line x1="24.1" y1="345.5" x2="22.1" y2="346.1" stroke-width="0.70"/><line x1="25.9" y1="343.1" x2="22.5" y2="342.2" stroke-width="0.83"/><line x1="22.5" y1="342.2" x2="19.8" y2="343.0" stroke-width="0.70"/><line x1="22.5" y1="342.2" x2="20.1" y2="340.8" stroke-width="0.70"/><line x1="29.8" y1="341.4" x2="27.8" y2="337.8" stroke-width="1.01"/><line x1="27.8" y1="337.8" x2="24.8" y2="336.4" stroke-width="0.83"/><line x1="24.8" y1="336.4" x2="22.5" y2="336.8" stroke-width="0.70"/><line x1="24.8" y1="336.4" x2="23.5" y2="334.4" stroke-width="0.70"/><line x1="27.8" y1="337.8" x2="27.6" y2="334.8" stroke-width="0.83"/><line x1="27.6" y1="334.8" x2="26.6" y2="333.0" stroke-width="0.70"/><line x1="27.6" y1="334.8" x2="28.4" y2="332.9" stroke-width="0.70"/><line x1="43.2" y1="341.0" x2="36.6" y2="337.1" stroke-width="1.53"/><line x1="36.6" y1="337.1" x2="31.1" y2="336.5" stroke-width="1.23"/><line x1="31.1" y1="336.5" x2="27.7" y2="339.1" stroke-width="1.01"/><line x1="27.7" y1="339.1" x2="26.3" y2="342.0" stroke-width="0.83"/><line x1="26.3" y1="342.0" x2="26.3" y2="344.7" stroke-width="0.70"/><line x1="26.3" y1="342.0" x2="23.9" y2="343.2" stroke-width="0.70"/><line x1="27.7" y1="339.1" x2="24.6" y2="339.8" stroke-width="0.83"/><line x1="24.6" y1="339.8" x2="22.7" y2="341.5" stroke-width="0.70"/><line x1="24.6" y1="339.8" x2="22.1" y2="339.0" stroke-width="0.70"/><line x1="31.1" y1="336.5" x2="28.0" y2="333.5" stroke-width="1.01"/><line x1="28.0" y1="333.5" x2="25.1" y2="333.3" stroke-width="0.83"/><line x1="25.1" y1="333.3" x2="23.1" y2="334.0" stroke-width="0.70"/><line x1="25.1" y1="333.3" x2="23.0" y2="332.3" stroke-width="0.70"/><line x1="28.0" y1="333.5" x2="27.3" y2="330.3" stroke-width="0.83"/><line x1="27.3" y1="330.3" x2="25.6" y2="328.6" stroke-width="0.70"/><line x1="27.3" y1="330.3" x2="27.6" y2="327.9" stroke-width="0.70"/><line x1="36.6" y1="337.1" x2="33.2" y2="332.0" stroke-width="1.23"/><line x1="33.2" y1="332.0" x2="29.2" y2="330.7" stroke-width="1.01"/><line x1="29.2" y1="330.7" x2="26.3" y2="330.5" stroke-width="0.83"/><line x1="26.3" y1="330.5" x2="24.4" y2="331.4" stroke-width="0.70"/><line x1="26.3" y1="330.5" x2="24.7" y2="329.1" stroke-width="0.70"/><line x1="29.2" y1="330.7" x2="26.6" y2="328.4" stroke-width="0.83"/><line x1="26.6" y1="328.4" x2="24.3" y2="328.1" stroke-width="0.70"/><line x1="26.6" y1="328.4" x2="25.9" y2="326.1" stroke-width="0.70"/><line x1="33.2" y1="332.0" x2="33.3" y2="327.1" stroke-width="1.01"/><line x1="33.3" y1="327.1" x2="30.7" y2="324.2" stroke-width="0.83"/><line x1="30.7" y1="324.2" x2="27.8" y2="323.7" stroke-width="0.70"/><line x1="30.7" y1="324.2" x2="30.4" y2="321.0" stroke-width="0.70"/><line x1="33.3" y1="327.1" x2="35.7" y2="324.2" stroke-width="0.83"/><line x1="35.7" y1="324.2" x2="36.8" y2="321.4" stroke-width="0.70"/><line x1="35.7" y1="324.2" x2="38.2" y2="323.2" stroke-width="0.70"/><line x1="49.0" y1="334.0" x2="41.1" y2="327.9" stroke-width="1.90"/><line x1="41.1" y1="327.9" x2="34.7" y2="325.2" stroke-width="1.53"/><line x1="34.7" y1="325.2" x2="30.0" y2="326.7" stroke-width="1.23"/><line x1="30.0" y1="326.7" x2="28.0" y2="329.6" stroke-width="1.01"/><line x1="28.0" y1="329.6" x2="27.6" y2="332.4" stroke-width="0.83"/><line x1="27.6" y1="332.4" x2="28.2" y2="334.4" stroke-width="0.70"/><line x1="27.6" y1="332.4" x2="26.1" y2="333.9" stroke-width="0.70"/><line x1="28.0" y1="329.6" x2="25.4" y2="330.6" stroke-width="0.83"/><line x1="25.4" y1="330.6" x2="23.6" y2="332.1" stroke-width="0.70"/><line x1="25.4" y1="330.6" x2="23.5" y2="330.5" stroke-width="0.70"/><line x1="30.0" y1="326.7" x2="26.2" y2="325.5" stroke-width="1.01"/><line x1="26.2" y1="325.5" x2="23.4" y2="325.7" stroke-width="0.83"/><line x1="23.4" y1="325.7" x2="21.6" y2="326.9" stroke-width="0.70"/><line x1="23.4" y1="325.7" x2="21.6" y2="324.6" stroke-width="0.70"/><line x1="26.2" y1="325.5" x2="23.8" y2="324.2" stroke-width="0.83"/><line x1="23.8" y1="324.2" x2="21.9" y2="323.9" stroke-width="0.70"/><line x1="23.8" y1="324.2" x2="22.7" y2="322.6" stroke-width="0.70"/><line x1="34.7" y1="325.2" x2="32.1" y2="321.2" stroke-width="1.23"/><line x1="32.1" y1="321.2" x2="29.1" y2="319.0" stroke-width="1.01"/><line x1="29.1" y1="319.0" x2="26.3" y2="318.4" stroke-width="0.83"/><line x1="26.3" y1="318.4" x2="24.3" y2="319.4" stroke-width="0.70"/><line x1="26.3" y1="318.4" x2="24.6" y2="316.8" stroke-width="0.70"/><line x1="29.1" y1="319.0" x2="27.5" y2="316.5" stroke-width="0.83"/><line x1="27.5" y1="316.5" x2="25.8" y2="315.3" stroke-width="0.70"/><line x1="27.5" y1="316.5" x2="27.6" y2="314.1" stroke-width="0.70"/><line x1="32.1" y1="321.2" x2="31.3" y2="317.9" stroke-width="1.01"/><line x1="31.3" y1="317.9" x2="29.5" y2="316.1" stroke-width="0.83"/><line x1="29.5" y1="316.1" x2="27.8" y2="315.6" stroke-width="0.70"/><line x1="29.5" y1="316.1" x2="28.8" y2="314.5" stroke-width="0.70"/><line x1="31.3" y1="317.9" x2="31.6" y2="315.5" stroke-width="0.83"/><line x1="31.6" y1="315.5" x2="30.6" y2="313.8" stroke-width="0.70"/><line x1="31.6" y1="315.5" x2="32.5" y2="314.0" stroke-width="0.70"/><line x1="41.1" y1="327.9" x2="37.8" y2="320.9" stroke-width="1.53"/><line x1="37.8" y1="320.9" x2="33.4" y2="317.3" stroke-width="1.23"/><line x1="33.4" y1="317.3" x2="29.3" y2="316.7" stroke-width="1.01"/><line x1="29.3" y1="316.7" x2="26.3" y2="318.0" stroke-width="0.83"/><line x1="26.3" y1="318.0" x2="25.0" y2="320.3" stroke-width="0.70"/><line x1="26.3" y1="318.0" x2="24.1" y2="317.5" stroke-width="0.70"/><line x1="29.3" y1="316.7" x2="27.2" y2="314.6" stroke-width="0.83"/><line x1="27.2" y1="314.6" x2="25.1" y2="314.2" stroke-width="0.70"/><line x1="27.2" y1="314.6" x2="27.0" y2="312.3" stroke-width="0.70"/><line x1="33.4" y1="317.3" x2="32.0" y2="313.2" stroke-width="1.01"/><line x1="32.0" y1="313.2" x2="29.9" y2="311.0" stroke-width="0.83"/><line x1="29.9" y1="311.0" x2="27.5" y2="310.1" stroke-width="0.70"/><line x1="29.9" y1="311.0" x2="29.0" y2="308.7" stroke-width="0.70"/><line x1="32.0" y1="313.2" x2="31.9" y2="310.1" stroke-width="0.83"/><line x1="31.9" y1="310.1" x2="30.8" y2="307.9" stroke-width="0.70"/><line x1="31.9" y1="310.1" x2="32.6" y2="307.9" stroke-width="0.70"/><line x1="37.8" y1="320.9" x2="37.2" y2="315.5" stroke-width="1.23"/><line x1="37.2" y1="315.5" x2="34.8" y2="311.9" stroke-width="1.01"/><line x1="34.8" y1="311.9" x2="32.1" y2="309.9" stroke-width="0.83"/><line x1="32.1" y1="309.9" x2="29.6" y2="308.7" stroke-width="0.70"/><line x1="32.1" y1="309.9" x2="30.6" y2="307.8" stroke-width="0.70"/><line x1="34.8" y1="311.9" x2="34.5" y2="308.9" stroke-width="0.83"/><line x1="34.5" y1="308.9" x2="33.3" y2="307.2" stroke-width="0.70"/><line x1="34.5" y1="308.9" x2="35.5" y2="306.9" stroke-width="0.70"/><line x1="37.2" y1="315.5" x2="38.8" y2="311.5" stroke-width="1.01"/><line x1="38.8" y1="311.5" x2="38.2" y2="308.1" stroke-width="0.83"/><line x1="38.2" y1="308.1" x2="36.6" y2="306.1" stroke-width="0.70"/><line x1="38.2" y1="308.1" x2="39.4" y2="305.9" stroke-width="0.70"/><line x1="38.8" y1="311.5" x2="40.7" y2="309.1" stroke-width="0.83"/><line x1="40.7" y1="309.1" x2="41.2" y2="307.0" stroke-width="0.70"/><line x1="40.7" y1="309.1" x2="42.8" y2="308.2" stroke-width="0.70"/><line x1="47.0" y1="326.0" x2="51.0" y2="318.0" stroke-width="1.73"/><line x1="51.0" y1="318.0" x2="50.9" y2="310.8" stroke-width="1.39"/><line x1="50.9" y1="310.8" x2="48.5" y2="306.3" stroke-width="1.13"/><line x1="48.5" y1="306.3" x2="45.1" y2="304.2" stroke-width="0.93"/><line x1="45.1" y1="304.2" x2="41.8" y2="303.8" stroke-width="0.77"/><line x1="45.1" y1="304.2" x2="43.5" y2="302.0" stroke-width="0.77"/><line x1="48.5" y1="306.3" x2="48.7" y2="302.7" stroke-width="0.93"/><line x1="48.7" y1="302.7" x2="47.9" y2="301.6" stroke-width="0.77"/><line x1="50.9" y1="310.8" x2="53.4" y2="305.8" stroke-width="1.13"/><line x1="51.0" y1="318.0" x2="57.0" y2="313.8" stroke-width="1.39"/><line x1="57.0" y1="313.8" x2="58.4" y2="311.6" stroke-width="1.13"/><line x1="58.4" y1="311.6" x2="58.6" y2="310.6" stroke-width="0.93"/><line x1="58.6" y1="310.6" x2="58.1" y2="309.9" stroke-width="0.77"/><line x1="57.0" y1="313.8" x2="59.6" y2="313.6" stroke-width="1.13"/><line x1="59.6" y1="313.6" x2="60.3" y2="313.1" stroke-width="0.93"/><line x1="59.6" y1="313.6" x2="61.3" y2="314.6" stroke-width="0.93"/><line x1="46.0" y1="308.0" x2="43.0" y2="300.6" stroke-width="1.73"/><line x1="46.0" y1="308.0" x2="47.5" y2="304.3" stroke-width="1.73"/><line x1="47.5" y1="304.3" x2="47.1" y2="301.5" stroke-width="1.39"/><line x1="47.5" y1="304.3" x2="50.1" y2="302.3" stroke-width="1.39"/><line x1="58.0" y1="346.0" x2="57.3" y2="339.0" stroke-width="1.56"/><line x1="57.3" y1="339.0" x2="53.5" y2="335.0" stroke-width="1.26"/><line x1="53.5" y1="335.0" x2="49.4" y2="333.3" stroke-width="1.03"/><line x1="49.4" y1="333.3" x2="45.8" y2="333.7" stroke-width="0.85"/><line x1="45.8" y1="333.7" x2="43.6" y2="335.4" stroke-width="0.70"/><line x1="45.8" y1="333.7" x2="43.6" y2="332.3" stroke-width="0.70"/><line x1="49.4" y1="333.3" x2="47.3" y2="331.0" stroke-width="0.85"/><line x1="47.3" y1="331.0" x2="45.1" y2="329.7" stroke-width="0.70"/><line x1="47.3" y1="331.0" x2="46.2" y2="329.0" stroke-width="0.70"/><line x1="53.5" y1="335.0" x2="52.4" y2="331.2" stroke-width="1.03"/><line x1="52.4" y1="331.2" x2="50.2" y2="329.1" stroke-width="0.85"/><line x1="50.2" y1="329.1" x2="47.8" y2="328.3" stroke-width="0.70"/><line x1="50.2" y1="329.1" x2="49.3" y2="326.7" stroke-width="0.70"/><line x1="52.4" y1="331.2" x2="52.7" y2="328.2" stroke-width="0.85"/><line x1="52.7" y1="328.2" x2="51.7" y2="326.1" stroke-width="0.70"/><line x1="52.7" y1="328.2" x2="54.3" y2="326.5" stroke-width="0.70"/><line x1="57.3" y1="339.0" x2="60.4" y2="334.8" stroke-width="1.26"/><line x1="60.4" y1="334.8" x2="61.3" y2="331.1" stroke-width="1.03"/><line x1="61.3" y1="331.1" x2="60.3" y2="328.4" stroke-width="0.85"/><line x1="60.3" y1="328.4" x2="58.9" y2="326.4" stroke-width="0.70"/><line x1="60.3" y1="328.4" x2="60.2" y2="326.1" stroke-width="0.70"/><line x1="61.3" y1="331.1" x2="63.4" y2="328.9" stroke-width="0.85"/><line x1="63.4" y1="328.9" x2="64.3" y2="326.9" stroke-width="0.70"/><line x1="63.4" y1="328.9" x2="65.2" y2="327.8" stroke-width="0.70"/><line x1="60.4" y1="334.8" x2="63.8" y2="332.9" stroke-width="1.03"/><line x1="63.8" y1="332.9" x2="65.8" y2="330.6" stroke-width="0.85"/><line x1="65.8" y1="330.6" x2="65.9" y2="328.3" stroke-width="0.70"/><line x1="65.8" y1="330.6" x2="68.2" y2="330.2" stroke-width="0.70"/><line x1="63.8" y1="332.9" x2="66.6" y2="332.7" stroke-width="0.85"/><line x1="66.6" y1="332.7" x2="68.4" y2="331.7" stroke-width="0.70"/><line x1="66.6" y1="332.7" x2="68.5" y2="333.6" stroke-width="0.70"/><line x1="61.0" y1="362.0" x2="49.1" y2="360.2" stroke-width="2.07"/><line x1="49.1" y1="360.2" x2="41.4" y2="364.5" stroke-width="1.66"/><line x1="41.4" y1="364.5" x2="38.6" y2="369.9" stroke-width="1.34"/><line x1="38.6" y1="369.9" x2="38.7" y2="374.2" stroke-width="1.09"/><line x1="38.7" y1="374.2" x2="40.7" y2="377.0" stroke-width="0.89"/><line x1="40.7" y1="377.0" x2="43.1" y2="378.2" stroke-width="0.74"/><line x1="40.7" y1="377.0" x2="41.5" y2="379.4" stroke-width="0.74"/><line x1="38.7" y1="374.2" x2="37.8" y2="377.2" stroke-width="0.89"/><line x1="37.8" y1="377.2" x2="38.0" y2="379.3" stroke-width="0.74"/><line x1="37.8" y1="377.2" x2="36.3" y2="379.1" stroke-width="0.74"/><line x1="38.6" y1="369.9" x2="34.4" y2="372.8" stroke-width="1.09"/><line x1="34.4" y1="372.8" x2="32.4" y2="376.2" stroke-width="0.89"/><line x1="32.4" y1="376.2" x2="31.6" y2="379.2" stroke-width="0.74"/><line x1="32.4" y1="376.2" x2="29.9" y2="378.3" stroke-width="0.74"/><line x1="34.4" y1="372.8" x2="30.6" y2="372.7" stroke-width="0.89"/><line x1="30.6" y1="372.7" x2="28.2" y2="373.9" stroke-width="0.74"/><line x1="30.6" y1="372.7" x2="28.5" y2="371.0" stroke-width="0.74"/><line x1="41.4" y1="364.5" x2="35.4" y2="363.9" stroke-width="1.34"/><line x1="35.4" y1="363.9" x2="30.7" y2="365.6" stroke-width="1.09"/><line x1="30.7" y1="365.6" x2="28.5" y2="368.5" stroke-width="0.89"/><line x1="28.5" y1="368.5" x2="28.1" y2="371.1" stroke-width="0.74"/><line x1="28.5" y1="368.5" x2="26.2" y2="369.7" stroke-width="0.74"/><line x1="30.7" y1="365.6" x2="26.9" y2="364.7" stroke-width="0.89"/><line x1="26.9" y1="364.7" x2="24.2" y2="364.9" stroke-width="0.74"/><line x1="26.9" y1="364.7" x2="24.5" y2="362.9" stroke-width="0.74"/><line x1="35.4" y1="363.9" x2="31.3" y2="362.0" stroke-width="1.09"/><line x1="31.3" y1="362.0" x2="27.9" y2="361.8" stroke-width="0.89"/><line x1="27.9" y1="361.8" x2="25.4" y2="363.1" stroke-width="0.74"/><line x1="27.9" y1="361.8" x2="25.6" y2="360.4" stroke-width="0.74"/><line x1="31.3" y1="362.0" x2="29.3" y2="359.2" stroke-width="0.89"/><line x1="29.3" y1="359.2" x2="27.4" y2="357.7" stroke-width="0.74"/><line x1="29.3" y1="359.2" x2="29.0" y2="356.6" stroke-width="0.74"/><line x1="49.1" y1="360.2" x2="42.7" y2="353.8" stroke-width="1.66"/><line x1="42.7" y1="353.8" x2="35.5" y2="353.5" stroke-width="1.34"/><line x1="35.5" y1="353.5" x2="29.9" y2="355.4" stroke-width="1.09"/><line x1="29.9" y1="355.4" x2="26.9" y2="358.3" stroke-width="0.89"/><line x1="26.9" y1="358.3" x2="26.1" y2="361.6" stroke-width="0.74"/><line x1="26.9" y1="358.3" x2="23.8" y2="359.8" stroke-width="0.74"/><line x1="29.9" y1="355.4" x2="25.7" y2="355.7" stroke-width="0.89"/><line x1="25.7" y1="355.7" x2="23.2" y2="357.3" stroke-width="0.74"/><line x1="25.7" y1="355.7" x2="23.5" y2="353.7" stroke-width="0.74"/><line x1="35.5" y1="353.5" x2="30.9" y2="351.0" stroke-width="1.09"/><line x1="30.9" y1="351.0" x2="26.8" y2="351.0" stroke-width="0.89"/><line x1="26.8" y1="351.0" x2="23.7" y2="352.1" stroke-width="0.74"/><line x1="26.8" y1="351.0" x2="24.1" y2="350.2" stroke-width="0.74"/><line x1="30.9" y1="351.0" x2="29.6" y2="347.2" stroke-width="0.89"/><line x1="29.6" y1="347.2" x2="27.2" y2="345.0" stroke-width="0.74"/><line x1="29.6" y1="347.2" x2="29.8" y2="344.2" stroke-width="0.74"/><line x1="42.7" y1="353.8" x2="42.2" y2="347.5" stroke-width="1.34"/><line x1="42.2" y1="347.5" x2="40.3" y2="343.4" stroke-width="1.09"/><line x1="40.3" y1="343.4" x2="37.9" y2="341.3" stroke-width="0.89"/><line x1="37.9" y1="341.3" x2="35.8" y2="340.8" stroke-width="0.74"/><line x1="37.9" y1="341.3" x2="37.2" y2="339.0" stroke-width="0.74"/><line x1="40.3" y1="343.4" x2="40.3" y2="339.8" stroke-width="0.89"/><line x1="40.3" y1="339.8" x2="38.8" y2="337.3" stroke-width="0.74"/><line x1="40.3" y1="339.8" x2="41.8" y2="337.4" stroke-width="0.74"/><line x1="42.2" y1="347.5" x2="44.0" y2="343.1" stroke-width="1.09"/><line x1="44.0" y1="343.1" x2="44.2" y2="339.4" stroke-width="0.89"/><line x1="44.2" y1="339.4" x2="43.3" y2="337.0" stroke-width="0.74"/><line x1="44.2" y1="339.4" x2="45.6" y2="336.9" stroke-width="0.74"/><line x1="44.0" y1="343.1" x2="46.1" y2="340.5" stroke-width="0.89"/><line x1="46.1" y1="340.5" x2="46.3" y2="338.1" stroke-width="0.74"/><line x1="46.1" y1="340.5" x2="48.2" y2="339.7" stroke-width="0.74"/><line x1="58.0" y1="378.0" x2="46.1" y2="379.2" stroke-width="2.07"/><line x1="46.1" y1="379.2" x2="38.3" y2="383.4" stroke-width="1.66"/><line x1="38.3" y1="383.4" x2="34.0" y2="387.5" stroke-width="1.34"/><line x1="34.0" y1="387.5" x2="32.2" y2="392.1" stroke-width="1.09"/><line x1="32.2" y1="392.1" x2="32.3" y2="396.0" stroke-width="0.89"/><line x1="32.3" y1="396.0" x2="33.6" y2="398.7" stroke-width="0.74"/><line x1="32.3" y1="396.0" x2="31.6" y2="399.1" stroke-width="0.74"/><line x1="32.2" y1="392.1" x2="29.8" y2="394.9" stroke-width="0.89"/><line x1="29.8" y1="394.9" x2="29.7" y2="397.6" stroke-width="0.74"/><line x1="29.8" y1="394.9" x2="27.3" y2="395.9" stroke-width="0.74"/><line x1="34.0" y1="387.5" x2="29.4" y2="389.0" stroke-width="1.09"/><line x1="29.4" y1="389.0" x2="26.8" y2="391.1" stroke-width="0.89"/><line x1="26.8" y1="391.1" x2="25.9" y2="393.6" stroke-width="0.74"/><line x1="26.8" y1="391.1" x2="24.1" y2="391.8" stroke-width="0.74"/><line x1="29.4" y1="389.0" x2="26.0" y2="388.2" stroke-width="0.89"/><line x1="26.0" y1="388.2" x2="23.7" y2="389.1" stroke-width="0.74"/><line x1="26.0" y1="388.2" x2="24.0" y2="386.8" stroke-width="0.74"/><line x1="38.3" y1="383.4" x2="32.1" y2="384.8" stroke-width="1.34"/><line x1="32.1" y1="384.8" x2="28.6" y2="388.5" stroke-width="1.09"/><line x1="28.6" y1="388.5" x2="27.2" y2="392.0" stroke-width="0.89"/><line x1="27.2" y1="392.0" x2="27.2" y2="394.8" stroke-width="0.74"/><line x1="27.2" y1="392.0" x2="25.2" y2="394.2" stroke-width="0.74"/><line x1="28.6" y1="388.5" x2="25.4" y2="390.1" stroke-width="0.89"/><line x1="25.4" y1="390.1" x2="23.6" y2="392.1" stroke-width="0.74"/><line x1="25.4" y1="390.1" x2="22.9" y2="390.4" stroke-width="0.74"/><line x1="32.1" y1="384.8" x2="27.3" y2="383.9" stroke-width="1.09"/><line x1="27.3" y1="383.9" x2="24.0" y2="385.8" stroke-width="0.89"/><line x1="24.0" y1="385.8" x2="22.2" y2="388.3" stroke-width="0.74"/><line x1="24.0" y1="385.8" x2="21.2" y2="386.1" stroke-width="0.74"/><line x1="27.3" y1="383.9" x2="24.9" y2="381.4" stroke-width="0.89"/><line x1="24.9" y1="381.4" x2="22.5" y2="381.0" stroke-width="0.74"/><line x1="24.9" y1="381.4" x2="24.3" y2="378.8" stroke-width="0.74"/><line x1="46.1" y1="379.2" x2="37.1" y2="378.0" stroke-width="1.66"/><line x1="37.1" y1="378.0" x2="31.1" y2="380.5" stroke-width="1.34"/><line x1="31.1" y1="380.5" x2="28.4" y2="384.4" stroke-width="1.09"/><line x1="28.4" y1="384.4" x2="28.4" y2="387.8" stroke-width="0.89"/><line x1="28.4" y1="387.8" x2="30.0" y2="389.9" stroke-width="0.74"/><line x1="28.4" y1="387.8" x2="26.9" y2="390.0" stroke-width="0.74"/><line x1="28.4" y1="384.4" x2="25.1" y2="385.3" stroke-width="0.89"/><line x1="25.1" y1="385.3" x2="23.7" y2="387.3" stroke-width="0.74"/><line x1="25.1" y1="385.3" x2="22.7" y2="384.5" stroke-width="0.74"/><line x1="31.1" y1="380.5" x2="26.3" y2="380.8" stroke-width="1.09"/><line x1="26.3" y1="380.8" x2="23.1" y2="382.8" stroke-width="0.89"/><line x1="23.1" y1="382.8" x2="21.5" y2="385.4" stroke-width="0.74"/><line x1="23.1" y1="382.8" x2="20.2" y2="382.9" stroke-width="0.74"/><line x1="26.3" y1="380.8" x2="23.1" y2="379.0" stroke-width="0.89"/><line x1="23.1" y1="379.0" x2="20.5" y2="378.6" stroke-width="0.74"/><line x1="23.1" y1="379.0" x2="21.5" y2="377.2" stroke-width="0.74"/><line x1="37.1" y1="378.0" x2="32.2" y2="373.4" stroke-width="1.34"/><line x1="32.2" y1="373.4" x2="27.4" y2="371.1" stroke-width="1.09"/><line x1="27.4" y1="371.1" x2="23.3" y2="371.0" stroke-width="0.89"/><line x1="23.3" y1="371.0" x2="20.7" y2="372.8" stroke-width="0.74"/><line x1="23.3" y1="371.0" x2="20.9" y2="368.9" stroke-width="0.74"/><line x1="27.4" y1="371.1" x2="25.0" y2="368.1" stroke-width="0.89"/><line x1="25.0" y1="368.1" x2="22.7" y2="366.8" stroke-width="0.74"/><line x1="25.0" y1="368.1" x2="24.2" y2="365.3" stroke-width="0.74"/><line x1="32.2" y1="373.4" x2="29.4" y2="369.0" stroke-width="1.09"/><line x1="29.4" y1="369.0" x2="26.0" y2="367.3" stroke-width="0.89"/><line x1="26.0" y1="367.3" x2="23.4" y2="367.1" stroke-width="0.74"/><line x1="26.0" y1="367.3" x2="24.4" y2="364.8" stroke-width="0.74"/><line x1="29.4" y1="369.0" x2="29.3" y2="365.2" stroke-width="0.89"/><line x1="29.3" y1="365.2" x2="27.6" y2="362.6" stroke-width="0.74"/><line x1="29.3" y1="365.2" x2="30.6" y2="362.8" stroke-width="0.74"/><line x1="56.0" y1="394.0" x2="44.4" y2="396.9" stroke-width="2.07"/><line x1="44.4" y1="396.9" x2="37.8" y2="403.1" stroke-width="1.66"/><line x1="37.8" y1="403.1" x2="36.1" y2="409.0" stroke-width="1.34"/><line x1="36.1" y1="409.0" x2="36.0" y2="413.5" stroke-width="1.09"/><line x1="36.0" y1="413.5" x2="37.4" y2="416.5" stroke-width="0.89"/><line x1="37.4" y1="416.5" x2="39.9" y2="417.5" stroke-width="0.74"/><line x1="37.4" y1="416.5" x2="36.9" y2="419.0" stroke-width="0.74"/><line x1="36.0" y1="413.5" x2="34.7" y2="416.8" stroke-width="0.89"/><line x1="34.7" y1="416.8" x2="35.4" y2="419.1" stroke-width="0.74"/><line x1="34.7" y1="416.8" x2="32.6" y2="418.4" stroke-width="0.74"/><line x1="36.1" y1="409.0" x2="32.9" y2="412.6" stroke-width="1.09"/><line x1="32.9" y1="412.6" x2="32.3" y2="416.4" stroke-width="0.89"/><line x1="32.3" y1="416.4" x2="33.5" y2="419.4" stroke-width="0.74"/><line x1="32.3" y1="416.4" x2="30.3" y2="418.1" stroke-width="0.74"/><line x1="32.9" y1="412.6" x2="29.3" y2="413.2" stroke-width="0.89"/><line x1="29.3" y1="413.2" x2="27.5" y2="414.9" stroke-width="0.74"/><line x1="29.3" y1="413.2" x2="26.7" y2="412.4" stroke-width="0.74"/><line x1="37.8" y1="403.1" x2="31.6" y2="405.3" stroke-width="1.34"/><line x1="31.6" y1="405.3" x2="27.8" y2="408.5" stroke-width="1.09"/><line x1="27.8" y1="408.5" x2="26.2" y2="412.1" stroke-width="0.89"/><line x1="26.2" y1="412.1" x2="25.7" y2="414.9" stroke-width="0.74"/><line x1="26.2" y1="412.1" x2="24.1" y2="414.2" stroke-width="0.74"/><line x1="27.8" y1="408.5" x2="24.6" y2="409.5" stroke-width="0.89"/><line x1="24.6" y1="409.5" x2="22.6" y2="410.9" stroke-width="0.74"/><line x1="24.6" y1="409.5" x2="21.9" y2="408.8" stroke-width="0.74"/><line x1="31.6" y1="405.3" x2="26.7" y2="405.0" stroke-width="1.09"/><line x1="26.7" y1="405.0" x2="23.5" y2="406.8" stroke-width="0.89"/><line x1="23.5" y1="406.8" x2="21.8" y2="408.9" stroke-width="0.74"/><line x1="23.5" y1="406.8" x2="20.6" y2="406.9" stroke-width="0.74"/><line x1="26.7" y1="405.0" x2="23.5" y2="402.4" stroke-width="0.89"/><line x1="23.5" y1="402.4" x2="20.9" y2="401.5" stroke-width="0.74"/><line x1="23.5" y1="402.4" x2="22.6" y2="399.3" stroke-width="0.74"/><line x1="44.4" y1="396.9" x2="36.0" y2="394.8" stroke-width="1.66"/><line x1="36.0" y1="394.8" x2="30.0" y2="397.0" stroke-width="1.34"/><line x1="30.0" y1="397.0" x2="27.7" y2="401.1" stroke-width="1.09"/><line x1="27.7" y1="401.1" x2="28.2" y2="404.6" stroke-width="0.89"/><line x1="28.2" y1="404.6" x2="29.9" y2="406.4" stroke-width="0.74"/><line x1="28.2" y1="404.6" x2="27.0" y2="406.7" stroke-width="0.74"/><line x1="27.7" y1="401.1" x2="24.7" y2="402.4" stroke-width="0.89"/><line x1="24.7" y1="402.4" x2="23.0" y2="404.3" stroke-width="0.74"/><line x1="24.7" y1="402.4" x2="22.1" y2="402.3" stroke-width="0.74"/><line x1="30.0" y1="397.0" x2="25.4" y2="396.1" stroke-width="1.09"/><line x1="25.4" y1="396.1" x2="22.1" y2="397.5" stroke-width="0.89"/><line x1="22.1" y1="397.5" x2="20.8" y2="399.6" stroke-width="0.74"/><line x1="22.1" y1="397.5" x2="19.5" y2="397.0" stroke-width="0.74"/><line x1="25.4" y1="396.1" x2="22.7" y2="393.9" stroke-width="0.89"/><line x1="22.7" y1="393.9" x2="20.3" y2="393.0" stroke-width="0.74"/><line x1="22.7" y1="393.9" x2="21.3" y2="391.6" stroke-width="0.74"/><line x1="36.0" y1="394.8" x2="32.2" y2="389.4" stroke-width="1.34"/><line x1="32.2" y1="389.4" x2="28.1" y2="386.6" stroke-width="1.09"/><line x1="28.1" y1="386.6" x2="24.5" y2="386.5" stroke-width="0.89"/><line x1="24.5" y1="386.5" x2="22.0" y2="387.3" stroke-width="0.74"/><line x1="24.5" y1="386.5" x2="22.0" y2="385.6" stroke-width="0.74"/><line x1="28.1" y1="386.6" x2="26.9" y2="382.9" stroke-width="0.89"/><line x1="26.9" y1="382.9" x2="25.0" y2="381.1" stroke-width="0.74"/><line x1="26.9" y1="382.9" x2="27.7" y2="380.2" stroke-width="0.74"/><line x1="32.2" y1="389.4" x2="31.3" y2="384.5" stroke-width="1.09"/><line x1="31.3" y1="384.5" x2="29.3" y2="381.3" stroke-width="0.89"/><line x1="29.3" y1="381.3" x2="26.5" y2="379.8" stroke-width="0.74"/><line x1="29.3" y1="381.3" x2="29.1" y2="378.5" stroke-width="0.74"/><line x1="31.3" y1="384.5" x2="32.1" y2="381.1" stroke-width="0.89"/><line x1="32.1" y1="381.1" x2="31.7" y2="378.8" stroke-width="0.74"/><line x1="32.1" y1="381.1" x2="34.0" y2="379.2" stroke-width="0.74"/><line x1="56.0" y1="406.0" x2="48.4" y2="413.9" stroke-width="1.90"/><line x1="48.4" y1="413.9" x2="46.5" y2="421.2" stroke-width="1.53"/><line x1="46.5" y1="421.2" x2="47.6" y2="426.8" stroke-width="1.23"/><line x1="47.6" y1="426.8" x2="49.5" y2="430.4" stroke-width="1.01"/><line x1="49.5" y1="430.4" x2="52.3" y2="431.8" stroke-width="0.83"/><line x1="52.3" y1="431.8" x2="54.6" y2="431.7" stroke-width="0.70"/><line x1="52.3" y1="431.8" x2="53.9" y2="433.4" stroke-width="0.70"/><line x1="49.5" y1="430.4" x2="49.8" y2="433.7" stroke-width="0.83"/><line x1="49.8" y1="433.7" x2="51.3" y2="435.8" stroke-width="0.70"/><line x1="49.8" y1="433.7" x2="48.5" y2="436.0" stroke-width="0.70"/><line x1="47.6" y1="426.8" x2="47.0" y2="431.4" stroke-width="1.01"/><line x1="47.0" y1="431.4" x2="47.9" y2="434.4" stroke-width="0.83"/><line x1="47.9" y1="434.4" x2="49.7" y2="435.8" stroke-width="0.70"/><line x1="47.9" y1="434.4" x2="47.2" y2="436.9" stroke-width="0.70"/><line x1="47.0" y1="431.4" x2="44.7" y2="433.8" stroke-width="0.83"/><line x1="44.7" y1="433.8" x2="44.1" y2="436.2" stroke-width="0.70"/><line x1="44.7" y1="433.8" x2="42.5" y2="435.0" stroke-width="0.70"/><line x1="46.5" y1="421.2" x2="43.1" y2="425.7" stroke-width="1.23"/><line x1="43.1" y1="425.7" x2="41.8" y2="429.7" stroke-width="1.01"/><line x1="41.8" y1="429.7" x2="42.1" y2="433.1" stroke-width="0.83"/><line x1="42.1" y1="433.1" x2="43.1" y2="435.7" stroke-width="0.70"/><line x1="42.1" y1="433.1" x2="41.3" y2="435.5" stroke-width="0.70"/><line x1="41.8" y1="429.7" x2="40.1" y2="432.2" stroke-width="0.83"/><line x1="40.1" y1="432.2" x2="40.2" y2="434.6" stroke-width="0.70"/><line x1="40.1" y1="432.2" x2="38.1" y2="432.8" stroke-width="0.70"/><line x1="43.1" y1="425.7" x2="39.6" y2="427.3" stroke-width="1.01"/><line x1="39.6" y1="427.3" x2="37.7" y2="429.8" stroke-width="0.83"/><line x1="37.7" y1="429.8" x2="37.9" y2="432.3" stroke-width="0.70"/><line x1="37.7" y1="429.8" x2="35.3" y2="430.7" stroke-width="0.70"/><line x1="39.6" y1="427.3" x2="36.7" y2="427.0" stroke-width="0.83"/><line x1="36.7" y1="427.0" x2="34.9" y2="428.0" stroke-width="0.70"/><line x1="36.7" y1="427.0" x2="35.0" y2="425.9" stroke-width="0.70"/><line x1="48.4" y1="413.9" x2="40.5" y2="416.0" stroke-width="1.53"/><line x1="40.5" y1="416.0" x2="36.1" y2="419.5" stroke-width="1.23"/><line x1="36.1" y1="419.5" x2="35.0" y2="423.2" stroke-width="1.01"/><line x1="35.0" y1="423.2" x2="35.7" y2="426.1" stroke-width="0.83"/><line x1="35.7" y1="426.1" x2="37.4" y2="427.6" stroke-width="0.70"/><line x1="35.7" y1="426.1" x2="34.8" y2="428.1" stroke-width="0.70"/><line x1="35.0" y1="423.2" x2="33.0" y2="425.4" stroke-width="0.83"/><line x1="33.0" y1="425.4" x2="32.8" y2="427.6" stroke-width="0.70"/><line x1="33.0" y1="425.4" x2="30.8" y2="426.1" stroke-width="0.70"/><line x1="36.1" y1="419.5" x2="31.9" y2="419.4" stroke-width="1.01"/><line x1="31.9" y1="419.4" x2="28.9" y2="421.1" stroke-width="0.83"/><line x1="28.9" y1="421.1" x2="27.8" y2="423.4" stroke-width="0.70"/><line x1="28.9" y1="421.1" x2="26.2" y2="421.2" stroke-width="0.70"/><line x1="31.9" y1="419.4" x2="29.2" y2="417.5" stroke-width="0.83"/><line x1="29.2" y1="417.5" x2="26.9" y2="416.7" stroke-width="0.70"/><line x1="29.2" y1="417.5" x2="27.8" y2="415.2" stroke-width="0.70"/><line x1="40.5" y1="416.0" x2="34.1" y2="414.8" stroke-width="1.23"/><line x1="34.1" y1="414.8" x2="30.0" y2="416.8" stroke-width="1.01"/><line x1="30.0" y1="416.8" x2="27.6" y2="419.1" stroke-width="0.83"/><line x1="27.6" y1="419.1" x2="27.0" y2="421.4" stroke-width="0.70"/><line x1="27.6" y1="419.1" x2="25.4" y2="419.7" stroke-width="0.70"/><line x1="30.0" y1="416.8" x2="26.4" y2="417.1" stroke-width="0.83"/><line x1="26.4" y1="417.1" x2="24.3" y2="418.6" stroke-width="0.70"/><line x1="26.4" y1="417.1" x2="24.1" y2="415.7" stroke-width="0.70"/><line x1="34.1" y1="414.8" x2="30.0" y2="411.4" stroke-width="1.01"/><line x1="30.0" y1="411.4" x2="26.3" y2="409.8" stroke-width="0.83"/><line x1="26.3" y1="409.8" x2="23.5" y2="409.3" stroke-width="0.70"/><line x1="26.3" y1="409.8" x2="23.8" y2="407.8" stroke-width="0.70"/><line x1="30.0" y1="411.4" x2="28.4" y2="407.6" stroke-width="0.83"/><line x1="28.4" y1="407.6" x2="25.7" y2="406.0" stroke-width="0.70"/><line x1="28.4" y1="407.6" x2="28.9" y2="404.6" stroke-width="0.70"/><line x1="56.0" y1="416.0" x2="49.3" y2="420.4" stroke-width="1.73"/><line x1="49.3" y1="420.4" x2="47.3" y2="425.9" stroke-width="1.39"/><line x1="47.3" y1="425.9" x2="47.5" y2="430.5" stroke-width="1.13"/><line x1="47.5" y1="430.5" x2="49.5" y2="433.8" stroke-width="0.93"/><line x1="49.5" y1="433.8" x2="51.7" y2="435.1" stroke-width="0.77"/><line x1="49.5" y1="433.8" x2="49.0" y2="436.4" stroke-width="0.77"/><line x1="47.5" y1="430.5" x2="45.3" y2="432.9" stroke-width="0.93"/><line x1="45.3" y1="432.9" x2="44.2" y2="435.1" stroke-width="0.77"/><line x1="45.3" y1="432.9" x2="43.2" y2="434.3" stroke-width="0.77"/><line x1="47.3" y1="425.9" x2="44.5" y2="429.4" stroke-width="1.13"/><line x1="44.5" y1="429.4" x2="43.7" y2="432.8" stroke-width="0.93"/><line x1="43.7" y1="432.8" x2="44.0" y2="435.3" stroke-width="0.77"/><line x1="43.7" y1="432.8" x2="41.9" y2="434.8" stroke-width="0.77"/><line x1="44.5" y1="429.4" x2="41.4" y2="431.4" stroke-width="0.93"/><line x1="41.4" y1="431.4" x2="40.1" y2="433.7" stroke-width="0.77"/><line x1="41.4" y1="431.4" x2="38.7" y2="432.2" stroke-width="0.77"/><line x1="49.3" y1="420.4" x2="42.9" y2="421.2" stroke-width="1.39"/><line x1="42.9" y1="421.2" x2="39.8" y2="424.4" stroke-width="1.13"/><line x1="39.8" y1="424.4" x2="38.9" y2="427.5" stroke-width="0.93"/><line x1="38.9" y1="427.5" x2="39.7" y2="429.8" stroke-width="0.77"/><line x1="38.9" y1="427.5" x2="37.0" y2="429.1" stroke-width="0.77"/><line x1="39.8" y1="424.4" x2="36.1" y2="424.6" stroke-width="0.93"/><line x1="36.1" y1="424.6" x2="33.7" y2="425.6" stroke-width="0.77"/><line x1="36.1" y1="424.6" x2="33.6" y2="423.3" stroke-width="0.77"/><line x1="42.9" y1="421.2" x2="39.4" y2="418.4" stroke-width="1.13"/><line x1="39.4" y1="418.4" x2="36.4" y2="417.8" stroke-width="0.93"/><line x1="36.4" y1="417.8" x2="34.4" y2="418.4" stroke-width="0.77"/><line x1="36.4" y1="417.8" x2="34.9" y2="416.2" stroke-width="0.77"/><line x1="39.4" y1="418.4" x2="37.9" y2="415.7" stroke-width="0.93"/><line x1="37.9" y1="415.7" x2="36.1" y2="414.3" stroke-width="0.77"/><line x1="37.9" y1="415.7" x2="37.8" y2="413.4" stroke-width="0.77"/><line x1="54.0" y1="404.0" x2="55.2" y2="413.9" stroke-width="2.07"/><line x1="55.2" y1="413.9" x2="59.1" y2="419.8" stroke-width="1.66"/><line x1="59.1" y1="419.8" x2="63.6" y2="421.3" stroke-width="1.34"/><line x1="59.1" y1="419.8" x2="59.6" y2="424.6" stroke-width="1.34"/><line x1="59.6" y1="424.6" x2="60.7" y2="425.9" stroke-width="1.09"/><line x1="60.7" y1="425.9" x2="60.8" y2="426.5" stroke-width="0.89"/><line x1="59.6" y1="424.6" x2="58.5" y2="427.9" stroke-width="1.09"/><line x1="58.5" y1="427.9" x2="59.1" y2="429.2" stroke-width="0.89"/><line x1="58.5" y1="427.9" x2="56.6" y2="429.5" stroke-width="0.89"/><line x1="55.2" y1="413.9" x2="53.9" y2="420.8" stroke-width="1.66"/><line x1="53.9" y1="420.8" x2="56.1" y2="425.6" stroke-width="1.34"/><line x1="56.1" y1="425.6" x2="58.9" y2="428.3" stroke-width="1.09"/><line x1="56.1" y1="425.6" x2="55.6" y2="429.4" stroke-width="1.09"/><line x1="55.6" y1="429.4" x2="56.4" y2="432.3" stroke-width="0.89"/><line x1="55.6" y1="429.4" x2="54.1" y2="431.8" stroke-width="0.89"/><line x1="53.9" y1="420.8" x2="50.5" y2="424.7" stroke-width="1.34"/><line x1="50.5" y1="424.7" x2="50.2" y2="428.6" stroke-width="1.09"/><line x1="50.2" y1="428.6" x2="50.9" y2="431.5" stroke-width="0.89"/><line x1="50.2" y1="428.6" x2="48.2" y2="431.1" stroke-width="0.89"/><line x1="50.5" y1="424.7" x2="46.5" y2="426.0" stroke-width="1.09"/><line x1="46.5" y1="426.0" x2="44.3" y2="428.5" stroke-width="0.89"/><line x1="46.5" y1="426.0" x2="43.2" y2="425.2" stroke-width="0.89"/><line x1="54.0" y1="404.0" x2="59.8" y2="412.1" stroke-width="1.90"/><line x1="59.8" y1="412.1" x2="66.6" y2="414.1" stroke-width="1.53"/><line x1="59.8" y1="412.1" x2="59.5" y2="419.0" stroke-width="1.53"/><line x1="59.5" y1="419.0" x2="61.9" y2="423.8" stroke-width="1.23"/><line x1="59.5" y1="419.0" x2="56.5" y2="423.0" stroke-width="1.23"/><line x1="56.5" y1="423.0" x2="55.8" y2="427.0" stroke-width="1.01"/><line x1="56.5" y1="423.0" x2="53.6" y2="425.2" stroke-width="1.01"/><line x1="62.0" y1="366.0" x2="66.9" y2="370.9" stroke-width="1.39"/><line x1="66.9" y1="370.9" x2="71.8" y2="372.3" stroke-width="1.13"/><line x1="71.8" y1="372.3" x2="73.7" y2="371.7" stroke-width="0.92"/><line x1="71.8" y1="372.3" x2="73.2" y2="373.8" stroke-width="0.92"/><line x1="73.2" y1="373.8" x2="73.7" y2="375.1" stroke-width="0.76"/><line x1="66.9" y1="370.9" x2="68.0" y2="376.1" stroke-width="1.13"/><line x1="68.0" y1="376.1" x2="70.8" y2="378.9" stroke-width="0.92"/><line x1="70.8" y1="378.9" x2="73.6" y2="379.5" stroke-width="0.76"/><line x1="70.8" y1="378.9" x2="71.7" y2="381.7" stroke-width="0.76"/><line x1="68.0" y1="376.1" x2="66.4" y2="379.5" stroke-width="0.92"/><line x1="66.4" y1="379.5" x2="67.1" y2="382.0" stroke-width="0.76"/><line x1="66.4" y1="379.5" x2="63.8" y2="380.8" stroke-width="0.76"/><line x1="111.0" y1="345.0" x2="120.8" y2="343.0" stroke-width="1.90"/><line x1="120.8" y1="343.0" x2="126.0" y2="338.5" stroke-width="1.53"/><line x1="126.0" y1="338.5" x2="128.1" y2="333.6" stroke-width="1.23"/><line x1="128.1" y1="333.6" x2="127.4" y2="329.7" stroke-width="1.01"/><line x1="127.4" y1="329.7" x2="125.7" y2="327.4" stroke-width="0.83"/><line x1="125.7" y1="327.4" x2="123.7" y2="326.4" stroke-width="0.70"/><line x1="125.7" y1="327.4" x2="125.3" y2="325.4" stroke-width="0.70"/><line x1="127.4" y1="329.7" x2="128.4" y2="326.9" stroke-width="0.83"/><line x1="128.4" y1="326.9" x2="128.5" y2="324.8" stroke-width="0.70"/><line x1="128.4" y1="326.9" x2="130.1" y2="325.1" stroke-width="0.70"/><line x1="128.1" y1="333.6" x2="131.2" y2="331.1" stroke-width="1.01"/><line x1="131.2" y1="331.1" x2="132.5" y2="328.5" stroke-width="0.83"/><line x1="132.5" y1="328.5" x2="132.7" y2="326.3" stroke-width="0.70"/><line x1="132.5" y1="328.5" x2="134.5" y2="327.3" stroke-width="0.70"/><line x1="131.2" y1="331.1" x2="134.2" y2="330.7" stroke-width="0.83"/><line x1="134.2" y1="330.7" x2="136.1" y2="329.2" stroke-width="0.70"/><line x1="134.2" y1="330.7" x2="136.1" y2="331.7" stroke-width="0.70"/><line x1="126.0" y1="338.5" x2="131.2" y2="336.4" stroke-width="1.23"/><line x1="131.2" y1="336.4" x2="134.3" y2="334.1" stroke-width="1.01"/><line x1="134.3" y1="334.1" x2="135.7" y2="331.3" stroke-width="0.83"/><line x1="135.7" y1="331.3" x2="135.8" y2="328.9" stroke-width="0.70"/><line x1="135.7" y1="331.3" x2="137.6" y2="330.0" stroke-width="0.70"/><line x1="134.3" y1="334.1" x2="137.1" y2="334.1" stroke-width="0.83"/><line x1="137.1" y1="334.1" x2="138.9" y2="333.0" stroke-width="0.70"/><line x1="137.1" y1="334.1" x2="138.8" y2="335.2" stroke-width="0.70"/><line x1="131.2" y1="336.4" x2="135.8" y2="336.7" stroke-width="1.01"/><line x1="135.8" y1="336.7" x2="138.8" y2="335.7" stroke-width="0.83"/><line x1="138.8" y1="335.7" x2="140.7" y2="334.1" stroke-width="0.70"/><line x1="138.8" y1="335.7" x2="141.1" y2="335.6" stroke-width="0.70"/><line x1="135.8" y1="336.7" x2="138.7" y2="338.0" stroke-width="0.83"/><line x1="138.7" y1="338.0" x2="141.3" y2="337.9" stroke-width="0.70"/><line x1="138.7" y1="338.0" x2="140.3" y2="340.1" stroke-width="0.70"/><line x1="120.8" y1="343.0" x2="127.8" y2="345.6" stroke-width="1.53"/><line x1="127.8" y1="345.6" x2="133.7" y2="345.0" stroke-width="1.23"/><line x1="133.7" y1="345.0" x2="137.7" y2="342.3" stroke-width="1.01"/><line x1="137.7" y1="342.3" x2="139.4" y2="339.0" stroke-width="0.83"/><line x1="139.4" y1="339.0" x2="140.0" y2="336.3" stroke-width="0.70"/><line x1="139.4" y1="339.0" x2="141.3" y2="337.0" stroke-width="0.70"/><line x1="137.7" y1="342.3" x2="141.1" y2="341.5" stroke-width="0.83"/><line x1="141.1" y1="341.5" x2="142.7" y2="339.4" stroke-width="0.70"/><line x1="141.1" y1="341.5" x2="143.5" y2="342.1" stroke-width="0.70"/><line x1="133.7" y1="345.0" x2="138.1" y2="346.2" stroke-width="1.01"/><line x1="138.1" y1="346.2" x2="141.6" y2="345.5" stroke-width="0.83"/><line x1="141.6" y1="345.5" x2="143.5" y2="343.6" stroke-width="0.70"/><line x1="141.6" y1="345.5" x2="144.1" y2="346.3" stroke-width="0.70"/><line x1="138.1" y1="346.2" x2="140.6" y2="348.6" stroke-width="0.83"/><line x1="140.6" y1="348.6" x2="143.3" y2="349.2" stroke-width="0.70"/><line x1="140.6" y1="348.6" x2="141.4" y2="351.0" stroke-width="0.70"/><line x1="127.8" y1="345.6" x2="131.0" y2="349.8" stroke-width="1.23"/><line x1="131.0" y1="349.8" x2="134.2" y2="351.6" stroke-width="1.01"/><line x1="134.2" y1="351.6" x2="136.8" y2="351.4" stroke-width="0.83"/><line x1="136.8" y1="351.4" x2="138.8" y2="350.7" stroke-width="0.70"/><line x1="136.8" y1="351.4" x2="138.8" y2="352.2" stroke-width="0.70"/><line x1="134.2" y1="351.6" x2="135.1" y2="354.2" stroke-width="0.83"/><line x1="135.1" y1="354.2" x2="136.9" y2="355.5" stroke-width="0.70"/><line x1="135.1" y1="354.2" x2="135.0" y2="356.2" stroke-width="0.70"/><line x1="131.0" y1="349.8" x2="131.9" y2="353.8" stroke-width="1.01"/><line x1="131.9" y1="353.8" x2="134.2" y2="355.8" stroke-width="0.83"/><line x1="134.2" y1="355.8" x2="136.3" y2="356.1" stroke-width="0.70"/><line x1="134.2" y1="355.8" x2="134.9" y2="357.8" stroke-width="0.70"/><line x1="131.9" y1="353.8" x2="130.6" y2="356.6" stroke-width="0.83"/><line x1="130.6" y1="356.6" x2="130.4" y2="358.8" stroke-width="0.70"/><line x1="130.6" y1="356.6" x2="128.9" y2="357.9" stroke-width="0.70"/><line x1="117.0" y1="336.0" x2="124.9" y2="329.9" stroke-width="1.90"/><line x1="124.9" y1="329.9" x2="127.9" y2="322.5" stroke-width="1.53"/><line x1="127.9" y1="322.5" x2="128.1" y2="316.4" stroke-width="1.23"/><line x1="128.1" y1="316.4" x2="125.0" y2="313.0" stroke-width="1.01"/><line x1="125.0" y1="313.0" x2="122.0" y2="311.5" stroke-width="0.83"/><line x1="122.0" y1="311.5" x2="119.6" y2="312.0" stroke-width="0.70"/><line x1="122.0" y1="311.5" x2="120.5" y2="309.7" stroke-width="0.70"/><line x1="125.0" y1="313.0" x2="124.2" y2="309.5" stroke-width="0.83"/><line x1="124.2" y1="309.5" x2="122.6" y2="307.4" stroke-width="0.70"/><line x1="124.2" y1="309.5" x2="124.5" y2="306.6" stroke-width="0.70"/><line x1="128.1" y1="316.4" x2="130.5" y2="312.5" stroke-width="1.01"/><line x1="130.5" y1="312.5" x2="131.0" y2="309.1" stroke-width="0.83"/><line x1="131.0" y1="309.1" x2="130.0" y2="306.6" stroke-width="0.70"/><line x1="131.0" y1="309.1" x2="132.7" y2="307.0" stroke-width="0.70"/><line x1="130.5" y1="312.5" x2="133.1" y2="310.7" stroke-width="0.83"/><line x1="133.1" y1="310.7" x2="134.3" y2="308.4" stroke-width="0.70"/><line x1="133.1" y1="310.7" x2="135.3" y2="310.4" stroke-width="0.70"/><line x1="127.9" y1="322.5" x2="132.1" y2="318.8" stroke-width="1.23"/><line x1="132.1" y1="318.8" x2="133.9" y2="315.1" stroke-width="1.01"/><line x1="133.9" y1="315.1" x2="134.1" y2="312.0" stroke-width="0.83"/><line x1="134.1" y1="312.0" x2="133.3" y2="310.0" stroke-width="0.70"/><line x1="134.1" y1="312.0" x2="135.3" y2="310.1" stroke-width="0.70"/><line x1="133.9" y1="315.1" x2="136.2" y2="312.8" stroke-width="0.83"/><line x1="136.2" y1="312.8" x2="136.3" y2="310.6" stroke-width="0.70"/><line x1="136.2" y1="312.8" x2="138.5" y2="312.3" stroke-width="0.70"/><line x1="132.1" y1="318.8" x2="136.1" y2="317.9" stroke-width="1.01"/><line x1="136.1" y1="317.9" x2="138.8" y2="316.0" stroke-width="0.83"/><line x1="138.8" y1="316.0" x2="140.2" y2="313.6" stroke-width="0.70"/><line x1="138.8" y1="316.0" x2="141.1" y2="315.8" stroke-width="0.70"/><line x1="136.1" y1="317.9" x2="138.8" y2="318.8" stroke-width="0.83"/><line x1="138.8" y1="318.8" x2="141.2" y2="318.7" stroke-width="0.70"/><line x1="138.8" y1="318.8" x2="140.4" y2="320.3" stroke-width="0.70"/><line x1="124.9" y1="329.9" x2="132.8" y2="327.6" stroke-width="1.53"/><line x1="132.8" y1="327.6" x2="136.5" y2="322.4" stroke-width="1.23"/><line x1="136.5" y1="322.4" x2="137.4" y2="317.5" stroke-width="1.01"/><line x1="137.4" y1="317.5" x2="136.4" y2="313.9" stroke-width="0.83"/><line x1="136.4" y1="313.9" x2="134.5" y2="312.0" stroke-width="0.70"/><line x1="136.4" y1="313.9" x2="137.1" y2="311.4" stroke-width="0.70"/><line x1="137.4" y1="317.5" x2="140.3" y2="315.0" stroke-width="0.83"/><line x1="140.3" y1="315.0" x2="141.4" y2="312.7" stroke-width="0.70"/><line x1="140.3" y1="315.0" x2="143.3" y2="314.6" stroke-width="0.70"/><line x1="136.5" y1="322.4" x2="140.0" y2="319.6" stroke-width="1.01"/><line x1="140.0" y1="319.6" x2="141.6" y2="316.9" stroke-width="0.83"/><line x1="141.6" y1="316.9" x2="141.8" y2="314.6" stroke-width="0.70"/><line x1="141.6" y1="316.9" x2="143.8" y2="315.7" stroke-width="0.70"/><line x1="140.0" y1="319.6" x2="142.9" y2="318.6" stroke-width="0.83"/><line x1="142.9" y1="318.6" x2="144.4" y2="316.8" stroke-width="0.70"/><line x1="142.9" y1="318.6" x2="145.3" y2="319.2" stroke-width="0.70"/><line x1="132.8" y1="327.6" x2="139.2" y2="329.1" stroke-width="1.23"/><line x1="139.2" y1="329.1" x2="143.9" y2="327.6" stroke-width="1.01"/><line x1="143.9" y1="327.6" x2="146.7" y2="325.7" stroke-width="0.83"/><line x1="146.7" y1="325.7" x2="147.7" y2="323.2" stroke-width="0.70"/><line x1="146.7" y1="325.7" x2="149.2" y2="325.3" stroke-width="0.70"/><line x1="143.9" y1="327.6" x2="147.4" y2="328.2" stroke-width="0.83"/><line x1="147.4" y1="328.2" x2="150.0" y2="327.8" stroke-width="0.70"/><line x1="147.4" y1="328.2" x2="149.9" y2="329.3" stroke-width="0.70"/><line x1="139.2" y1="329.1" x2="142.8" y2="332.5" stroke-width="1.01"/><line x1="142.8" y1="332.5" x2="146.2" y2="333.3" stroke-width="0.83"/><line x1="146.2" y1="333.3" x2="148.8" y2="333.1" stroke-width="0.70"/><line x1="146.2" y1="333.3" x2="148.3" y2="335.2" stroke-width="0.70"/><line x1="142.8" y1="332.5" x2="143.9" y2="336.0" stroke-width="0.83"/><line x1="143.9" y1="336.0" x2="145.9" y2="338.3" stroke-width="0.70"/><line x1="143.9" y1="336.0" x2="143.5" y2="338.9" stroke-width="0.70"/><line x1="120.0" y1="328.0" x2="116.0" y2="320.0" stroke-width="1.73"/><line x1="116.0" y1="320.0" x2="110.7" y2="316.4" stroke-width="1.39"/><line x1="110.7" y1="316.4" x2="105.9" y2="316.4" stroke-width="1.13"/><line x1="110.7" y1="316.4" x2="108.5" y2="312.0" stroke-width="1.13"/><line x1="116.0" y1="320.0" x2="116.4" y2="313.3" stroke-width="1.39"/><line x1="116.4" y1="313.3" x2="114.0" y2="309.1" stroke-width="1.13"/><line x1="114.0" y1="309.1" x2="112.5" y2="308.0" stroke-width="0.93"/><line x1="112.5" y1="308.0" x2="111.8" y2="307.8" stroke-width="0.77"/><line x1="112.5" y1="308.0" x2="112.2" y2="307.5" stroke-width="0.77"/><line x1="114.0" y1="309.1" x2="113.6" y2="307.2" stroke-width="0.93"/><line x1="113.6" y1="307.2" x2="112.6" y2="306.4" stroke-width="0.77"/><line x1="113.6" y1="307.2" x2="114.1" y2="306.0" stroke-width="0.77"/><line x1="116.4" y1="313.3" x2="119.5" y2="309.6" stroke-width="1.13"/><line x1="119.5" y1="309.6" x2="120.1" y2="306.4" stroke-width="0.93"/><line x1="120.1" y1="306.4" x2="119.2" y2="304.3" stroke-width="0.77"/><line x1="120.1" y1="306.4" x2="121.9" y2="304.3" stroke-width="0.77"/><line x1="119.5" y1="309.6" x2="122.6" y2="308.4" stroke-width="0.93"/><line x1="122.6" y1="308.4" x2="123.8" y2="306.5" stroke-width="0.77"/><line x1="122.6" y1="308.4" x2="125.1" y2="309.2" stroke-width="0.77"/><line x1="127.0" y1="308.0" x2="130.0" y2="300.6" stroke-width="1.73"/><line x1="127.0" y1="308.0" x2="124.0" y2="300.6" stroke-width="1.73"/><line x1="106.0" y1="352.0" x2="113.0" y2="351.3" stroke-width="1.56"/><line x1="113.0" y1="351.3" x2="117.8" y2="348.2" stroke-width="1.26"/><line x1="117.8" y1="348.2" x2="120.0" y2="344.6" stroke-width="1.03"/><line x1="120.0" y1="344.6" x2="119.8" y2="341.3" stroke-width="0.85"/><line x1="119.8" y1="341.3" x2="118.8" y2="338.8" stroke-width="0.70"/><line x1="119.8" y1="341.3" x2="120.7" y2="338.8" stroke-width="0.70"/><line x1="120.0" y1="344.6" x2="122.6" y2="343.1" stroke-width="0.85"/><line x1="122.6" y1="343.1" x2="123.4" y2="341.1" stroke-width="0.70"/><line x1="122.6" y1="343.1" x2="124.8" y2="343.4" stroke-width="0.70"/><line x1="117.8" y1="348.2" x2="122.4" y2="348.1" stroke-width="1.03"/><line x1="122.4" y1="348.1" x2="125.2" y2="346.4" stroke-width="0.85"/><line x1="125.2" y1="346.4" x2="126.9" y2="344.4" stroke-width="0.70"/><line x1="125.2" y1="346.4" x2="127.7" y2="346.2" stroke-width="0.70"/><line x1="122.4" y1="348.1" x2="125.7" y2="349.7" stroke-width="0.85"/><line x1="125.7" y1="349.7" x2="128.2" y2="349.7" stroke-width="0.70"/><line x1="125.7" y1="349.7" x2="127.6" y2="351.9" stroke-width="0.70"/><line x1="113.0" y1="351.3" x2="118.2" y2="352.1" stroke-width="1.26"/><line x1="118.2" y1="352.1" x2="121.6" y2="350.4" stroke-width="1.03"/><line x1="121.6" y1="350.4" x2="123.2" y2="347.9" stroke-width="0.85"/><line x1="123.2" y1="347.9" x2="123.6" y2="345.6" stroke-width="0.70"/><line x1="123.2" y1="347.9" x2="124.9" y2="346.6" stroke-width="0.70"/><line x1="121.6" y1="350.4" x2="124.4" y2="350.5" stroke-width="0.85"/><line x1="124.4" y1="350.5" x2="126.2" y2="349.5" stroke-width="0.70"/><line x1="124.4" y1="350.5" x2="126.3" y2="351.8" stroke-width="0.70"/><line x1="118.2" y1="352.1" x2="121.4" y2="354.4" stroke-width="1.03"/><line x1="121.4" y1="354.4" x2="124.4" y2="354.9" stroke-width="0.85"/><line x1="124.4" y1="354.9" x2="126.5" y2="354.3" stroke-width="0.70"/><line x1="124.4" y1="354.9" x2="126.4" y2="356.1" stroke-width="0.70"/><line x1="121.4" y1="354.4" x2="122.6" y2="356.9" stroke-width="0.85"/><line x1="122.6" y1="356.9" x2="124.3" y2="358.0" stroke-width="0.70"/><line x1="122.6" y1="356.9" x2="122.5" y2="358.8" stroke-width="0.70"/><line x1="106.0" y1="366.0" x2="117.6" y2="363.1" stroke-width="2.07"/><line x1="117.6" y1="363.1" x2="125.4" y2="358.4" stroke-width="1.66"/><line x1="125.4" y1="358.4" x2="128.8" y2="352.1" stroke-width="1.34"/><line x1="128.8" y1="352.1" x2="129.2" y2="346.4" stroke-width="1.09"/><line x1="129.2" y1="346.4" x2="127.2" y2="342.5" stroke-width="0.89"/><line x1="127.2" y1="342.5" x2="124.4" y2="340.6" stroke-width="0.74"/><line x1="127.2" y1="342.5" x2="127.3" y2="339.1" stroke-width="0.74"/><line x1="129.2" y1="346.4" x2="131.6" y2="342.8" stroke-width="0.89"/><line x1="131.6" y1="342.8" x2="132.5" y2="339.7" stroke-width="0.74"/><line x1="131.6" y1="342.8" x2="134.6" y2="341.1" stroke-width="0.74"/><line x1="128.8" y1="352.1" x2="133.1" y2="348.3" stroke-width="1.09"/><line x1="133.1" y1="348.3" x2="134.0" y2="344.1" stroke-width="0.89"/><line x1="134.0" y1="344.1" x2="132.8" y2="340.8" stroke-width="0.74"/><line x1="134.0" y1="344.1" x2="135.7" y2="341.4" stroke-width="0.74"/><line x1="133.1" y1="348.3" x2="137.8" y2="347.9" stroke-width="0.89"/><line x1="137.8" y1="347.9" x2="140.2" y2="345.6" stroke-width="0.74"/><line x1="137.8" y1="347.9" x2="140.7" y2="349.4" stroke-width="0.74"/><line x1="125.4" y1="358.4" x2="131.9" y2="357.6" stroke-width="1.34"/><line x1="131.9" y1="357.6" x2="135.8" y2="355.1" stroke-width="1.09"/><line x1="135.8" y1="355.1" x2="138.3" y2="352.3" stroke-width="0.89"/><line x1="138.3" y1="352.3" x2="138.8" y2="349.3" stroke-width="0.74"/><line x1="138.3" y1="352.3" x2="141.1" y2="351.3" stroke-width="0.74"/><line x1="135.8" y1="355.1" x2="139.5" y2="354.8" stroke-width="0.89"/><line x1="139.5" y1="354.8" x2="142.0" y2="353.2" stroke-width="0.74"/><line x1="139.5" y1="354.8" x2="141.9" y2="355.8" stroke-width="0.74"/><line x1="131.9" y1="357.6" x2="136.3" y2="360.1" stroke-width="1.09"/><line x1="136.3" y1="360.1" x2="140.1" y2="359.8" stroke-width="0.89"/><line x1="140.1" y1="359.8" x2="143.0" y2="358.8" stroke-width="0.74"/><line x1="140.1" y1="359.8" x2="142.7" y2="360.6" stroke-width="0.74"/><line x1="136.3" y1="360.1" x2="138.2" y2="363.5" stroke-width="0.89"/><line x1="138.2" y1="363.5" x2="140.6" y2="364.7" stroke-width="0.74"/><line x1="138.2" y1="363.5" x2="138.0" y2="366.2" stroke-width="0.74"/><line x1="117.6" y1="363.1" x2="127.0" y2="364.7" stroke-width="1.66"/><line x1="127.0" y1="364.7" x2="134.3" y2="361.8" stroke-width="1.34"/><line x1="134.3" y1="361.8" x2="137.4" y2="356.8" stroke-width="1.09"/><line x1="137.4" y1="356.8" x2="138.0" y2="352.2" stroke-width="0.89"/><line x1="138.0" y1="352.2" x2="136.3" y2="349.0" stroke-width="0.74"/><line x1="138.0" y1="352.2" x2="140.3" y2="349.7" stroke-width="0.74"/><line x1="137.4" y1="356.8" x2="141.6" y2="355.4" stroke-width="0.89"/><line x1="141.6" y1="355.4" x2="143.9" y2="353.4" stroke-width="0.74"/><line x1="141.6" y1="355.4" x2="144.7" y2="356.0" stroke-width="0.74"/><line x1="134.3" y1="361.8" x2="140.5" y2="362.1" stroke-width="1.09"/><line x1="140.5" y1="362.1" x2="144.9" y2="360.3" stroke-width="0.89"/><line x1="144.9" y1="360.3" x2="147.2" y2="358.0" stroke-width="0.74"/><line x1="144.9" y1="360.3" x2="148.7" y2="360.6" stroke-width="0.74"/><line x1="140.5" y1="362.1" x2="144.5" y2="365.1" stroke-width="0.89"/><line x1="144.5" y1="365.1" x2="148.2" y2="366.0" stroke-width="0.74"/><line x1="144.5" y1="365.1" x2="145.9" y2="368.4" stroke-width="0.74"/><line x1="127.0" y1="364.7" x2="131.6" y2="369.8" stroke-width="1.34"/><line x1="131.6" y1="369.8" x2="136.8" y2="372.0" stroke-width="1.09"/><line x1="136.8" y1="372.0" x2="140.9" y2="371.7" stroke-width="0.89"/><line x1="140.9" y1="371.7" x2="143.0" y2="369.5" stroke-width="0.74"/><line x1="140.9" y1="371.7" x2="143.2" y2="373.1" stroke-width="0.74"/><line x1="136.8" y1="372.0" x2="138.9" y2="375.3" stroke-width="0.89"/><line x1="138.9" y1="375.3" x2="141.6" y2="376.2" stroke-width="0.74"/><line x1="138.9" y1="375.3" x2="139.0" y2="378.4" stroke-width="0.74"/><line x1="131.6" y1="369.8" x2="132.0" y2="374.8" stroke-width="1.09"/><line x1="132.0" y1="374.8" x2="134.2" y2="377.6" stroke-width="0.89"/><line x1="134.2" y1="377.6" x2="136.4" y2="379.3" stroke-width="0.74"/><line x1="134.2" y1="377.6" x2="135.1" y2="380.2" stroke-width="0.74"/><line x1="132.0" y1="374.8" x2="130.6" y2="378.3" stroke-width="0.89"/><line x1="130.6" y1="378.3" x2="131.0" y2="381.4" stroke-width="0.74"/><line x1="130.6" y1="378.3" x2="128.3" y2="380.2" stroke-width="0.74"/><line x1="107.0" y1="380.0" x2="118.9" y2="378.8" stroke-width="2.07"/><line x1="118.9" y1="378.8" x2="125.1" y2="373.1" stroke-width="1.66"/><line x1="125.1" y1="373.1" x2="127.2" y2="366.6" stroke-width="1.34"/><line x1="127.2" y1="366.6" x2="125.6" y2="361.9" stroke-width="1.09"/><line x1="125.6" y1="361.9" x2="122.4" y2="360.2" stroke-width="0.89"/><line x1="122.4" y1="360.2" x2="119.8" y2="359.6" stroke-width="0.74"/><line x1="122.4" y1="360.2" x2="120.8" y2="358.3" stroke-width="0.74"/><line x1="125.6" y1="361.9" x2="126.9" y2="358.6" stroke-width="0.89"/><line x1="126.9" y1="358.6" x2="126.9" y2="356.2" stroke-width="0.74"/><line x1="126.9" y1="358.6" x2="128.7" y2="356.8" stroke-width="0.74"/><line x1="127.2" y1="366.6" x2="130.6" y2="363.3" stroke-width="1.09"/><line x1="130.6" y1="363.3" x2="132.5" y2="360.1" stroke-width="0.89"/><line x1="132.5" y1="360.1" x2="132.2" y2="357.1" stroke-width="0.74"/><line x1="132.5" y1="360.1" x2="134.7" y2="358.8" stroke-width="0.74"/><line x1="130.6" y1="363.3" x2="133.5" y2="361.8" stroke-width="0.89"/><line x1="133.5" y1="361.8" x2="134.9" y2="359.6" stroke-width="0.74"/><line x1="133.5" y1="361.8" x2="136.1" y2="361.5" stroke-width="0.74"/><line x1="125.1" y1="373.1" x2="131.8" y2="373.1" stroke-width="1.34"/><line x1="131.8" y1="373.1" x2="135.9" y2="371.0" stroke-width="1.09"/><line x1="135.9" y1="371.0" x2="137.8" y2="367.7" stroke-width="0.89"/><line x1="137.8" y1="367.7" x2="137.9" y2="364.7" stroke-width="0.74"/><line x1="137.8" y1="367.7" x2="139.9" y2="366.3" stroke-width="0.74"/><line x1="135.9" y1="371.0" x2="139.3" y2="370.9" stroke-width="0.89"/><line x1="139.3" y1="370.9" x2="141.8" y2="369.8" stroke-width="0.74"/><line x1="139.3" y1="370.9" x2="141.7" y2="372.0" stroke-width="0.74"/><line x1="131.8" y1="373.1" x2="136.6" y2="374.4" stroke-width="1.09"/><line x1="136.6" y1="374.4" x2="140.3" y2="374.4" stroke-width="0.89"/><line x1="140.3" y1="374.4" x2="142.5" y2="372.9" stroke-width="0.74"/><line x1="140.3" y1="374.4" x2="142.7" y2="375.6" stroke-width="0.74"/><line x1="136.6" y1="374.4" x2="139.8" y2="376.4" stroke-width="0.89"/><line x1="139.8" y1="376.4" x2="142.4" y2="376.9" stroke-width="0.74"/><line x1="139.8" y1="376.4" x2="141.3" y2="378.4" stroke-width="0.74"/><line x1="118.9" y1="378.8" x2="127.4" y2="382.4" stroke-width="1.66"/><line x1="127.4" y1="382.4" x2="134.0" y2="382.7" stroke-width="1.34"/><line x1="134.0" y1="382.7" x2="138.6" y2="380.1" stroke-width="1.09"/><line x1="138.6" y1="380.1" x2="141.3" y2="377.1" stroke-width="0.89"/><line x1="141.3" y1="377.1" x2="142.3" y2="374.4" stroke-width="0.74"/><line x1="141.3" y1="377.1" x2="144.0" y2="376.2" stroke-width="0.74"/><line x1="138.6" y1="380.1" x2="142.9" y2="380.3" stroke-width="0.89"/><line x1="142.9" y1="380.3" x2="146.0" y2="379.1" stroke-width="0.74"/><line x1="142.9" y1="380.3" x2="145.7" y2="382.3" stroke-width="0.74"/><line x1="134.0" y1="382.7" x2="137.6" y2="386.1" stroke-width="1.09"/><line x1="137.6" y1="386.1" x2="141.2" y2="387.2" stroke-width="0.89"/><line x1="141.2" y1="387.2" x2="143.9" y2="386.5" stroke-width="0.74"/><line x1="141.2" y1="387.2" x2="143.2" y2="389.2" stroke-width="0.74"/><line x1="137.6" y1="386.1" x2="138.9" y2="389.4" stroke-width="0.89"/><line x1="138.9" y1="389.4" x2="140.8" y2="391.0" stroke-width="0.74"/><line x1="138.9" y1="389.4" x2="138.9" y2="392.2" stroke-width="0.74"/><line x1="127.4" y1="382.4" x2="132.2" y2="388.1" stroke-width="1.34"/><line x1="132.2" y1="388.1" x2="137.8" y2="390.1" stroke-width="1.09"/><line x1="137.8" y1="390.1" x2="142.1" y2="389.5" stroke-width="0.89"/><line x1="142.1" y1="389.5" x2="144.6" y2="387.7" stroke-width="0.74"/><line x1="142.1" y1="389.5" x2="144.9" y2="390.7" stroke-width="0.74"/><line x1="137.8" y1="390.1" x2="141.1" y2="393.3" stroke-width="0.89"/><line x1="141.1" y1="393.3" x2="144.5" y2="394.2" stroke-width="0.74"/><line x1="141.1" y1="393.3" x2="142.3" y2="396.9" stroke-width="0.74"/><line x1="132.2" y1="388.1" x2="132.5" y2="393.4" stroke-width="1.09"/><line x1="132.5" y1="393.4" x2="135.1" y2="396.4" stroke-width="0.89"/><line x1="135.1" y1="396.4" x2="138.3" y2="396.6" stroke-width="0.74"/><line x1="135.1" y1="396.4" x2="135.4" y2="399.2" stroke-width="0.74"/><line x1="132.5" y1="393.4" x2="130.6" y2="396.9" stroke-width="0.89"/><line x1="130.6" y1="396.9" x2="130.8" y2="399.8" stroke-width="0.74"/><line x1="130.6" y1="396.9" x2="128.1" y2="398.7" stroke-width="0.74"/><line x1="106.0" y1="394.0" x2="117.9" y2="395.8" stroke-width="2.07"/><line x1="117.9" y1="395.8" x2="126.1" y2="393.3" stroke-width="1.66"/><line x1="126.1" y1="393.3" x2="130.6" y2="388.2" stroke-width="1.34"/><line x1="130.6" y1="388.2" x2="131.0" y2="382.6" stroke-width="1.09"/><line x1="131.0" y1="382.6" x2="129.1" y2="379.1" stroke-width="0.89"/><line x1="129.1" y1="379.1" x2="126.3" y2="377.7" stroke-width="0.74"/><line x1="129.1" y1="379.1" x2="129.1" y2="376.1" stroke-width="0.74"/><line x1="131.0" y1="382.6" x2="133.0" y2="378.5" stroke-width="0.89"/><line x1="133.0" y1="378.5" x2="132.8" y2="374.9" stroke-width="0.74"/><line x1="133.0" y1="378.5" x2="134.9" y2="376.0" stroke-width="0.74"/><line x1="130.6" y1="388.2" x2="136.0" y2="387.1" stroke-width="1.09"/><line x1="136.0" y1="387.1" x2="139.4" y2="384.6" stroke-width="0.89"/><line x1="139.4" y1="384.6" x2="141.0" y2="381.9" stroke-width="0.74"/><line x1="139.4" y1="384.6" x2="142.5" y2="384.4" stroke-width="0.74"/><line x1="136.0" y1="387.1" x2="139.6" y2="388.5" stroke-width="0.89"/><line x1="139.6" y1="388.5" x2="142.6" y2="388.0" stroke-width="0.74"/><line x1="139.6" y1="388.5" x2="141.4" y2="390.5" stroke-width="0.74"/><line x1="126.1" y1="393.3" x2="132.2" y2="394.2" stroke-width="1.34"/><line x1="132.2" y1="394.2" x2="136.1" y2="392.3" stroke-width="1.09"/><line x1="136.1" y1="392.3" x2="138.3" y2="389.8" stroke-width="0.89"/><line x1="138.3" y1="389.8" x2="138.9" y2="387.3" stroke-width="0.74"/><line x1="138.3" y1="389.8" x2="140.5" y2="388.6" stroke-width="0.74"/><line x1="136.1" y1="392.3" x2="139.6" y2="393.0" stroke-width="0.89"/><line x1="139.6" y1="393.0" x2="142.1" y2="392.4" stroke-width="0.74"/><line x1="139.6" y1="393.0" x2="141.7" y2="394.5" stroke-width="0.74"/><line x1="132.2" y1="394.2" x2="135.4" y2="397.1" stroke-width="1.09"/><line x1="135.4" y1="397.1" x2="138.6" y2="397.3" stroke-width="0.89"/><line x1="138.6" y1="397.3" x2="140.9" y2="396.6" stroke-width="0.74"/><line x1="138.6" y1="397.3" x2="140.6" y2="398.4" stroke-width="0.74"/><line x1="135.4" y1="397.1" x2="136.1" y2="400.0" stroke-width="0.89"/><line x1="136.1" y1="400.0" x2="137.5" y2="401.5" stroke-width="0.74"/><line x1="136.1" y1="400.0" x2="135.6" y2="402.0" stroke-width="0.74"/><line x1="117.9" y1="395.8" x2="125.6" y2="400.5" stroke-width="1.66"/><line x1="125.6" y1="400.5" x2="132.4" y2="400.4" stroke-width="1.34"/><line x1="132.4" y1="400.4" x2="136.5" y2="397.9" stroke-width="1.09"/><line x1="136.5" y1="397.9" x2="138.3" y2="394.8" stroke-width="0.89"/><line x1="138.3" y1="394.8" x2="138.4" y2="392.1" stroke-width="0.74"/><line x1="138.3" y1="394.8" x2="140.9" y2="393.7" stroke-width="0.74"/><line x1="136.5" y1="397.9" x2="140.1" y2="397.4" stroke-width="0.89"/><line x1="140.1" y1="397.4" x2="142.4" y2="395.9" stroke-width="0.74"/><line x1="140.1" y1="397.4" x2="142.7" y2="398.4" stroke-width="0.74"/><line x1="132.4" y1="400.4" x2="137.3" y2="402.8" stroke-width="1.09"/><line x1="137.3" y1="402.8" x2="141.6" y2="402.7" stroke-width="0.89"/><line x1="141.6" y1="402.7" x2="144.5" y2="401.5" stroke-width="0.74"/><line x1="141.6" y1="402.7" x2="144.8" y2="404.0" stroke-width="0.74"/><line x1="137.3" y1="402.8" x2="140.4" y2="406.0" stroke-width="0.89"/><line x1="140.4" y1="406.0" x2="143.8" y2="407.3" stroke-width="0.74"/><line x1="140.4" y1="406.0" x2="142.1" y2="408.9" stroke-width="0.74"/><line x1="125.6" y1="400.5" x2="128.6" y2="405.9" stroke-width="1.34"/><line x1="128.6" y1="405.9" x2="132.7" y2="408.5" stroke-width="1.09"/><line x1="132.7" y1="408.5" x2="136.4" y2="409.3" stroke-width="0.89"/><line x1="136.4" y1="409.3" x2="139.0" y2="408.8" stroke-width="0.74"/><line x1="136.4" y1="409.3" x2="138.9" y2="411.0" stroke-width="0.74"/><line x1="132.7" y1="408.5" x2="134.4" y2="411.5" stroke-width="0.89"/><line x1="134.4" y1="411.5" x2="136.5" y2="412.8" stroke-width="0.74"/><line x1="134.4" y1="411.5" x2="134.4" y2="414.2" stroke-width="0.74"/><line x1="128.6" y1="405.9" x2="128.0" y2="410.4" stroke-width="1.09"/><line x1="128.0" y1="410.4" x2="129.9" y2="413.5" stroke-width="0.89"/><line x1="129.9" y1="413.5" x2="132.6" y2="414.6" stroke-width="0.74"/><line x1="129.9" y1="413.5" x2="130.1" y2="416.2" stroke-width="0.74"/><line x1="128.0" y1="410.4" x2="125.2" y2="412.7" stroke-width="0.89"/><line x1="125.2" y1="412.7" x2="124.0" y2="415.3" stroke-width="0.74"/><line x1="125.2" y1="412.7" x2="122.4" y2="413.2" stroke-width="0.74"/><line x1="106.0" y1="406.0" x2="113.6" y2="413.9" stroke-width="1.90"/><line x1="113.6" y1="413.9" x2="121.1" y2="415.8" stroke-width="1.53"/><line x1="121.1" y1="415.8" x2="126.6" y2="413.5" stroke-width="1.23"/><line x1="126.6" y1="413.5" x2="129.9" y2="410.6" stroke-width="1.01"/><line x1="129.9" y1="410.6" x2="131.1" y2="407.3" stroke-width="0.83"/><line x1="131.1" y1="407.3" x2="130.6" y2="404.6" stroke-width="0.70"/><line x1="131.1" y1="407.3" x2="133.1" y2="405.4" stroke-width="0.70"/><line x1="129.9" y1="410.6" x2="132.8" y2="409.4" stroke-width="0.83"/><line x1="132.8" y1="409.4" x2="134.2" y2="407.5" stroke-width="0.70"/><line x1="132.8" y1="409.4" x2="135.1" y2="409.2" stroke-width="0.70"/><line x1="126.6" y1="413.5" x2="131.3" y2="413.3" stroke-width="1.01"/><line x1="131.3" y1="413.3" x2="134.2" y2="411.9" stroke-width="0.83"/><line x1="134.2" y1="411.9" x2="135.7" y2="410.1" stroke-width="0.70"/><line x1="134.2" y1="411.9" x2="136.7" y2="412.2" stroke-width="0.70"/><line x1="131.3" y1="413.3" x2="134.5" y2="414.2" stroke-width="0.83"/><line x1="134.5" y1="414.2" x2="137.1" y2="414.1" stroke-width="0.70"/><line x1="134.5" y1="414.2" x2="136.6" y2="415.3" stroke-width="0.70"/><line x1="121.1" y1="415.8" x2="125.3" y2="420.1" stroke-width="1.23"/><line x1="125.3" y1="420.1" x2="129.5" y2="421.9" stroke-width="1.01"/><line x1="129.5" y1="421.9" x2="132.8" y2="421.8" stroke-width="0.83"/><line x1="132.8" y1="421.8" x2="134.8" y2="420.3" stroke-width="0.70"/><line x1="132.8" y1="421.8" x2="135.1" y2="422.8" stroke-width="0.70"/><line x1="129.5" y1="421.9" x2="131.7" y2="424.4" stroke-width="0.83"/><line x1="131.7" y1="424.4" x2="134.2" y2="424.7" stroke-width="0.70"/><line x1="131.7" y1="424.4" x2="131.9" y2="426.7" stroke-width="0.70"/><line x1="125.3" y1="420.1" x2="127.0" y2="423.9" stroke-width="1.01"/><line x1="127.0" y1="423.9" x2="129.1" y2="426.3" stroke-width="0.83"/><line x1="129.1" y1="426.3" x2="131.3" y2="427.5" stroke-width="0.70"/><line x1="129.1" y1="426.3" x2="129.9" y2="428.3" stroke-width="0.70"/><line x1="127.0" y1="423.9" x2="126.8" y2="426.9" stroke-width="0.83"/><line x1="126.8" y1="426.9" x2="128.1" y2="428.8" stroke-width="0.70"/><line x1="126.8" y1="426.9" x2="125.6" y2="428.6" stroke-width="0.70"/><line x1="113.6" y1="413.9" x2="115.9" y2="422.3" stroke-width="1.53"/><line x1="115.9" y1="422.3" x2="120.0" y2="426.7" stroke-width="1.23"/><line x1="120.0" y1="426.7" x2="123.8" y2="428.4" stroke-width="1.01"/><line x1="123.8" y1="428.4" x2="127.2" y2="428.6" stroke-width="0.83"/><line x1="127.2" y1="428.6" x2="129.1" y2="427.3" stroke-width="0.70"/><line x1="127.2" y1="428.6" x2="129.3" y2="429.5" stroke-width="0.70"/><line x1="123.8" y1="428.4" x2="125.8" y2="430.7" stroke-width="0.83"/><line x1="125.8" y1="430.7" x2="127.8" y2="432.1" stroke-width="0.70"/><line x1="125.8" y1="430.7" x2="126.3" y2="433.0" stroke-width="0.70"/><line x1="120.0" y1="426.7" x2="121.0" y2="431.2" stroke-width="1.01"/><line x1="121.0" y1="431.2" x2="123.9" y2="433.5" stroke-width="0.83"/><line x1="123.9" y1="433.5" x2="126.4" y2="433.4" stroke-width="0.70"/><line x1="123.9" y1="433.5" x2="124.5" y2="436.0" stroke-width="0.70"/><line x1="121.0" y1="431.2" x2="119.3" y2="434.2" stroke-width="0.83"/><line x1="119.3" y1="434.2" x2="119.6" y2="437.0" stroke-width="0.70"/><line x1="119.3" y1="434.2" x2="117.3" y2="435.8" stroke-width="0.70"/><line x1="115.9" y1="422.3" x2="115.0" y2="428.9" stroke-width="1.23"/><line x1="115.0" y1="428.9" x2="116.7" y2="433.2" stroke-width="1.01"/><line x1="116.7" y1="433.2" x2="119.3" y2="435.3" stroke-width="0.83"/><line x1="119.3" y1="435.3" x2="121.8" y2="435.7" stroke-width="0.70"/><line x1="119.3" y1="435.3" x2="120.7" y2="437.5" stroke-width="0.70"/><line x1="116.7" y1="433.2" x2="116.2" y2="435.0" stroke-width="0.83"/><line x1="116.2" y1="435.0" x2="116.7" y2="436.3" stroke-width="0.70"/><line x1="116.2" y1="435.0" x2="115.7" y2="435.5" stroke-width="0.70"/><line x1="115.0" y1="428.9" x2="113.6" y2="431.2" stroke-width="1.01"/><line x1="113.6" y1="431.2" x2="113.7" y2="433.4" stroke-width="0.83"/><line x1="113.7" y1="433.4" x2="114.3" y2="434.9" stroke-width="0.70"/><line x1="113.7" y1="433.4" x2="113.3" y2="434.1" stroke-width="0.70"/><line x1="113.6" y1="431.2" x2="111.7" y2="432.2" stroke-width="0.83"/><line x1="106.0" y1="416.0" x2="112.7" y2="420.4" stroke-width="1.73"/><line x1="112.7" y1="420.4" x2="118.3" y2="420.8" stroke-width="1.39"/><line x1="118.3" y1="420.8" x2="122.0" y2="419.0" stroke-width="1.13"/><line x1="122.0" y1="419.0" x2="124.1" y2="417.0" stroke-width="0.93"/><line x1="124.1" y1="417.0" x2="124.4" y2="415.1" stroke-width="0.77"/><line x1="124.1" y1="417.0" x2="126.1" y2="416.6" stroke-width="0.77"/><line x1="122.0" y1="419.0" x2="125.1" y2="418.9" stroke-width="0.93"/><line x1="125.1" y1="418.9" x2="126.8" y2="417.6" stroke-width="0.77"/><line x1="125.1" y1="418.9" x2="127.0" y2="420.2" stroke-width="0.77"/><line x1="118.3" y1="420.8" x2="121.8" y2="423.1" stroke-width="1.13"/><line x1="121.8" y1="423.1" x2="125.0" y2="423.4" stroke-width="0.93"/><line x1="125.0" y1="423.4" x2="127.3" y2="423.0" stroke-width="0.77"/><line x1="125.0" y1="423.4" x2="127.3" y2="424.3" stroke-width="0.77"/><line x1="121.8" y1="423.1" x2="124.0" y2="425.4" stroke-width="0.93"/><line x1="124.0" y1="425.4" x2="126.5" y2="426.2" stroke-width="0.77"/><line x1="124.0" y1="425.4" x2="124.3" y2="427.7" stroke-width="0.77"/><line x1="112.7" y1="420.4" x2="114.8" y2="426.6" stroke-width="1.39"/><line x1="114.8" y1="426.6" x2="117.5" y2="430.8" stroke-width="1.13"/><line x1="117.5" y1="430.8" x2="120.5" y2="432.8" stroke-width="0.93"/><line x1="120.5" y1="432.8" x2="123.1" y2="432.9" stroke-width="0.77"/><line x1="120.5" y1="432.8" x2="121.6" y2="435.3" stroke-width="0.77"/><line x1="117.5" y1="430.8" x2="118.1" y2="434.4" stroke-width="0.93"/><line x1="118.1" y1="434.4" x2="119.5" y2="436.5" stroke-width="0.77"/><line x1="118.1" y1="434.4" x2="117.1" y2="437.0" stroke-width="0.77"/><line x1="114.8" y1="426.6" x2="114.2" y2="431.5" stroke-width="1.13"/><line x1="114.2" y1="431.5" x2="115.1" y2="434.9" stroke-width="0.93"/><line x1="115.1" y1="434.9" x2="116.7" y2="437.0" stroke-width="0.77"/><line x1="114.2" y1="431.5" x2="113.2" y2="432.9" stroke-width="0.93"/><line x1="113.2" y1="432.9" x2="113.0" y2="434.1" stroke-width="0.77"/><line x1="113.2" y1="432.9" x2="112.6" y2="433.1" stroke-width="0.77"/><line x1="102.0" y1="408.0" x2="105.7" y2="417.3" stroke-width="1.90"/><line x1="105.7" y1="417.3" x2="111.0" y2="422.0" stroke-width="1.53"/><line x1="111.0" y1="422.0" x2="115.9" y2="423.4" stroke-width="1.23"/><line x1="115.9" y1="423.4" x2="119.8" y2="422.9" stroke-width="1.01"/><line x1="115.9" y1="423.4" x2="118.9" y2="425.9" stroke-width="1.01"/><line x1="111.0" y1="422.0" x2="111.5" y2="427.0" stroke-width="1.23"/><line x1="111.5" y1="427.0" x2="113.7" y2="430.4" stroke-width="1.01"/><line x1="111.5" y1="427.0" x2="109.9" y2="430.2" stroke-width="1.01"/><line x1="105.7" y1="417.3" x2="105.7" y2="421.4" stroke-width="1.53"/><line x1="105.7" y1="421.4" x2="107.2" y2="424.3" stroke-width="1.23"/><line x1="107.2" y1="424.3" x2="108.8" y2="426.2" stroke-width="1.01"/><line x1="107.2" y1="424.3" x2="107.7" y2="426.7" stroke-width="1.01"/><line x1="105.7" y1="421.4" x2="105.0" y2="422.8" stroke-width="1.23"/><line x1="105.0" y1="422.8" x2="105.0" y2="423.4" stroke-width="1.01"/><line x1="105.0" y1="400.0" x2="100.0" y2="406.2" stroke-width="1.56"/><line x1="100.0" y1="406.2" x2="98.9" y2="409.3" stroke-width="1.26"/><line x1="56.0" y1="400.0" x2="59.7" y2="404.7" stroke-width="1.39"/><line x1="59.7" y1="404.7" x2="64.1" y2="407.0" stroke-width="1.13"/><line x1="64.1" y1="407.0" x2="67.4" y2="407.2" stroke-width="0.92"/><line x1="67.4" y1="407.2" x2="68.6" y2="406.6" stroke-width="0.76"/><line x1="67.4" y1="407.2" x2="68.4" y2="407.9" stroke-width="0.76"/><line x1="64.1" y1="407.0" x2="66.2" y2="409.6" stroke-width="0.92"/><line x1="66.2" y1="409.6" x2="67.4" y2="410.1" stroke-width="0.76"/><line x1="66.2" y1="409.6" x2="66.6" y2="412.0" stroke-width="0.76"/><line x1="59.7" y1="404.7" x2="60.0" y2="409.2" stroke-width="1.13"/><line x1="60.0" y1="409.2" x2="61.9" y2="411.8" stroke-width="0.92"/><line x1="61.9" y1="411.8" x2="64.3" y2="412.4" stroke-width="0.76"/><line x1="61.9" y1="411.8" x2="62.4" y2="414.1" stroke-width="0.76"/><line x1="60.0" y1="409.2" x2="58.8" y2="412.1" stroke-width="0.92"/><line x1="58.8" y1="412.1" x2="59.0" y2="414.6" stroke-width="0.76"/><line x1="58.8" y1="412.1" x2="57.3" y2="413.6" stroke-width="0.76"/></g><g stroke="#c8cfce" stroke-linecap="round" fill="none"><line x1="76.0" y1="338.0" x2="66.0" y2="350.0" stroke-width="5.20"/><line x1="66.0" y1="350.0" x2="60.0" y2="368.0" stroke-width="4.27"/><line x1="60.0" y1="368.0" x2="56.0" y2="388.0" stroke-width="3.33"/><line x1="56.0" y1="388.0" x2="54.0" y2="404.0" stroke-width="2.40"/><line x1="80.0" y1="338.0" x2="92.0" y2="347.0" stroke-width="5.20"/><line x1="92.0" y1="347.0" x2="103.0" y2="357.0" stroke-width="4.50"/><line x1="103.0" y1="357.0" x2="107.0" y2="373.0" stroke-width="3.80"/><line x1="107.0" y1="373.0" x2="105.0" y2="392.0" stroke-width="3.10"/><line x1="105.0" y1="392.0" x2="102.0" y2="408.0" stroke-width="2.40"/><line x1="64.0" y1="347.0" x2="53.0" y2="343.0" stroke-width="2.40"/><line x1="53.0" y1="343.0" x2="47.0" y2="328.0" stroke-width="1.90"/><line x1="47.0" y1="328.0" x2="46.0" y2="306.0" stroke-width="1.40"/><line x1="103.0" y1="357.0" x2="111.0" y2="345.0" stroke-width="2.40"/><line x1="111.0" y1="345.0" x2="120.0" y2="330.0" stroke-width="1.90"/><line x1="120.0" y1="330.0" x2="127.0" y2="306.0" stroke-width="1.40"/><line x1="53.0" y1="343.0" x2="43.2" y2="341.0" stroke-width="1.25"/><line x1="43.2" y1="341.0" x2="35.4" y2="343.2" stroke-width="0.88"/><line x1="35.4" y1="343.2" x2="30.9" y2="347.4" stroke-width="0.58"/><line x1="35.4" y1="343.2" x2="29.8" y2="341.4" stroke-width="0.58"/><line x1="43.2" y1="341.0" x2="36.6" y2="337.1" stroke-width="0.88"/><line x1="36.6" y1="337.1" x2="31.1" y2="336.5" stroke-width="0.58"/><line x1="36.6" y1="337.1" x2="33.2" y2="332.0" stroke-width="0.58"/><line x1="49.0" y1="334.0" x2="41.1" y2="327.9" stroke-width="1.25"/><line x1="41.1" y1="327.9" x2="34.7" y2="325.2" stroke-width="0.88"/><line x1="34.7" y1="325.2" x2="30.0" y2="326.7" stroke-width="0.58"/><line x1="34.7" y1="325.2" x2="32.1" y2="321.2" stroke-width="0.58"/><line x1="41.1" y1="327.9" x2="37.8" y2="320.9" stroke-width="0.88"/><line x1="37.8" y1="320.9" x2="33.4" y2="317.3" stroke-width="0.58"/><line x1="37.8" y1="320.9" x2="37.2" y2="315.5" stroke-width="0.58"/><line x1="47.0" y1="326.0" x2="51.0" y2="318.0" stroke-width="1.08"/><line x1="51.0" y1="318.0" x2="50.9" y2="310.8" stroke-width="0.74"/><line x1="50.9" y1="310.8" x2="48.5" y2="306.3" stroke-width="0.48"/><line x1="50.9" y1="310.8" x2="53.4" y2="305.8" stroke-width="0.48"/><line x1="51.0" y1="318.0" x2="57.0" y2="313.8" stroke-width="0.74"/><line x1="57.0" y1="313.8" x2="58.4" y2="311.6" stroke-width="0.48"/><line x1="57.0" y1="313.8" x2="59.6" y2="313.6" stroke-width="0.48"/><line x1="46.0" y1="308.0" x2="43.0" y2="300.6" stroke-width="1.08"/><line x1="46.0" y1="308.0" x2="47.5" y2="304.3" stroke-width="1.08"/><line x1="47.5" y1="304.3" x2="47.1" y2="301.5" stroke-width="0.74"/><line x1="47.5" y1="304.3" x2="50.1" y2="302.3" stroke-width="0.74"/><line x1="58.0" y1="346.0" x2="57.3" y2="339.0" stroke-width="0.91"/><line x1="57.3" y1="339.0" x2="53.5" y2="335.0" stroke-width="0.61"/><line x1="53.5" y1="335.0" x2="49.4" y2="333.3" stroke-width="0.38"/><line x1="53.5" y1="335.0" x2="52.4" y2="331.2" stroke-width="0.38"/><line x1="57.3" y1="339.0" x2="60.4" y2="334.8" stroke-width="0.61"/><line x1="60.4" y1="334.8" x2="61.3" y2="331.1" stroke-width="0.38"/><line x1="60.4" y1="334.8" x2="63.8" y2="332.9" stroke-width="0.38"/><line x1="61.0" y1="362.0" x2="49.1" y2="360.2" stroke-width="1.42"/><line x1="49.1" y1="360.2" x2="41.4" y2="364.5" stroke-width="1.01"/><line x1="41.4" y1="364.5" x2="38.6" y2="369.9" stroke-width="0.69"/><line x1="38.6" y1="369.9" x2="38.7" y2="374.2" stroke-width="0.44"/><line x1="38.6" y1="369.9" x2="34.4" y2="372.8" stroke-width="0.44"/><line x1="41.4" y1="364.5" x2="35.4" y2="363.9" stroke-width="0.69"/><line x1="35.4" y1="363.9" x2="30.7" y2="365.6" stroke-width="0.44"/><line x1="35.4" y1="363.9" x2="31.3" y2="362.0" stroke-width="0.44"/><line x1="49.1" y1="360.2" x2="42.7" y2="353.8" stroke-width="1.01"/><line x1="42.7" y1="353.8" x2="35.5" y2="353.5" stroke-width="0.69"/><line x1="35.5" y1="353.5" x2="29.9" y2="355.4" stroke-width="0.44"/><line x1="35.5" y1="353.5" x2="30.9" y2="351.0" stroke-width="0.44"/><line x1="42.7" y1="353.8" x2="42.2" y2="347.5" stroke-width="0.69"/><line x1="42.2" y1="347.5" x2="40.3" y2="343.4" stroke-width="0.44"/><line x1="42.2" y1="347.5" x2="44.0" y2="343.1" stroke-width="0.44"/><line x1="58.0" y1="378.0" x2="46.1" y2="379.2" stroke-width="1.42"/><line x1="46.1" y1="379.2" x2="38.3" y2="383.4" stroke-width="1.01"/><line x1="38.3" y1="383.4" x2="34.0" y2="387.5" stroke-width="0.69"/><line x1="34.0" y1="387.5" x2="32.2" y2="392.1" stroke-width="0.44"/><line x1="34.0" y1="387.5" x2="29.4" y2="389.0" stroke-width="0.44"/><line x1="38.3" y1="383.4" x2="32.1" y2="384.8" stroke-width="0.69"/><line x1="32.1" y1="384.8" x2="28.6" y2="388.5" stroke-width="0.44"/><line x1="32.1" y1="384.8" x2="27.3" y2="383.9" stroke-width="0.44"/><line x1="46.1" y1="379.2" x2="37.1" y2="378.0" stroke-width="1.01"/><line x1="37.1" y1="378.0" x2="31.1" y2="380.5" stroke-width="0.69"/><line x1="31.1" y1="380.5" x2="28.4" y2="384.4" stroke-width="0.44"/><line x1="31.1" y1="380.5" x2="26.3" y2="380.8" stroke-width="0.44"/><line x1="37.1" y1="378.0" x2="32.2" y2="373.4" stroke-width="0.69"/><line x1="32.2" y1="373.4" x2="27.4" y2="371.1" stroke-width="0.44"/><line x1="32.2" y1="373.4" x2="29.4" y2="369.0" stroke-width="0.44"/><line x1="56.0" y1="394.0" x2="44.4" y2="396.9" stroke-width="1.42"/><line x1="44.4" y1="396.9" x2="37.8" y2="403.1" stroke-width="1.01"/><line x1="37.8" y1="403.1" x2="36.1" y2="409.0" stroke-width="0.69"/><line x1="36.1" y1="409.0" x2="36.0" y2="413.5" stroke-width="0.44"/><line x1="36.1" y1="409.0" x2="32.9" y2="412.6" stroke-width="0.44"/><line x1="37.8" y1="403.1" x2="31.6" y2="405.3" stroke-width="0.69"/><line x1="31.6" y1="405.3" x2="27.8" y2="408.5" stroke-width="0.44"/><line x1="31.6" y1="405.3" x2="26.7" y2="405.0" stroke-width="0.44"/><line x1="44.4" y1="396.9" x2="36.0" y2="394.8" stroke-width="1.01"/><line x1="36.0" y1="394.8" x2="30.0" y2="397.0" stroke-width="0.69"/><line x1="30.0" y1="397.0" x2="27.7" y2="401.1" stroke-width="0.44"/><line x1="30.0" y1="397.0" x2="25.4" y2="396.1" stroke-width="0.44"/><line x1="36.0" y1="394.8" x2="32.2" y2="389.4" stroke-width="0.69"/><line x1="32.2" y1="389.4" x2="28.1" y2="386.6" stroke-width="0.44"/><line x1="32.2" y1="389.4" x2="31.3" y2="384.5" stroke-width="0.44"/><line x1="56.0" y1="406.0" x2="48.4" y2="413.9" stroke-width="1.25"/><line x1="48.4" y1="413.9" x2="46.5" y2="421.2" stroke-width="0.88"/><line x1="46.5" y1="421.2" x2="47.6" y2="426.8" stroke-width="0.58"/><line x1="46.5" y1="421.2" x2="43.1" y2="425.7" stroke-width="0.58"/><line x1="48.4" y1="413.9" x2="40.5" y2="416.0" stroke-width="0.88"/><line x1="40.5" y1="416.0" x2="36.1" y2="419.5" stroke-width="0.58"/><line x1="40.5" y1="416.0" x2="34.1" y2="414.8" stroke-width="0.58"/><line x1="56.0" y1="416.0" x2="49.3" y2="420.4" stroke-width="1.08"/><line x1="49.3" y1="420.4" x2="47.3" y2="425.9" stroke-width="0.74"/><line x1="47.3" y1="425.9" x2="47.5" y2="430.5" stroke-width="0.48"/><line x1="47.3" y1="425.9" x2="44.5" y2="429.4" stroke-width="0.48"/><line x1="49.3" y1="420.4" x2="42.9" y2="421.2" stroke-width="0.74"/><line x1="42.9" y1="421.2" x2="39.8" y2="424.4" stroke-width="0.48"/><line x1="42.9" y1="421.2" x2="39.4" y2="418.4" stroke-width="0.48"/><line x1="54.0" y1="404.0" x2="55.2" y2="413.9" stroke-width="1.42"/><line x1="55.2" y1="413.9" x2="59.1" y2="419.8" stroke-width="1.01"/><line x1="59.1" y1="419.8" x2="63.6" y2="421.3" stroke-width="0.69"/><line x1="59.1" y1="419.8" x2="59.6" y2="424.6" stroke-width="0.69"/><line x1="59.6" y1="424.6" x2="60.7" y2="425.9" stroke-width="0.44"/><line x1="59.6" y1="424.6" x2="58.5" y2="427.9" stroke-width="0.44"/><line x1="55.2" y1="413.9" x2="53.9" y2="420.8" stroke-width="1.01"/><line x1="53.9" y1="420.8" x2="56.1" y2="425.6" stroke-width="0.69"/><line x1="56.1" y1="425.6" x2="58.9" y2="428.3" stroke-width="0.44"/><line x1="56.1" y1="425.6" x2="55.6" y2="429.4" stroke-width="0.44"/><line x1="53.9" y1="420.8" x2="50.5" y2="424.7" stroke-width="0.69"/><line x1="50.5" y1="424.7" x2="50.2" y2="428.6" stroke-width="0.44"/><line x1="50.5" y1="424.7" x2="46.5" y2="426.0" stroke-width="0.44"/><line x1="54.0" y1="404.0" x2="59.8" y2="412.1" stroke-width="1.25"/><line x1="59.8" y1="412.1" x2="66.6" y2="414.1" stroke-width="0.88"/><line x1="59.8" y1="412.1" x2="59.5" y2="419.0" stroke-width="0.88"/><line x1="59.5" y1="419.0" x2="61.9" y2="423.8" stroke-width="0.58"/><line x1="59.5" y1="419.0" x2="56.5" y2="423.0" stroke-width="0.58"/><line x1="62.0" y1="366.0" x2="66.9" y2="370.9" stroke-width="0.74"/><line x1="66.9" y1="370.9" x2="71.8" y2="372.3" stroke-width="0.48"/><line x1="66.9" y1="370.9" x2="68.0" y2="376.1" stroke-width="0.48"/><line x1="111.0" y1="345.0" x2="120.8" y2="343.0" stroke-width="1.25"/><line x1="120.8" y1="343.0" x2="126.0" y2="338.5" stroke-width="0.88"/><line x1="126.0" y1="338.5" x2="128.1" y2="333.6" stroke-width="0.58"/><line x1="126.0" y1="338.5" x2="131.2" y2="336.4" stroke-width="0.58"/><line x1="120.8" y1="343.0" x2="127.8" y2="345.6" stroke-width="0.88"/><line x1="127.8" y1="345.6" x2="133.7" y2="345.0" stroke-width="0.58"/><line x1="127.8" y1="345.6" x2="131.0" y2="349.8" stroke-width="0.58"/><line x1="117.0" y1="336.0" x2="124.9" y2="329.9" stroke-width="1.25"/><line x1="124.9" y1="329.9" x2="127.9" y2="322.5" stroke-width="0.88"/><line x1="127.9" y1="322.5" x2="128.1" y2="316.4" stroke-width="0.58"/><line x1="127.9" y1="322.5" x2="132.1" y2="318.8" stroke-width="0.58"/><line x1="124.9" y1="329.9" x2="132.8" y2="327.6" stroke-width="0.88"/><line x1="132.8" y1="327.6" x2="136.5" y2="322.4" stroke-width="0.58"/><line x1="132.8" y1="327.6" x2="139.2" y2="329.1" stroke-width="0.58"/><line x1="120.0" y1="328.0" x2="116.0" y2="320.0" stroke-width="1.08"/><line x1="116.0" y1="320.0" x2="110.7" y2="316.4" stroke-width="0.74"/><line x1="110.7" y1="316.4" x2="105.9" y2="316.4" stroke-width="0.48"/><line x1="110.7" y1="316.4" x2="108.5" y2="312.0" stroke-width="0.48"/><line x1="116.0" y1="320.0" x2="116.4" y2="313.3" stroke-width="0.74"/><line x1="116.4" y1="313.3" x2="114.0" y2="309.1" stroke-width="0.48"/><line x1="116.4" y1="313.3" x2="119.5" y2="309.6" stroke-width="0.48"/><line x1="127.0" y1="308.0" x2="130.0" y2="300.6" stroke-width="1.08"/><line x1="127.0" y1="308.0" x2="124.0" y2="300.6" stroke-width="1.08"/><line x1="106.0" y1="352.0" x2="113.0" y2="351.3" stroke-width="0.91"/><line x1="113.0" y1="351.3" x2="117.8" y2="348.2" stroke-width="0.61"/><line x1="117.8" y1="348.2" x2="120.0" y2="344.6" stroke-width="0.38"/><line x1="117.8" y1="348.2" x2="122.4" y2="348.1" stroke-width="0.38"/><line x1="113.0" y1="351.3" x2="118.2" y2="352.1" stroke-width="0.61"/><line x1="118.2" y1="352.1" x2="121.6" y2="350.4" stroke-width="0.38"/><line x1="118.2" y1="352.1" x2="121.4" y2="354.4" stroke-width="0.38"/><line x1="106.0" y1="366.0" x2="117.6" y2="363.1" stroke-width="1.42"/><line x1="117.6" y1="363.1" x2="125.4" y2="358.4" stroke-width="1.01"/><line x1="125.4" y1="358.4" x2="128.8" y2="352.1" stroke-width="0.69"/><line x1="128.8" y1="352.1" x2="129.2" y2="346.4" stroke-width="0.44"/><line x1="128.8" y1="352.1" x2="133.1" y2="348.3" stroke-width="0.44"/><line x1="125.4" y1="358.4" x2="131.9" y2="357.6" stroke-width="0.69"/><line x1="131.9" y1="357.6" x2="135.8" y2="355.1" stroke-width="0.44"/><line x1="131.9" y1="357.6" x2="136.3" y2="360.1" stroke-width="0.44"/><line x1="117.6" y1="363.1" x2="127.0" y2="364.7" stroke-width="1.01"/><line x1="127.0" y1="364.7" x2="134.3" y2="361.8" stroke-width="0.69"/><line x1="134.3" y1="361.8" x2="137.4" y2="356.8" stroke-width="0.44"/><line x1="134.3" y1="361.8" x2="140.5" y2="362.1" stroke-width="0.44"/><line x1="127.0" y1="364.7" x2="131.6" y2="369.8" stroke-width="0.69"/><line x1="131.6" y1="369.8" x2="136.8" y2="372.0" stroke-width="0.44"/><line x1="131.6" y1="369.8" x2="132.0" y2="374.8" stroke-width="0.44"/><line x1="107.0" y1="380.0" x2="118.9" y2="378.8" stroke-width="1.42"/><line x1="118.9" y1="378.8" x2="125.1" y2="373.1" stroke-width="1.01"/><line x1="125.1" y1="373.1" x2="127.2" y2="366.6" stroke-width="0.69"/><line x1="127.2" y1="366.6" x2="125.6" y2="361.9" stroke-width="0.44"/><line x1="127.2" y1="366.6" x2="130.6" y2="363.3" stroke-width="0.44"/><line x1="125.1" y1="373.1" x2="131.8" y2="373.1" stroke-width="0.69"/><line x1="131.8" y1="373.1" x2="135.9" y2="371.0" stroke-width="0.44"/><line x1="131.8" y1="373.1" x2="136.6" y2="374.4" stroke-width="0.44"/><line x1="118.9" y1="378.8" x2="127.4" y2="382.4" stroke-width="1.01"/><line x1="127.4" y1="382.4" x2="134.0" y2="382.7" stroke-width="0.69"/><line x1="134.0" y1="382.7" x2="138.6" y2="380.1" stroke-width="0.44"/><line x1="134.0" y1="382.7" x2="137.6" y2="386.1" stroke-width="0.44"/><line x1="127.4" y1="382.4" x2="132.2" y2="388.1" stroke-width="0.69"/><line x1="132.2" y1="388.1" x2="137.8" y2="390.1" stroke-width="0.44"/><line x1="132.2" y1="388.1" x2="132.5" y2="393.4" stroke-width="0.44"/><line x1="106.0" y1="394.0" x2="117.9" y2="395.8" stroke-width="1.42"/><line x1="117.9" y1="395.8" x2="126.1" y2="393.3" stroke-width="1.01"/><line x1="126.1" y1="393.3" x2="130.6" y2="388.2" stroke-width="0.69"/><line x1="130.6" y1="388.2" x2="131.0" y2="382.6" stroke-width="0.44"/><line x1="130.6" y1="388.2" x2="136.0" y2="387.1" stroke-width="0.44"/><line x1="126.1" y1="393.3" x2="132.2" y2="394.2" stroke-width="0.69"/><line x1="132.2" y1="394.2" x2="136.1" y2="392.3" stroke-width="0.44"/><line x1="132.2" y1="394.2" x2="135.4" y2="397.1" stroke-width="0.44"/><line x1="117.9" y1="395.8" x2="125.6" y2="400.5" stroke-width="1.01"/><line x1="125.6" y1="400.5" x2="132.4" y2="400.4" stroke-width="0.69"/><line x1="132.4" y1="400.4" x2="136.5" y2="397.9" stroke-width="0.44"/><line x1="132.4" y1="400.4" x2="137.3" y2="402.8" stroke-width="0.44"/><line x1="125.6" y1="400.5" x2="128.6" y2="405.9" stroke-width="0.69"/><line x1="128.6" y1="405.9" x2="132.7" y2="408.5" stroke-width="0.44"/><line x1="128.6" y1="405.9" x2="128.0" y2="410.4" stroke-width="0.44"/><line x1="106.0" y1="406.0" x2="113.6" y2="413.9" stroke-width="1.25"/><line x1="113.6" y1="413.9" x2="121.1" y2="415.8" stroke-width="0.88"/><line x1="121.1" y1="415.8" x2="126.6" y2="413.5" stroke-width="0.58"/><line x1="121.1" y1="415.8" x2="125.3" y2="420.1" stroke-width="0.58"/><line x1="113.6" y1="413.9" x2="115.9" y2="422.3" stroke-width="0.88"/><line x1="115.9" y1="422.3" x2="120.0" y2="426.7" stroke-width="0.58"/><line x1="115.9" y1="422.3" x2="115.0" y2="428.9" stroke-width="0.58"/><line x1="106.0" y1="416.0" x2="112.7" y2="420.4" stroke-width="1.08"/><line x1="112.7" y1="420.4" x2="118.3" y2="420.8" stroke-width="0.74"/><line x1="118.3" y1="420.8" x2="122.0" y2="419.0" stroke-width="0.48"/><line x1="118.3" y1="420.8" x2="121.8" y2="423.1" stroke-width="0.48"/><line x1="112.7" y1="420.4" x2="114.8" y2="426.6" stroke-width="0.74"/><line x1="114.8" y1="426.6" x2="117.5" y2="430.8" stroke-width="0.48"/><line x1="114.8" y1="426.6" x2="114.2" y2="431.5" stroke-width="0.48"/><line x1="102.0" y1="408.0" x2="105.7" y2="417.3" stroke-width="1.25"/><line x1="105.7" y1="417.3" x2="111.0" y2="422.0" stroke-width="0.88"/><line x1="111.0" y1="422.0" x2="115.9" y2="423.4" stroke-width="0.58"/><line x1="111.0" y1="422.0" x2="111.5" y2="427.0" stroke-width="0.58"/><line x1="105.7" y1="417.3" x2="105.7" y2="421.4" stroke-width="0.88"/><line x1="105.7" y1="421.4" x2="107.2" y2="424.3" stroke-width="0.58"/><line x1="105.7" y1="421.4" x2="105.0" y2="422.8" stroke-width="0.58"/><line x1="105.0" y1="400.0" x2="100.0" y2="406.2" stroke-width="0.91"/><line x1="100.0" y1="406.2" x2="98.9" y2="409.3" stroke-width="0.61"/><line x1="56.0" y1="400.0" x2="59.7" y2="404.7" stroke-width="0.74"/><line x1="59.7" y1="404.7" x2="64.1" y2="407.0" stroke-width="0.48"/><line x1="59.7" y1="404.7" x2="60.0" y2="409.2" stroke-width="0.48"/></g><g stroke="#7f8a8a" stroke-width="0.7" opacity="0.9"><line x1="76.7" y1="341.5" x2="72.4" y2="337.9"/><line x1="75.3" y1="343.2" x2="71.0" y2="339.6"/><line x1="73.9" y1="344.9" x2="69.6" y2="341.4"/><line x1="72.4" y1="346.6" x2="68.1" y2="343.1"/><line x1="71.0" y1="348.4" x2="66.7" y2="344.8"/><line x1="69.6" y1="350.1" x2="65.3" y2="346.5"/><line x1="67.5" y1="353.0" x2="63.0" y2="351.5"/><line x1="66.7" y1="355.2" x2="62.3" y2="353.8"/><line x1="66.0" y1="357.5" x2="61.5" y2="356.0"/><line x1="65.2" y1="359.7" x2="60.8" y2="358.3"/><line x1="64.5" y1="362.0" x2="60.0" y2="360.5"/><line x1="63.7" y1="364.2" x2="59.3" y2="362.8"/><line x1="63.0" y1="366.5" x2="58.5" y2="365.0"/><line x1="61.3" y1="370.9" x2="57.7" y2="370.1"/><line x1="60.8" y1="373.4" x2="57.2" y2="372.6"/><line x1="60.3" y1="375.9" x2="56.7" y2="375.1"/><line x1="59.8" y1="378.4" x2="56.2" y2="377.6"/><line x1="59.3" y1="380.9" x2="55.7" y2="380.1"/><line x1="58.8" y1="383.4" x2="55.2" y2="382.6"/><line x1="58.3" y1="385.9" x2="54.7" y2="385.1"/><line x1="57.1" y1="390.5" x2="54.3" y2="390.1"/><line x1="56.8" y1="392.7" x2="54.0" y2="392.4"/><line x1="56.5" y1="395.0" x2="53.8" y2="394.7"/><line x1="56.2" y1="397.3" x2="53.5" y2="397.0"/><line x1="56.0" y1="399.6" x2="53.2" y2="399.3"/><line x1="55.7" y1="401.9" x2="52.9" y2="401.5"/><line x1="83.7" y1="337.3" x2="80.3" y2="341.7"/><line x1="85.7" y1="338.8" x2="82.3" y2="343.2"/><line x1="87.7" y1="340.3" x2="84.3" y2="344.7"/><line x1="89.7" y1="341.8" x2="86.3" y2="346.2"/><line x1="91.7" y1="343.3" x2="88.3" y2="347.7"/><line x1="95.5" y1="346.9" x2="92.2" y2="350.5"/><line x1="97.3" y1="348.5" x2="94.0" y2="352.1"/><line x1="99.1" y1="350.2" x2="95.9" y2="353.8"/><line x1="101.0" y1="351.9" x2="97.7" y2="355.5"/><line x1="102.8" y1="353.5" x2="99.5" y2="357.1"/><line x1="105.6" y1="358.8" x2="101.5" y2="359.8"/><line x1="106.2" y1="361.1" x2="102.1" y2="362.1"/><line x1="106.8" y1="363.3" x2="102.7" y2="364.4"/><line x1="107.3" y1="365.6" x2="103.2" y2="366.7"/><line x1="107.9" y1="367.9" x2="103.8" y2="368.9"/><line x1="108.5" y1="370.2" x2="104.4" y2="371.2"/><line x1="108.5" y1="375.6" x2="105.0" y2="375.2"/><line x1="108.2" y1="377.9" x2="104.8" y2="377.6"/><line x1="108.0" y1="380.3" x2="104.5" y2="379.9"/><line x1="107.7" y1="382.7" x2="104.3" y2="382.3"/><line x1="107.5" y1="385.1" x2="104.0" y2="384.7"/><line x1="107.2" y1="387.4" x2="103.8" y2="387.1"/><line x1="107.0" y1="389.8" x2="103.5" y2="389.4"/><line x1="105.9" y1="394.5" x2="103.2" y2="394.0"/><line x1="105.5" y1="396.8" x2="102.8" y2="396.3"/><line x1="105.1" y1="399.1" x2="102.3" y2="398.6"/><line x1="104.7" y1="401.4" x2="101.9" y2="400.9"/><line x1="104.2" y1="403.7" x2="101.5" y2="403.2"/><line x1="103.8" y1="406.0" x2="101.1" y2="405.5"/><line x1="61.3" y1="347.5" x2="62.3" y2="344.9"/><line x1="59.1" y1="346.7" x2="60.1" y2="344.1"/><line x1="56.9" y1="345.9" x2="57.9" y2="343.3"/><line x1="54.7" y1="345.1" x2="55.7" y2="342.5"/><line x1="51.1" y1="341.3" x2="53.2" y2="340.4"/><line x1="50.2" y1="339.1" x2="52.4" y2="338.3"/><line x1="49.4" y1="337.0" x2="51.5" y2="336.1"/><line x1="48.5" y1="334.9" x2="50.6" y2="334.0"/><line x1="47.6" y1="332.7" x2="49.8" y2="331.9"/><line x1="46.8" y1="330.6" x2="48.9" y2="329.7"/><line x1="46.0" y1="325.6" x2="47.8" y2="325.5"/><line x1="45.9" y1="323.2" x2="47.7" y2="323.1"/><line x1="45.8" y1="320.7" x2="47.6" y2="320.6"/><line x1="45.7" y1="318.3" x2="47.5" y2="318.2"/><line x1="45.5" y1="315.8" x2="47.3" y2="315.7"/><line x1="45.4" y1="313.4" x2="47.2" y2="313.3"/><line x1="45.3" y1="310.9" x2="47.1" y2="310.8"/><line x1="45.2" y1="308.5" x2="47.0" y2="308.4"/><line x1="103.2" y1="354.2" x2="105.5" y2="355.8"/><line x1="104.5" y1="352.2" x2="106.8" y2="353.8"/><line x1="105.8" y1="350.2" x2="108.2" y2="351.8"/><line x1="107.2" y1="348.2" x2="109.5" y2="349.8"/><line x1="108.5" y1="346.2" x2="110.8" y2="347.8"/><line x1="111.3" y1="342.3" x2="113.3" y2="343.4"/><line x1="112.6" y1="340.1" x2="114.6" y2="341.3"/><line x1="113.9" y1="338.0" x2="115.8" y2="339.2"/><line x1="115.2" y1="335.8" x2="117.1" y2="337.0"/><line x1="116.4" y1="333.7" x2="118.4" y2="334.9"/><line x1="117.7" y1="331.6" x2="119.7" y2="332.7"/><line x1="119.8" y1="327.3" x2="121.6" y2="327.9"/><line x1="120.5" y1="324.9" x2="122.3" y2="325.5"/><line x1="121.2" y1="322.5" x2="123.0" y2="323.1"/><line x1="121.9" y1="320.1" x2="123.7" y2="320.7"/><line x1="122.6" y1="317.7" x2="124.4" y2="318.3"/><line x1="123.3" y1="315.3" x2="125.1" y2="315.9"/><line x1="124.0" y1="312.9" x2="125.8" y2="313.5"/><line x1="124.7" y1="310.5" x2="126.5" y2="311.1"/><line x1="125.4" y1="308.1" x2="127.2" y2="308.7"/></g><g fill="#d8103c" stroke="#30109c" stroke-width="1.25" stroke-linejoin="miter"><polygon points="20.0,373.9 28.0,373.9 24.0,381.2"/><polygon points="15.6,382.2 23.6,382.2 19.6,389.5"/><polygon points="25.3,393.9 33.3,393.9 29.3,401.2"/><polygon points="23.8,404.4 31.8,404.4 27.8,411.7"/><polygon points="59.3,425.1 67.3,425.1 63.3,432.4"/><polygon points="127.6,381.3 135.6,381.3 131.6,388.6"/><polygon points="100.4,391.1 108.4,391.1 104.4,398.4"/><polygon points="109.3,390.2 117.3,390.2 113.3,397.5"/><polygon points="102.7,397.7 110.7,397.7 106.7,405.0"/><polygon points="114.2,397.7 122.2,397.7 118.2,405.0"/><polygon points="128.9,399.5 136.9,399.5 132.9,406.8"/><polygon points="119.3,404.4 127.3,404.4 123.3,411.7"/><polygon points="88.2,423.5 96.2,423.5 92.2,430.8"/><polygon points="104.4,424.4 112.4,424.4 108.4,431.7"/></g><g fill="#ef5c1c" stroke="#5c1c48" stroke-width="0.8" stroke-linejoin="miter"><polygon points="61.8,303.5 65.9,310.9 57.7,310.9"/><polygon points="61.1,311.3 65.2,318.7 57.0,318.7"/><polygon points="26.7,314.7 30.8,322.1 22.6,322.1"/><polygon points="36.0,312.9 40.1,320.3 31.9,320.3"/><polygon points="84.0,300.2 88.1,307.6 79.9,307.6"/><polygon points="109.3,306.2 113.4,313.6 105.2,313.6"/><polygon points="130.7,306.2 134.8,313.6 126.6,313.6"/><polygon points="111.1,316.9 115.2,324.3 107.0,324.3"/><polygon points="121.8,314.2 125.9,321.6 117.7,321.6"/><polygon points="104.0,322.4 108.1,329.8 99.9,329.8"/><polygon points="115.1,324.7 119.2,332.1 111.0,332.1"/><polygon points="147.1,326.2 151.2,333.6 143.0,333.6"/><polygon points="112.9,331.3 117.0,338.7 108.8,338.7"/><polygon points="128.4,332.4 132.5,339.8 124.3,339.8"/><polygon points="121.1,335.8 125.2,343.2 117.0,343.2"/><polygon points="42.2,349.1 46.3,356.5 38.1,356.5"/><polygon points="49.3,352.9 53.4,360.3 45.2,360.3"/><polygon points="66.7,344.0 70.8,351.4 62.6,351.4"/><polygon points="36.0,380.2 40.1,387.6 31.9,387.6"/><polygon points="64.0,406.9 68.1,414.3 59.9,414.3"/><polygon points="96.0,344.7 100.1,352.1 91.9,352.1"/><polygon points="115.1,341.8 119.2,349.2 111.0,349.2"/><polygon points="122.2,345.8 126.3,353.2 118.1,353.2"/><polygon points="152.2,344.7 156.3,352.1 148.1,352.1"/><polygon points="130.7,369.8 134.8,377.2 126.6,377.2"/><polygon points="149.3,380.2 153.4,387.6 145.2,387.6"/><polygon points="133.3,390.7 137.4,398.1 129.2,398.1"/><polygon points="144.4,403.1 148.5,410.5 140.3,410.5"/><polygon points="100.0,414.7 104.1,422.1 95.9,422.1"/></g><g fill="#fbe812" stroke="#7c5c14" stroke-width="0.8"><polygon points="71.6,255.2 73.8,251.1 78.2,251.1 80.4,255.2 78.2,259.3 73.8,259.3"/><polygon points="42.3,303.4 44.5,299.3 48.9,299.3 51.1,303.4 48.9,307.5 44.5,307.5"/><polygon points="32.9,309.2 35.1,305.1 39.5,305.1 41.7,309.2 39.5,313.3 35.1,313.3"/><polygon points="54.5,322.6 56.7,318.5 61.1,318.5 63.3,322.6 61.1,326.7 56.7,326.7"/><polygon points="27.8,325.2 30.0,321.1 34.4,321.1 36.6,325.2 34.4,329.3 30.0,329.3"/><polygon points="35.2,328.6 37.4,324.5 41.8,324.5 44.0,328.6 41.8,332.7 37.4,332.7"/><polygon points="44.0,329.2 46.2,325.1 50.6,325.1 52.8,329.2 50.6,333.3 46.2,333.3"/><polygon points="14.5,329.7 16.7,325.6 21.1,325.6 23.3,329.7 21.1,333.8 16.7,333.8"/><polygon points="16.0,338.6 18.2,334.5 22.6,334.5 24.8,338.6 22.6,342.7 18.2,342.7"/><polygon points="26.7,336.3 28.9,332.2 33.3,332.2 35.5,336.3 33.3,340.4 28.9,340.4"/><polygon points="75.1,315.9 77.3,311.8 81.7,311.8 83.9,315.9 81.7,320.0 77.3,320.0"/><polygon points="71.6,331.4 73.8,327.3 78.2,327.3 80.4,331.4 78.2,335.5 73.8,335.5"/><polygon points="72.3,339.7 74.5,335.6 78.9,335.6 81.1,339.7 78.9,343.8 74.5,343.8"/><polygon points="87.8,258.1 90.0,254.0 94.4,254.0 96.6,258.1 94.4,262.2 90.0,262.2"/><polygon points="77.4,274.1 79.6,270.0 84.0,270.0 86.2,274.1 84.0,278.2 79.6,278.2"/><polygon points="82.7,283.4 84.9,279.3 89.3,279.3 91.5,283.4 89.3,287.5 84.9,287.5"/><polygon points="77.4,295.2 79.6,291.1 84.0,291.1 86.2,295.2 84.0,299.3 79.6,299.3"/><polygon points="112.9,304.1 115.1,300.0 119.5,300.0 121.7,304.1 119.5,308.2 115.1,308.2"/><polygon points="127.8,321.9 130.0,317.8 134.4,317.8 136.6,321.9 134.4,326.0 130.0,326.0"/><polygon points="135.6,324.8 137.8,320.7 142.2,320.7 144.4,324.8 142.2,328.9 137.8,328.9"/><polygon points="132.9,333.0 135.1,328.9 139.5,328.9 141.7,333.0 139.5,337.1 135.1,337.1"/><polygon points="147.8,339.7 150.0,335.6 154.4,335.6 156.6,339.7 154.4,343.8 150.0,343.8"/><polygon points="78.3,324.8 80.5,320.7 84.9,320.7 87.1,324.8 84.9,328.9 80.5,328.9"/><polygon points="81.2,336.3 83.4,332.2 87.8,332.2 90.0,336.3 87.8,340.4 83.4,340.4"/><polygon points="24.5,357.4 26.7,353.3 31.1,353.3 33.3,357.4 31.1,361.5 26.7,361.5"/><polygon points="24.0,366.3 26.2,362.2 30.6,362.2 32.8,366.3 30.6,370.4 26.2,370.4"/><polygon points="50.7,368.6 52.9,364.5 57.3,364.5 59.5,368.6 57.3,372.7 52.9,372.7"/><polygon points="56.7,373.7 58.9,369.6 63.3,369.6 65.5,373.7 63.3,377.8 58.9,377.8"/><polygon points="60.0,364.8 62.2,360.7 66.6,360.7 68.8,364.8 66.6,368.9 62.2,368.9"/><polygon points="63.4,356.8 65.6,352.7 70.0,352.7 72.2,356.8 70.0,360.9 65.6,360.9"/><polygon points="52.3,380.8 54.5,376.7 58.9,376.7 61.1,380.8 58.9,384.9 54.5,384.9"/><polygon points="50.7,391.4 52.9,387.3 57.3,387.3 59.5,391.4 57.3,395.5 52.9,395.5"/><polygon points="47.2,401.2 49.4,397.1 53.8,397.1 56.0,401.2 53.8,405.3 49.4,405.3"/><polygon points="106.3,352.3 108.5,348.2 112.9,348.2 115.1,352.3 112.9,356.4 108.5,356.4"/><polygon points="96.7,357.4 98.9,353.3 103.3,353.3 105.5,357.4 103.3,361.5 98.9,361.5"/><polygon points="128.9,355.2 131.1,351.1 135.5,351.1 137.7,355.2 135.5,359.3 131.1,359.3"/><polygon points="138.3,353.0 140.5,348.9 144.9,348.9 147.1,353.0 144.9,357.1 140.5,357.1"/><polygon points="102.3,364.8 104.5,360.7 108.9,360.7 111.1,364.8 108.9,368.9 104.5,368.9"/><polygon points="118.9,364.8 121.1,360.7 125.5,360.7 127.7,364.8 125.5,368.9 121.1,368.9"/><polygon points="144.0,364.1 146.2,360.0 150.6,360.0 152.8,364.1 150.6,368.2 146.2,368.2"/><polygon points="136.0,370.1 138.2,366.0 142.6,366.0 144.8,370.1 142.6,374.2 138.2,374.2"/><polygon points="103.4,376.8 105.6,372.7 110.0,372.7 112.2,376.8 110.0,380.9 105.6,380.9"/><polygon points="112.3,378.1 114.5,374.0 118.9,374.0 121.1,378.1 118.9,382.2 114.5,382.2"/><polygon points="115.6,388.6 117.8,384.5 122.2,384.5 124.4,388.6 122.2,392.7 117.8,392.7"/><polygon points="105.6,413.7 107.8,409.6 112.2,409.6 114.4,413.7 112.2,417.8 107.8,417.8"/><polygon points="131.6,420.8 133.8,416.7 138.2,416.7 140.4,420.8 138.2,424.9 133.8,424.9"/><polygon points="111.6,438.1 113.8,434.0 118.2,434.0 120.4,438.1 118.2,442.2 113.8,442.2"/></g></svg>
<div class="abs" style="left:470px;top:243px;width:140px;height:202px;background:#dcdee1;border:1px solid #7a8492;border-left-color:#b4bac2"></div>
<div class="abs" style="left:474.5px;top:246.5px;width:73px;height:12.5px;border-radius:4px;background:linear-gradient(#f2f2f2,#e6e6e6);border:1px solid #c2c2c2"></div>
<div class="t" style="left:474.5px;top:247px;width:73px;text-align:center;font-size:7px;line-height:12.5px;color:#222">Amélioration</div>
<div class="abs" style="left:575px;top:246.5px;width:60px;height:12.5px;border-radius:4px;background:linear-gradient(#f2f2f2,#e6e6e6);border:1px solid #c2c2c2"></div>
<div class="t" style="left:590.5px;top:247px;font-size:7px;line-height:12.5px;color:#222">Aggravation</div>
<svg class="abs" style="left:471px;top:262px" width="129" height="181" viewBox="471 262 129 181"><rect x="471" y="262" width="129" height="181" fill="#000"/><line x1="494.3" y1="262" x2="494.3" y2="443" stroke="#44744a" stroke-width="0.8"/><line x1="517.5" y1="262" x2="517.5" y2="443" stroke="#44744a" stroke-width="0.8"/><line x1="540.5" y1="262" x2="540.5" y2="443" stroke="#44744a" stroke-width="0.8"/><line x1="563.6" y1="262" x2="563.6" y2="443" stroke="#44744a" stroke-width="0.8"/><line x1="586.3" y1="262" x2="586.3" y2="443" stroke="#44744a" stroke-width="0.8"/><line x1="471" y1="276" x2="600" y2="276" stroke="#44744a" stroke-width="0.8"/><line x1="471" y1="304" x2="600" y2="304" stroke="#44744a" stroke-width="0.8"/><line x1="471" y1="332" x2="600" y2="332" stroke="#44744a" stroke-width="0.8"/><line x1="471" y1="360" x2="600" y2="360" stroke="#44744a" stroke-width="0.8"/><line x1="471" y1="388" x2="600" y2="388" stroke="#44744a" stroke-width="0.8"/><line x1="471" y1="416" x2="600" y2="416" stroke="#44744a" stroke-width="0.8"/><path d="M471,356 C477,332 485,303 494,303 C503,303 510,326 520,336 C535,350 552,372 563,373 C573,373 585,338 600,318" stroke="#1414d8" stroke-width="3.3" fill="none"/><path d="M471,362 C478,338 486,313 494,312.5 C503,312 512,333 525,345 C540,360 555,390 563,390 C573,390 586,347 600,330" stroke="#f0a060" stroke-width="1.2" fill="none"/><path d="M471,362 C478,336 486,307 494,307 C503,307 512,330 525,343 C540,358 555,390 563,390 C573,390 586,345 600,327" stroke="#c050c0" stroke-width="1.4" fill="none"/><path d="M471,350 C478,346 486,343 494,343 C505,343.5 520,347 540,350.5 C553,353 566,355.5 580,357 C588,357.5 595,355 600,353" stroke="#e02222" stroke-width="2.4" fill="none"/></svg>
<div class="abs" style="left:470px;top:443px;width:130px;height:4px;background:#e4e6ea"></div><div class="abs" style="left:0;top:447.5px;width:600px;height:1px;background:#f4f5f7"></div>
<div class="abs" style="left:0;top:448.5px;width:600px;height:1.5px;background:#000"></div>
</body></html>
